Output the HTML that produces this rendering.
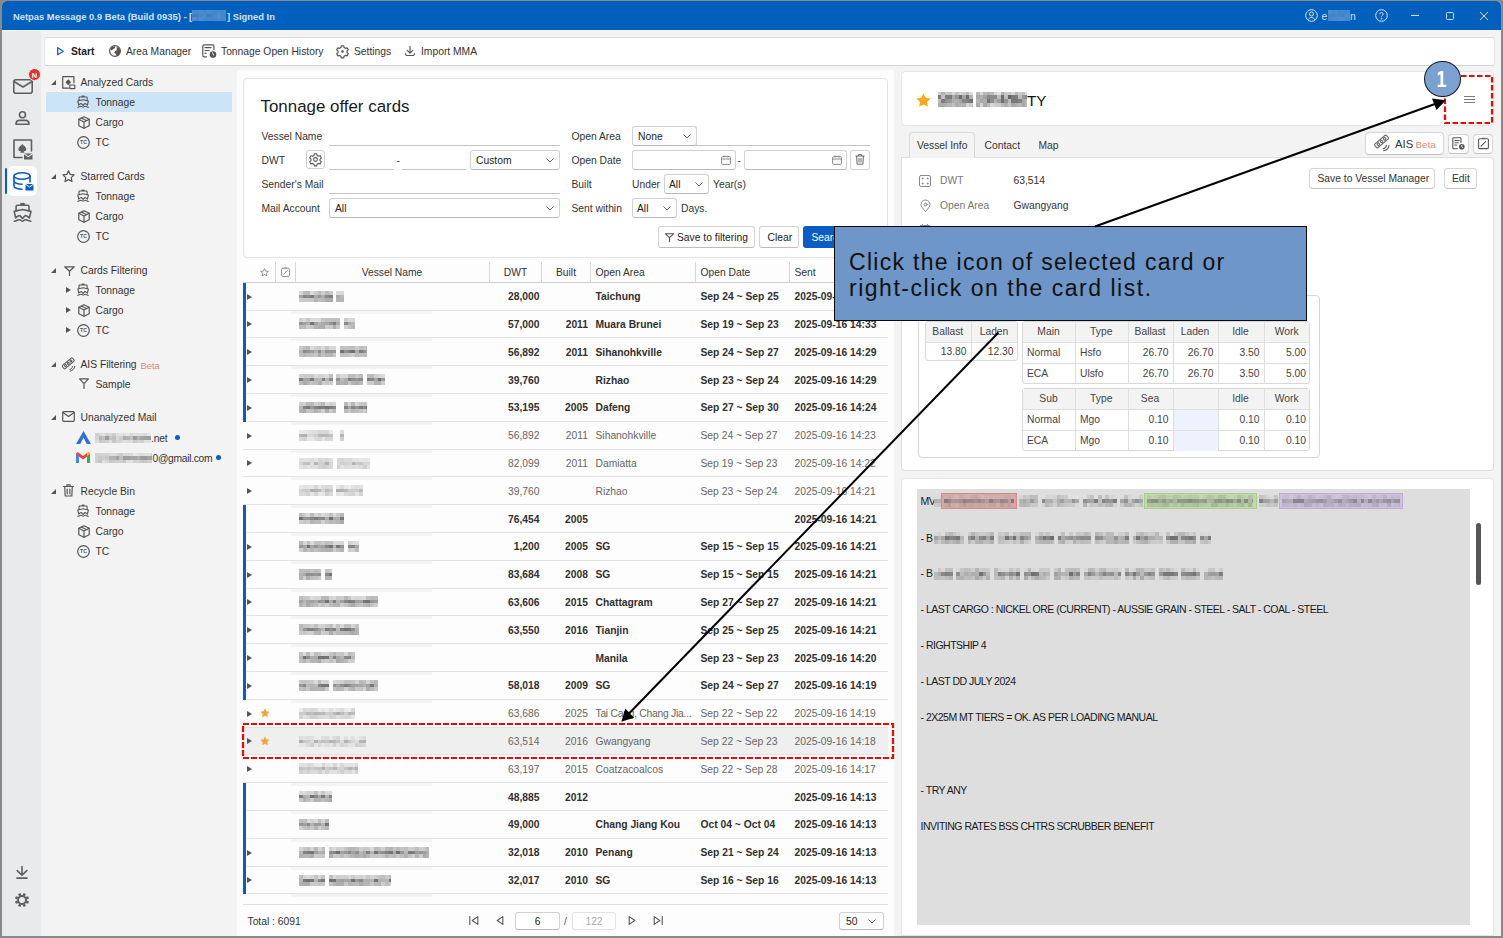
<!DOCTYPE html><html><head><meta charset="utf-8"><title>Netpas Message</title><style>
*{box-sizing:border-box}
html,body{margin:0;padding:0}
body{width:1503px;height:938px;overflow:hidden;position:relative;background:#8a8a8a;font-family:"Liberation Sans",sans-serif;font-size:10.3px;color:#333}
.a{position:absolute}
.t{position:absolute;white-space:nowrap;line-height:14px}
svg{position:absolute;overflow:visible}
</style></head><body>
<div class="a" style="left:2px;top:1px;width:1499px;height:935px;background:#f3f3f3;border-radius:5px 5px 0 0"></div>
<div class="a" style="left:2px;top:1px;width:1499px;height:29px;background:#0160be;border-radius:5px 5px 0 0"></div>
<div class="t" style="left:13px;top:9.5px;font-size:9.4px;color:#d3e3f4;font-weight:bold;">Netpas Message 0.9 Beta (Build 0935) - [</div>
<div class="a" style="left:192px;top:10.0px;width:34px;height:3.67px;background:linear-gradient(90deg,rgba(234,234,234,0.3) 0.0px 3.5px,rgba(229,229,229,0.3) 3.5px 7.0px,rgba(244,244,244,0.3) 7.0px 10.5px,rgba(227,227,227,0.3) 10.5px 14.0px,rgba(241,241,241,0.3) 14.0px 17.5px,rgba(235,235,235,0.3) 17.5px 21.0px,rgba(226,226,226,0.3) 21.0px 24.5px,rgba(240,240,240,0.3) 24.5px 28.0px,rgba(226,226,226,0.3) 28.0px 31.5px,rgba(238,238,238,0.3) 31.5px 34.0px)"></div><div class="a" style="left:192px;top:13.7px;width:34px;height:3.67px;background:linear-gradient(90deg,rgba(199,199,199,0.3) 0.0px 3.5px,rgba(200,200,200,0.3) 3.5px 7.0px,rgba(220,220,220,0.3) 7.0px 10.5px,rgba(244,244,244,0.3) 10.5px 14.0px,rgba(202,202,202,0.3) 14.0px 17.5px,rgba(208,208,208,0.3) 17.5px 21.0px,rgba(232,232,232,0.3) 21.0px 24.5px,rgba(251,251,251,0.3) 24.5px 28.0px,rgba(229,229,229,0.3) 28.0px 31.5px,rgba(218,218,218,0.3) 31.5px 34.0px)"></div><div class="a" style="left:192px;top:17.3px;width:34px;height:3.67px;background:linear-gradient(90deg,rgba(250,250,250,0.3) 0.0px 3.5px,rgba(222,222,222,0.3) 3.5px 7.0px,rgba(247,247,247,0.3) 7.0px 10.5px,rgba(230,230,230,0.3) 10.5px 14.0px,rgba(225,225,225,0.3) 14.0px 17.5px,rgba(224,224,224,0.3) 17.5px 21.0px,rgba(230,230,230,0.3) 21.0px 24.5px,rgba(245,245,245,0.3) 24.5px 28.0px,rgba(226,226,226,0.3) 28.0px 31.5px,rgba(238,238,238,0.3) 31.5px 34.0px)"></div>
<div class="t" style="left:227px;top:9.5px;font-size:9.4px;color:#d3e3f4;font-weight:bold;">] Signed In</div>
<svg style="left:1305px;top:9px" width="13" height="13" viewBox="0 0 13 13" fill="none" stroke="#dce8f5" stroke-width="1"><circle cx="6.5" cy="6.5" r="5.8"/><circle cx="6.5" cy="5" r="2"/><path d="M3 10.8c1-1.6 2-2.3 3.5-2.3s2.5.7 3.5 2.3"/></svg>
<div class="t" style="left:1321.5px;top:9.5px;font-size:10.3px;color:#d5e3f3;">e</div>
<div class="a" style="left:1328px;top:10.0px;width:22px;height:3.67px;background:linear-gradient(90deg,rgba(244,244,244,0.3) 0.0px 3.5px,rgba(236,236,236,0.3) 3.5px 7.0px,rgba(241,241,241,0.3) 7.0px 10.5px,rgba(226,226,226,0.3) 10.5px 14.0px,rgba(226,226,226,0.3) 14.0px 17.5px,rgba(231,231,231,0.3) 17.5px 21.0px,rgba(245,245,245,0.3) 21.0px 22.0px)"></div><div class="a" style="left:1328px;top:13.7px;width:22px;height:3.67px;background:linear-gradient(90deg,rgba(220,220,220,0.3) 0.0px 3.5px,rgba(213,213,213,0.3) 3.5px 7.0px,rgba(230,230,230,0.3) 7.0px 10.5px,rgba(222,222,222,0.3) 10.5px 14.0px,rgba(212,212,212,0.3) 14.0px 17.5px,rgba(242,242,242,0.3) 17.5px 21.0px,rgba(236,236,236,0.3) 21.0px 22.0px)"></div><div class="a" style="left:1328px;top:17.3px;width:22px;height:3.67px;background:linear-gradient(90deg,rgba(228,228,228,0.3) 0.0px 3.5px,rgba(238,238,238,0.3) 3.5px 7.0px,rgba(237,237,237,0.3) 7.0px 10.5px,rgba(247,247,247,0.3) 10.5px 14.0px,rgba(243,243,243,0.3) 14.0px 17.5px,rgba(230,230,230,0.3) 17.5px 21.0px,rgba(250,250,250,0.3) 21.0px 22.0px)"></div>
<div class="t" style="left:1350px;top:9.5px;font-size:10.3px;color:#d5e3f3;">n</div>
<svg style="left:1375px;top:9px" width="13" height="13" viewBox="0 0 13 13" fill="none" stroke="#dce8f5" stroke-width="1"><circle cx="6.5" cy="6.5" r="5.8"/><path d="M4.8 5.2c0-1 .8-1.7 1.7-1.7s1.7.7 1.7 1.6c0 1.2-1.7 1.3-1.7 2.6"/><circle cx="6.5" cy="9.6" r=".4" fill="#dce8f5"/></svg>
<div class="a" style="left:1411px;top:15px;width:8px;height:1px;background:#d0e0f2"></div>
<div class="a" style="left:1446px;top:11.5px;width:8px;height:8px;border:1px solid #d0e0f2;border-radius:1.5px"></div>
<svg style="left:1480px;top:11.5px" width="8" height="8" viewBox="0 0 8 8" stroke="#d0e0f2" stroke-width="1"><path d="M0 0L8 8M8 0L0 8"/></svg>
<div class="a" style="left:2px;top:30px;width:39px;height:906px;background:#e9eaec"></div>
<div class="a" style="left:2px;top:30px;width:1499px;height:1px;background:#f6f4f1"></div>
<svg style="left:13px;top:79px" width="20" height="15" viewBox="0 0 20 15" fill="none" stroke="#5f5f5f" stroke-width="1.6" stroke-linecap="round" stroke-linejoin="round"><rect x="0.8" y="0.8" width="18.4" height="13.4" rx="2"/><path d="M1 2.5l9 5.5l9-5.5"/></svg>
<div class="a" style="left:28px;top:68px;width:13px;height:13px;background:#e8302f;border-radius:50%;border:1px solid #e6f4f4"></div>
<div class="t" style="left:28px;top:68.5px;font-size:7.5px;color:#fff;font-weight:bold;"><span style="display:inline-block;width:13px;text-align:center">N</span></div>
<svg style="left:15px;top:111px" width="15" height="15" viewBox="0 0 15 15" fill="none" stroke="#5f5f5f" stroke-width="1.6" stroke-linecap="round" stroke-linejoin="round"><circle cx="7.5" cy="3.8" r="3"/><path d="M1 13.2c0-2.6 1.6-3.8 3.5-3.8h6c1.9 0 3.5 1.2 3.5 3.8z"/></svg>
<svg style="left:13px;top:139px" width="20" height="21" viewBox="0 0 20 21" fill="none" stroke="#5f5f5f" stroke-width="1.6" stroke-linecap="round" stroke-linejoin="round"><path d="M9 18.5H1V1h17.5v11"/><path d="M9.3 5c-1 1.6-4 3-4 5.2c0 1.4 1.3 2.3 2.6 1.8l-.7 1.8h4.2l-.7-1.8c1.3.5 2.6-.4 2.6-1.8c0-2.2-3-3.6-4-5.2z" fill="#5f5f5f" stroke="none"/><rect x="11" y="14.5" width="8.5" height="6" fill="#5f5f5f" stroke="none"/><path d="M11 14.8l4.25 2.8l4.25-2.8" stroke="#e9eaec" stroke-width="1.1"/></svg>
<div class="a" style="left:8px;top:166px;width:29px;height:30px;background:#fff;border-radius:5px"></div>
<div class="a" style="left:5px;top:168px;width:2px;height:26px;background:#0b5cc4;border-radius:1px"></div>
<svg style="left:13px;top:172px" width="21" height="19" viewBox="0 0 21 19" fill="none" stroke="#0b5cc4" stroke-width="1.6" stroke-linecap="round"><ellipse cx="9" cy="4" rx="8" ry="3.2"/><path d="M1 4v10c0 1.8 3.6 3.2 8 3.2M17 4v6M1 9c0 1.8 3.6 3.2 8 3.2"/><rect x="12.5" y="12" width="8" height="6.5" fill="#0b5cc4" stroke="none"/><path d="M12.5 12.3l4 2.6l4-2.6" stroke="#fff" stroke-width="1"/></svg>
<svg style="left:13px;top:202px" width="19" height="20" viewBox="0 0 19 20" fill="none" stroke="#5f5f5f" stroke-width="1.6" stroke-linecap="round" stroke-linejoin="round"><rect x="7.3" y="0.9" width="4.5" height="2.4" fill="#5f5f5f" stroke="none"/><path d="M3.1 8.8V4.6c0-.8.6-1.4 1.4-1.4h10.1c.8 0 1.4.6 1.4 1.4v4.2"/><path d="M1.2 9.4L9.5 7.5L18 9.4L16.4 16C15 14.5 14.2 13.6 12.8 13.6S10.6 15.3 9.5 16.5C8.4 15.3 7.6 13.6 6.3 13.6S4 14.5 2.7 16z"/><path d="M1.2 19.3c1.8 0 3.3-1.5 5.1-1.5s2.3 1.5 3.2 1.5s1.5-1.5 3.3-1.5s3.3 1.5 5.1 1.5"/></svg>
<svg style="left:16px;top:866px" width="12" height="13" viewBox="0 0 12 13" fill="none" stroke="#5f5f5f" stroke-width="1.6" stroke-linecap="round" stroke-linejoin="round"><path d="M6 .6v8.6M1.2 4.6L6 9.3l4.8-4.7M.9 12.1h10.2"/></svg>
<svg style="left:14px;top:892px" width="16" height="16" viewBox="0 0 16 16" fill="none" stroke="#5f5f5f" stroke-linecap="butt"><circle cx="8" cy="8" r="4.0" stroke-width="1.9"/><path d="M12.25 9.76L14.56 10.72M9.76 12.25L10.72 14.56M6.24 12.25L5.28 14.56M3.75 9.76L1.44 10.72M3.75 6.24L1.44 5.28M6.24 3.75L5.28 1.44M9.76 3.75L10.72 1.44M12.25 6.24L14.56 5.28" stroke-width="2.5"/></svg>
<div class="a" style="left:44px;top:36.5px;width:1451px;height:29.5px;background:#fff;border:1px solid #e6e6e6;border-top-color:#d9d9d9;border-bottom-color:#d4d4d4;border-radius:3px"></div>
<svg style="left:56.5px;top:46.8px" width="7" height="8.5" viewBox="0 0 7 8.5" fill="none" stroke="#1565c0" stroke-width="1.3" stroke-linejoin="round"><path d="M.7 .7v7.1l5.6-3.55z"/></svg>
<div class="t" style="left:71px;top:45.0px;font-size:10.3px;color:#222;font-weight:bold;">Start</div>
<svg style="left:109px;top:45px" width="12" height="12" viewBox="0 0 12 12" ><circle cx="6" cy="6" r="5.4" fill="none" stroke="#555" stroke-width="1.2"/><path d="M1.6 3.6L3.4 1.7L6.2 1.3L6 3L3.9 4.4L2.1 5.6z M7.6 2L9.9 2.8L11 5L11.1 7.8L9.4 10.4L7.3 11L7 9.1L5.3 7.8L6.1 6L7.8 5.3z" fill="#555"/></svg>
<div class="t" style="left:126px;top:45.0px;font-size:10.3px;color:#333;">Area Manager</div>
<svg style="left:202px;top:44px" width="15" height="14" viewBox="0 0 15 14" fill="none" stroke="#555" stroke-width="1.2" stroke-linecap="round" stroke-linejoin="round"><path d="M12 5.5V2.3c0-.9-.6-1.5-1.5-1.5H2.3c-.9 0-1.5.6-1.5 1.5v9c0 .9.6 1.5 1.5 1.5h2.2"/><path d="M3 3.6h6M3 6.5h4M3 9.2h1"/><circle cx="11" cy="10.6" r="3.3" fill="#555" stroke="none"/><path d="M10.6 8.8l.9 2.2" stroke="#fff" stroke-width=".9"/></svg>
<div class="t" style="left:221px;top:45.0px;font-size:10.3px;color:#333;">Tonnage Open History</div>
<svg style="left:336px;top:45px" width="13" height="13" viewBox="0 0 13 13" fill="none" stroke="#555" stroke-width="1.2" stroke-linecap="round" stroke-linejoin="round"><path d="M5.3 .8h2.4l.4 1.7l1.3.8l1.7-.5l1.2 2.1l-1.3 1.2v1.5l1.3 1.2l-1.2 2.1l-1.7-.5l-1.3.8l-.4 1.7H5.3l-.4-1.7l-1.3-.8l-1.7.5L.7 8.8L2 7.6V6.1L.7 4.9l1.2-2.1l1.7.5l1.3-.8z"/><circle cx="6.5" cy="6.5" r="1.3" fill="#555" stroke="none"/></svg>
<div class="t" style="left:354px;top:45.0px;font-size:10.3px;color:#333;">Settings</div>
<svg style="left:405px;top:46px" width="10" height="10" viewBox="0 0 10 10" fill="none" stroke="#555" stroke-width="1.2" stroke-linecap="round" stroke-linejoin="round"><path d="M5 .6v6.3M2.2 4.4L5 7.1l2.8-2.7M.7 7.5v.8c0 .8.6 1.2 1.2 1.2h6.2c.7 0 1.2-.5 1.2-1.2v-.8"/></svg>
<div class="t" style="left:421px;top:45.0px;font-size:10.3px;color:#333;">Import MMA</div>
<svg style="left:50.5px;top:80px" width="5" height="5" viewBox="0 0 5 5"><path d="M5 0v5H0z" fill="#555"/></svg><svg style="left:62px;top:76px" width="13" height="13" viewBox="0 0 13 13" fill="none" stroke="#555" stroke-width="1.2" stroke-linecap="round" stroke-linejoin="round"><path d="M6.5 12.2H.7V.7h11.2v6"/><path d="M6.3 3.2c-.6 1-2.5 1.9-2.5 3.3c0 .9.8 1.4 1.6 1.1l-.4 1.1h2.6l-.4-1.1c.8.3 1.6-.2 1.6-1.1c0-1.4-1.9-2.3-2.5-3.3z" fill="#555" stroke="none"/><rect x="7.8" y="9" width="5" height="3.6" rx=".4"/></svg><div class="t" style="left:80.5px;top:76.0px;font-size:10.3px;color:#333;">Analyzed Cards</div>
<div class="a" style="left:46px;top:92px;width:186px;height:20px;background:#cce4f7"></div><svg style="left:77.3px;top:95.0px" width="12.2" height="12.8" viewBox="0 0 19.2 20.2" fill="none" stroke="#555" stroke-width="1.75" stroke-linecap="round" stroke-linejoin="round"><rect x="7.3" y="0.9" width="4.5" height="2.4" fill="#555" stroke="none"/><path d="M3.1 8.8V4.6c0-.8.6-1.4 1.4-1.4h10.1c.8 0 1.4.6 1.4 1.4v4.2"/><path d="M1.2 9.4L9.5 7.5L18 9.4L16.4 16C15 14.5 14.2 13.6 12.8 13.6S10.6 15.3 9.5 16.5C8.4 15.3 7.6 13.6 6.3 13.6S4 14.5 2.7 16z"/><path d="M1.2 19.3c1.8 0 3.3-1.5 5.1-1.5s2.3 1.5 3.2 1.5s1.5-1.5 3.3-1.5s3.3 1.5 5.1 1.5"/></svg><div class="t" style="left:95.5px;top:96.0px;font-size:10.3px;color:#333;">Tonnage</div>
<svg style="left:77.8px;top:115.5px" width="12" height="13" viewBox="0 0 12 13" fill="none" stroke="#555" stroke-width="1.2" stroke-linecap="round" stroke-linejoin="round"><path d="M6 .7l5.2 2.6v6.4L6 12.3L.8 9.7V3.3z"/><path d="M.8 3.3L6 6l5.2-2.7M6 6v6.3M3.4 2l5.2 2.7"/></svg><div class="t" style="left:95.5px;top:116.0px;font-size:10.3px;color:#333;">Cargo</div>
<svg style="left:77px;top:135.5px" width="13" height="13" viewBox="0 0 13 13" fill="none" stroke="#555" stroke-width="1.2" stroke-linecap="round" stroke-linejoin="round"><circle cx="6.5" cy="6.5" r="5.8"/><text x="6.5" y="8.4" font-size="5.2" text-anchor="middle" fill="#555" stroke="none" font-family="Liberation Sans" font-weight="bold">TC</text></svg><div class="t" style="left:95.5px;top:136.0px;font-size:10.3px;color:#333;">TC</div>
<svg style="left:50.5px;top:174px" width="5" height="5" viewBox="0 0 5 5"><path d="M5 0v5H0z" fill="#555"/></svg><svg style="left:62px;top:170px" width="13" height="13" viewBox="0 0 13 13" fill="none" stroke="#555" stroke-width="1.2" stroke-linecap="round" stroke-linejoin="round"><path d="M6.5.8l1.7 3.6l3.9.5l-2.9 2.7l.8 3.9L6.5 9.6l-3.5 1.9l.8-3.9L.9 4.9l3.9-.5z"/></svg><div class="t" style="left:80.5px;top:170.0px;font-size:10.3px;color:#333;">Starred Cards</div>
<svg style="left:77.3px;top:189.0px" width="12.2" height="12.8" viewBox="0 0 19.2 20.2" fill="none" stroke="#555" stroke-width="1.75" stroke-linecap="round" stroke-linejoin="round"><rect x="7.3" y="0.9" width="4.5" height="2.4" fill="#555" stroke="none"/><path d="M3.1 8.8V4.6c0-.8.6-1.4 1.4-1.4h10.1c.8 0 1.4.6 1.4 1.4v4.2"/><path d="M1.2 9.4L9.5 7.5L18 9.4L16.4 16C15 14.5 14.2 13.6 12.8 13.6S10.6 15.3 9.5 16.5C8.4 15.3 7.6 13.6 6.3 13.6S4 14.5 2.7 16z"/><path d="M1.2 19.3c1.8 0 3.3-1.5 5.1-1.5s2.3 1.5 3.2 1.5s1.5-1.5 3.3-1.5s3.3 1.5 5.1 1.5"/></svg><div class="t" style="left:95.5px;top:190.0px;font-size:10.3px;color:#333;">Tonnage</div>
<svg style="left:77.8px;top:209.5px" width="12" height="13" viewBox="0 0 12 13" fill="none" stroke="#555" stroke-width="1.2" stroke-linecap="round" stroke-linejoin="round"><path d="M6 .7l5.2 2.6v6.4L6 12.3L.8 9.7V3.3z"/><path d="M.8 3.3L6 6l5.2-2.7M6 6v6.3M3.4 2l5.2 2.7"/></svg><div class="t" style="left:95.5px;top:210.0px;font-size:10.3px;color:#333;">Cargo</div>
<svg style="left:77px;top:229.5px" width="13" height="13" viewBox="0 0 13 13" fill="none" stroke="#555" stroke-width="1.2" stroke-linecap="round" stroke-linejoin="round"><circle cx="6.5" cy="6.5" r="5.8"/><text x="6.5" y="8.4" font-size="5.2" text-anchor="middle" fill="#555" stroke="none" font-family="Liberation Sans" font-weight="bold">TC</text></svg><div class="t" style="left:95.5px;top:230.0px;font-size:10.3px;color:#333;">TC</div>
<svg style="left:50.5px;top:268px" width="5" height="5" viewBox="0 0 5 5"><path d="M5 0v5H0z" fill="#555"/></svg><svg style="left:63.5px;top:265.5px" width="11" height="10" viewBox="0 0 11 10" fill="none" stroke="#555" stroke-width="1.2" stroke-linecap="round" stroke-linejoin="round"><path d="M.7 .8h9.6M.7 .8L5.5 5.2L10.3 .8M5.5 5.2v4.3"/></svg><div class="t" style="left:80.5px;top:264.0px;font-size:10.3px;color:#333;">Cards Filtering</div>
<svg style="left:66px;top:287px" width="5" height="6" viewBox="0 0 5 6"><path d="M0 0l5 3L0 6z" fill="#555"/></svg><svg style="left:77.3px;top:283.0px" width="12.2" height="12.8" viewBox="0 0 19.2 20.2" fill="none" stroke="#555" stroke-width="1.75" stroke-linecap="round" stroke-linejoin="round"><rect x="7.3" y="0.9" width="4.5" height="2.4" fill="#555" stroke="none"/><path d="M3.1 8.8V4.6c0-.8.6-1.4 1.4-1.4h10.1c.8 0 1.4.6 1.4 1.4v4.2"/><path d="M1.2 9.4L9.5 7.5L18 9.4L16.4 16C15 14.5 14.2 13.6 12.8 13.6S10.6 15.3 9.5 16.5C8.4 15.3 7.6 13.6 6.3 13.6S4 14.5 2.7 16z"/><path d="M1.2 19.3c1.8 0 3.3-1.5 5.1-1.5s2.3 1.5 3.2 1.5s1.5-1.5 3.3-1.5s3.3 1.5 5.1 1.5"/></svg><div class="t" style="left:95.5px;top:284.0px;font-size:10.3px;color:#333;">Tonnage</div>
<svg style="left:66px;top:307px" width="5" height="6" viewBox="0 0 5 6"><path d="M0 0l5 3L0 6z" fill="#555"/></svg><svg style="left:77.8px;top:303.5px" width="12" height="13" viewBox="0 0 12 13" fill="none" stroke="#555" stroke-width="1.2" stroke-linecap="round" stroke-linejoin="round"><path d="M6 .7l5.2 2.6v6.4L6 12.3L.8 9.7V3.3z"/><path d="M.8 3.3L6 6l5.2-2.7M6 6v6.3M3.4 2l5.2 2.7"/></svg><div class="t" style="left:95.5px;top:304.0px;font-size:10.3px;color:#333;">Cargo</div>
<svg style="left:66px;top:327px" width="5" height="6" viewBox="0 0 5 6"><path d="M0 0l5 3L0 6z" fill="#555"/></svg><svg style="left:77px;top:323.5px" width="13" height="13" viewBox="0 0 13 13" fill="none" stroke="#555" stroke-width="1.2" stroke-linecap="round" stroke-linejoin="round"><circle cx="6.5" cy="6.5" r="5.8"/><text x="6.5" y="8.4" font-size="5.2" text-anchor="middle" fill="#555" stroke="none" font-family="Liberation Sans" font-weight="bold">TC</text></svg><div class="t" style="left:95.5px;top:324.0px;font-size:10.3px;color:#333;">TC</div>
<svg style="left:50.5px;top:362px" width="5" height="5" viewBox="0 0 5 5"><path d="M5 0v5H0z" fill="#555"/></svg><svg style="left:61px;top:357px" width="15" height="14" viewBox="0 0 15 14" fill="none" stroke="#555" stroke-width="1" stroke-linecap="round"><g transform="rotate(-40 7.2 6.3)"><rect x=".6" y="4.2" width="13.2" height="4.2" rx="1"/><circle cx="3.6" cy="6.3" r="1"/><circle cx="7.2" cy="6.3" r="1"/><circle cx="10.8" cy="6.3" r="1"/></g><path d="M8.8 12.4c1.4-.3 2.6-1.4 2.9-2.9M9 14.2c2.5-.4 4.4-2.3 4.8-4.8"/></svg><div class="t" style="left:80.5px;top:358.0px;font-size:10.3px;color:#333;">AIS Filtering</div>
<div class="t" style="left:140.5px;top:358.5px;font-size:9.4px;color:#d98a73;">Beta</div>
<svg style="left:79px;top:378px" width="10" height="11" viewBox="0 0 10 11" fill="none" stroke="#555" stroke-width="1.2" stroke-linecap="round" stroke-linejoin="round"><path d="M.6 .9h8.8M.6 .9L5 5.6L9.4 .9M5 5.6v4.8"/></svg>
<div class="t" style="left:95.5px;top:378.0px;font-size:10.3px;color:#333;">Sample</div>
<svg style="left:50.5px;top:415px" width="5" height="5" viewBox="0 0 5 5"><path d="M5 0v5H0z" fill="#555"/></svg><svg style="left:62px;top:411px" width="13" height="11" viewBox="0 0 13 11" fill="none" stroke="#555" stroke-width="1.2" stroke-linecap="round" stroke-linejoin="round"><rect x=".7" y=".7" width="11.6" height="9.6" rx="1"/><path d="M.9 1.5l5.6 4l5.6-4"/></svg><div class="t" style="left:80.5px;top:411.0px;font-size:10.3px;color:#333;">Unanalyzed Mail</div>
<svg style="left:76px;top:431px" width="15" height="13" viewBox="0 0 15 13" ><path d="M7.5 0L0 13h4.2L7.5 6.8L10.8 13H15z" fill="#2f6fdc"/><path d="M7.5 8.5l-2 4.5h4z" fill="#fff"/></svg>
<div class="a" style="left:95px;top:433.0px;width:56px;height:3.33px;background:linear-gradient(90deg,rgb(208,208,208) 0.0px 3.5px,rgb(217,217,217) 3.5px 7.0px,rgb(227,227,227) 7.0px 10.5px,rgb(209,209,209) 10.5px 14.0px,rgb(219,219,219) 14.0px 17.5px,rgb(206,206,206) 17.5px 21.0px,rgb(225,225,225) 21.0px 24.5px,rgb(227,227,227) 24.5px 28.0px,rgb(222,222,222) 28.0px 31.5px,rgb(231,231,231) 31.5px 35.0px,rgb(214,214,214) 35.0px 38.5px,rgb(225,225,225) 38.5px 42.0px,rgb(222,222,222) 42.0px 45.5px,rgb(222,222,222) 45.5px 49.0px,rgb(218,218,218) 49.0px 52.5px,rgb(230,230,230) 52.5px 56.0px)"></div><div class="a" style="left:95px;top:436.3px;width:56px;height:3.33px;background:linear-gradient(90deg,rgb(211,211,211) 0.0px 3.5px,rgb(183,183,183) 3.5px 7.0px,rgb(194,194,194) 7.0px 10.5px,rgb(158,158,158) 10.5px 14.0px,rgb(197,197,197) 14.0px 17.5px,rgb(193,193,193) 17.5px 21.0px,rgb(214,214,214) 21.0px 24.5px,rgb(204,204,204) 24.5px 28.0px,rgb(172,172,172) 28.0px 31.5px,rgb(178,178,178) 31.5px 35.0px,rgb(195,195,195) 35.0px 38.5px,rgb(156,156,156) 38.5px 42.0px,rgb(182,182,182) 42.0px 45.5px,rgb(165,165,165) 45.5px 49.0px,rgb(162,162,162) 49.0px 52.5px,rgb(158,158,158) 52.5px 56.0px)"></div><div class="a" style="left:95px;top:439.7px;width:56px;height:3.33px;background:linear-gradient(90deg,rgb(219,219,219) 0.0px 3.5px,rgb(200,200,200) 3.5px 7.0px,rgb(204,204,204) 7.0px 10.5px,rgb(208,208,208) 10.5px 14.0px,rgb(222,222,222) 14.0px 17.5px,rgb(199,199,199) 17.5px 21.0px,rgb(210,210,210) 21.0px 24.5px,rgb(213,213,213) 24.5px 28.0px,rgb(223,223,223) 28.0px 31.5px,rgb(221,221,221) 31.5px 35.0px,rgb(222,222,222) 35.0px 38.5px,rgb(204,204,204) 38.5px 42.0px,rgb(209,209,209) 42.0px 45.5px,rgb(207,207,207) 45.5px 49.0px,rgb(223,223,223) 49.0px 52.5px,rgb(225,225,225) 52.5px 56.0px)"></div>
<div class="t" style="left:151px;top:431.5px;font-size:10.3px;color:#333;letter-spacing:-0.2px">.net</div>
<div class="a" style="left:175px;top:435px;width:5px;height:5px;background:#0b5cc4;border-radius:50%"></div>
<svg style="left:76px;top:452px" width="14" height="11" viewBox="0 0 14 11" ><path d="M0 1.5v9.5h3V4.5l4 3l4-3V11h3V1.5L12.5 0L7 4L1.5 0z" fill="#ea4335"/><path d="M0 1.5v9.5h3V4.5z" fill="#4285f4"/><path d="M11 4.5V11h3V1.5z" fill="#34a853"/><path d="M14 1.5L12.5 0L11 1.2v3.3z" fill="#fbbc04"/></svg>
<div class="a" style="left:95px;top:453.0px;width:57px;height:3.33px;background:linear-gradient(90deg,rgb(209,209,209) 0.0px 3.5px,rgb(210,210,210) 3.5px 7.0px,rgb(211,211,211) 7.0px 10.5px,rgb(212,212,212) 10.5px 14.0px,rgb(219,219,219) 14.0px 17.5px,rgb(222,222,222) 17.5px 21.0px,rgb(212,212,212) 21.0px 24.5px,rgb(205,205,205) 24.5px 28.0px,rgb(217,217,217) 28.0px 31.5px,rgb(216,216,216) 31.5px 35.0px,rgb(221,221,221) 35.0px 38.5px,rgb(233,233,233) 38.5px 42.0px,rgb(225,225,225) 42.0px 45.5px,rgb(220,220,220) 45.5px 49.0px,rgb(223,223,223) 49.0px 52.5px,rgb(225,225,225) 52.5px 56.0px,rgb(206,206,206) 56.0px 57.0px)"></div><div class="a" style="left:95px;top:456.3px;width:57px;height:3.33px;background:linear-gradient(90deg,rgb(208,208,208) 0.0px 3.5px,rgb(201,201,201) 3.5px 7.0px,rgb(207,207,207) 7.0px 10.5px,rgb(202,202,202) 10.5px 14.0px,rgb(178,178,178) 14.0px 17.5px,rgb(178,178,178) 17.5px 21.0px,rgb(161,161,161) 21.0px 24.5px,rgb(193,193,193) 24.5px 28.0px,rgb(158,158,158) 28.0px 31.5px,rgb(159,159,159) 31.5px 35.0px,rgb(167,167,167) 35.0px 38.5px,rgb(164,164,164) 38.5px 42.0px,rgb(175,175,175) 42.0px 45.5px,rgb(158,158,158) 45.5px 49.0px,rgb(155,155,155) 49.0px 52.5px,rgb(164,164,164) 52.5px 56.0px,rgb(161,161,161) 56.0px 57.0px)"></div><div class="a" style="left:95px;top:459.7px;width:57px;height:3.33px;background:linear-gradient(90deg,rgb(207,207,207) 0.0px 3.5px,rgb(197,197,197) 3.5px 7.0px,rgb(222,222,222) 7.0px 10.5px,rgb(215,215,215) 10.5px 14.0px,rgb(201,201,201) 14.0px 17.5px,rgb(204,204,204) 17.5px 21.0px,rgb(207,207,207) 21.0px 24.5px,rgb(207,207,207) 24.5px 28.0px,rgb(200,200,200) 28.0px 31.5px,rgb(222,222,222) 31.5px 35.0px,rgb(226,226,226) 35.0px 38.5px,rgb(210,210,210) 38.5px 42.0px,rgb(211,211,211) 42.0px 45.5px,rgb(199,199,199) 45.5px 49.0px,rgb(199,199,199) 49.0px 52.5px,rgb(206,206,206) 52.5px 56.0px,rgb(204,204,204) 56.0px 57.0px)"></div>
<div class="t" style="left:152.5px;top:451.5px;font-size:10.3px;color:#333;letter-spacing:-0.3px">0@gmail.com</div>
<div class="a" style="left:216px;top:455px;width:5px;height:5px;background:#0b5cc4;border-radius:50%"></div>
<svg style="left:50.5px;top:489px" width="5" height="5" viewBox="0 0 5 5"><path d="M5 0v5H0z" fill="#555"/></svg><svg style="left:63px;top:484px" width="11" height="13" viewBox="0 0 11 13" fill="none" stroke="#555" stroke-width="1.2" stroke-linecap="round" stroke-linejoin="round"><path d="M.5 2.5h10M3.8 2.3V.8h3.4v1.5M1.7 2.5l.5 9.5h6.6l.5-9.5M4.2 5v5M6.8 5v5"/></svg><div class="t" style="left:80.5px;top:485.0px;font-size:10.3px;color:#333;">Recycle Bin</div>
<svg style="left:77.3px;top:504.0px" width="12.2" height="12.8" viewBox="0 0 19.2 20.2" fill="none" stroke="#555" stroke-width="1.75" stroke-linecap="round" stroke-linejoin="round"><rect x="7.3" y="0.9" width="4.5" height="2.4" fill="#555" stroke="none"/><path d="M3.1 8.8V4.6c0-.8.6-1.4 1.4-1.4h10.1c.8 0 1.4.6 1.4 1.4v4.2"/><path d="M1.2 9.4L9.5 7.5L18 9.4L16.4 16C15 14.5 14.2 13.6 12.8 13.6S10.6 15.3 9.5 16.5C8.4 15.3 7.6 13.6 6.3 13.6S4 14.5 2.7 16z"/><path d="M1.2 19.3c1.8 0 3.3-1.5 5.1-1.5s2.3 1.5 3.2 1.5s1.5-1.5 3.3-1.5s3.3 1.5 5.1 1.5"/></svg><div class="t" style="left:95.5px;top:505.0px;font-size:10.3px;color:#333;">Tonnage</div>
<svg style="left:77.8px;top:524.5px" width="12" height="13" viewBox="0 0 12 13" fill="none" stroke="#555" stroke-width="1.2" stroke-linecap="round" stroke-linejoin="round"><path d="M6 .7l5.2 2.6v6.4L6 12.3L.8 9.7V3.3z"/><path d="M.8 3.3L6 6l5.2-2.7M6 6v6.3M3.4 2l5.2 2.7"/></svg><div class="t" style="left:95.5px;top:525.0px;font-size:10.3px;color:#333;">Cargo</div>
<svg style="left:77px;top:544.5px" width="13" height="13" viewBox="0 0 13 13" fill="none" stroke="#555" stroke-width="1.2" stroke-linecap="round" stroke-linejoin="round"><circle cx="6.5" cy="6.5" r="5.8"/><text x="6.5" y="8.4" font-size="5.2" text-anchor="middle" fill="#555" stroke="none" font-family="Liberation Sans" font-weight="bold">TC</text></svg><div class="t" style="left:95.5px;top:545.0px;font-size:10.3px;color:#333;">TC</div>
<div class="a" style="left:237px;top:70px;width:657px;height:866px;background:#fdfdfd"></div>
<div class="a" style="left:243px;top:78px;width:645px;height:180px;background:#fff;border:1px solid #e2e2e2;border-radius:4px"></div>
<div class="t" style="left:260.5px;top:100.0px;font-size:16.9px;color:#1b1b1b;line-height:14px">Tonnage offer cards</div>
<div class="t" style="left:261.5px;top:129.5px;font-size:10.3px;color:#333;">Vessel Name</div>
<div class="a" style="left:329px;top:145px;width:231px;height:1px;background:#c4c4c4"></div>
<div class="t" style="left:261.5px;top:153.5px;font-size:10.3px;color:#333;">DWT</div>
<div class="a" style="left:306px;top:150px;width:19px;height:19px;background:#fff;border:1px solid #cfcfcf;border-radius:3px"></div>
<svg style="left:309px;top:153px" width="13" height="13" viewBox="0 0 13 13" fill="none" stroke="#555" stroke-width="1.1" stroke-linejoin="round"><path d="M5.3 .8h2.4l.4 1.7l1.3.8l1.7-.5l1.2 2.1l-1.3 1.2v1.5l1.3 1.2l-1.2 2.1l-1.7-.5l-1.3.8l-.4 1.7H5.3l-.4-1.7l-1.3-.8l-1.7.5L.7 8.8L2 7.6V6.1L.7 4.9l1.2-2.1l1.7.5l1.3-.8z"/><circle cx="6.5" cy="6.5" r="1.9"/></svg>
<div class="a" style="left:329px;top:169px;width:65px;height:1px;background:#c4c4c4"></div>
<div class="t" style="left:396.5px;top:154.0px;font-size:10.3px;color:#333;">-</div>
<div class="a" style="left:402px;top:169px;width:64px;height:1px;background:#c4c4c4"></div>
<div class="a" style="left:470px;top:150px;width:90px;height:20px;background:#fff;border:1px solid #d0d0d0;border-bottom-color:#b8b8b8;border-radius:3px"></div><div class="t" style="left:476px;top:154.0px;font-size:10.3px;color:#222;">Custom</div><svg style="left:546px;top:158.0px" width="8" height="5" viewBox="0 0 8 5" fill="none" stroke="#666" stroke-width="1"><path d="M.5 .5L4 4L7.5 .5"/></svg>
<div class="t" style="left:261.5px;top:177.5px;font-size:10.3px;color:#333;">Sender's Mail</div>
<div class="a" style="left:329px;top:193px;width:231px;height:1px;background:#c4c4c4"></div>
<div class="t" style="left:261.5px;top:202.0px;font-size:10.3px;color:#333;">Mail Account</div>
<div class="a" style="left:329px;top:198px;width:231px;height:20px;background:#fff;border:1px solid #d0d0d0;border-bottom-color:#b8b8b8;border-radius:3px"></div><div class="t" style="left:335px;top:202.0px;font-size:10.3px;color:#222;">All</div><svg style="left:546px;top:206.0px" width="8" height="5" viewBox="0 0 8 5" fill="none" stroke="#666" stroke-width="1"><path d="M.5 .5L4 4L7.5 .5"/></svg>
<div class="t" style="left:571.5px;top:129.5px;font-size:10.3px;color:#333;">Open Area</div>
<div class="a" style="left:632px;top:126px;width:65px;height:20px;background:#fff;border:1px solid #d0d0d0;border-bottom-color:#b8b8b8;border-radius:3px"></div><div class="t" style="left:638px;top:130.0px;font-size:10.3px;color:#222;">None</div><svg style="left:683px;top:134.0px" width="8" height="5" viewBox="0 0 8 5" fill="none" stroke="#666" stroke-width="1"><path d="M.5 .5L4 4L7.5 .5"/></svg>
<div class="a" style="left:696px;top:145px;width:174px;height:1px;background:#c4c4c4"></div>
<div class="t" style="left:571.5px;top:153.5px;font-size:10.3px;color:#333;">Open Date</div>
<div class="a" style="left:632px;top:150px;width:104px;height:20px;background:#fff;border:1px solid #d0d0d0;border-bottom-color:#b8b8b8;border-radius:3px"></div><svg style="left:721px;top:155px" width="10" height="10" viewBox="0 0 10 10" fill="none" stroke="#888" stroke-width="1"><rect x=".6" y="1.6" width="8.8" height="7.8" rx="1"/><path d="M.6 4h8.8M3 .5v2M7 .5v2"/></svg>
<div class="t" style="left:737.5px;top:154.0px;font-size:10.3px;color:#333;">-</div>
<div class="a" style="left:744px;top:150px;width:103px;height:20px;background:#fff;border:1px solid #d0d0d0;border-bottom-color:#b8b8b8;border-radius:3px"></div><svg style="left:832px;top:155px" width="10" height="10" viewBox="0 0 10 10" fill="none" stroke="#888" stroke-width="1"><rect x=".6" y="1.6" width="8.8" height="7.8" rx="1"/><path d="M.6 4h8.8M3 .5v2M7 .5v2"/></svg>
<div class="a" style="left:850px;top:150px;width:20px;height:20px;background:#fff;border:1px solid #d0d0d0;border-radius:3px"></div>
<svg style="left:855px;top:154px" width="10" height="11" viewBox="0 0 10 11" fill="none" stroke="#666" stroke-width="1"><path d="M.5 2h9M3.5 1.8V.6h3v1.2M1.6 2l.5 8.2h5.8l.5-8.2M4 4v4.5M6 4v4.5"/></svg>
<div class="t" style="left:571.5px;top:178.0px;font-size:10.3px;color:#333;">Built</div>
<div class="t" style="left:632px;top:178.0px;font-size:10.3px;color:#333;">Under</div>
<div class="a" style="left:664px;top:174px;width:45px;height:20px;background:#fff;border:1px solid #d0d0d0;border-bottom-color:#b8b8b8;border-radius:3px"></div><div class="t" style="left:669px;top:178.0px;font-size:10.3px;color:#222;">All</div><svg style="left:695px;top:182.0px" width="8" height="5" viewBox="0 0 8 5" fill="none" stroke="#666" stroke-width="1"><path d="M.5 .5L4 4L7.5 .5"/></svg>
<div class="t" style="left:713px;top:178.0px;font-size:10.3px;color:#333;">Year(s)</div>
<div class="t" style="left:571.5px;top:202.0px;font-size:10.3px;color:#333;">Sent within</div>
<div class="a" style="left:632px;top:198px;width:45px;height:20px;background:#fff;border:1px solid #d0d0d0;border-bottom-color:#b8b8b8;border-radius:3px"></div><div class="t" style="left:637px;top:202.0px;font-size:10.3px;color:#222;">All</div><svg style="left:663px;top:206.0px" width="8" height="5" viewBox="0 0 8 5" fill="none" stroke="#666" stroke-width="1"><path d="M.5 .5L4 4L7.5 .5"/></svg>
<div class="t" style="left:681px;top:202.0px;font-size:10.3px;color:#333;">Days.</div>
<div class="a" style="left:658px;top:226px;width:97px;height:22px;background:#fff;border:1px solid #d3d3d3;border-bottom-color:#bdbdbd;border-radius:3px"></div>
<svg style="left:665px;top:233px" width="9" height="9" viewBox="0 0 9 9" fill="none" stroke="#555" stroke-width="1.1" stroke-linecap="round" stroke-linejoin="round"><path d="M.5 .8h8M.5 .8L4.5 4.6L8.5 .8M4.5 4.6v4"/></svg>
<div class="t" style="left:677px;top:231.0px;font-size:10.3px;color:#222;">Save to filtering</div>
<div class="a" style="left:759px;top:226px;width:40px;height:22px;background:#fff;border:1px solid #d3d3d3;border-bottom-color:#bdbdbd;border-radius:3px"></div>
<div class="t" style="left:767.5px;top:231.0px;font-size:10.3px;color:#222;">Clear</div>
<div class="a" style="left:803px;top:226px;width:62px;height:22px;background:#0b5cc4;border-radius:3px"></div>
<div class="t" style="left:811.5px;top:231.0px;font-size:10.3px;color:#fff;">Search</div>
<div class="a" style="left:274.5px;top:262px;width:1px;height:20px;background:#d6d6d6"></div>
<div class="a" style="left:294.5px;top:262px;width:1px;height:20px;background:#d6d6d6"></div>
<div class="a" style="left:489px;top:262px;width:1px;height:20px;background:#d6d6d6"></div>
<div class="a" style="left:541px;top:262px;width:1px;height:20px;background:#d6d6d6"></div>
<div class="a" style="left:590px;top:262px;width:1px;height:20px;background:#d6d6d6"></div>
<div class="a" style="left:695px;top:262px;width:1px;height:20px;background:#d6d6d6"></div>
<div class="a" style="left:789px;top:262px;width:1px;height:20px;background:#d6d6d6"></div>
<div class="a" style="left:243px;top:282px;width:645px;height:1px;background:#cfcfcf"></div>
<svg style="left:260px;top:267.5px" width="9" height="9" viewBox="0 0 9 9" fill="none" stroke="#888" stroke-width=".9" stroke-linejoin="round"><path d="M4.5.6l1.1 2.5l2.7.3l-2 1.8l.6 2.7L4.5 6.5L2.1 7.9l.6-2.7l-2-1.8l2.7-.3z"/></svg>
<svg style="left:281px;top:267px" width="9" height="10" viewBox="0 0 9 10" fill="none" stroke="#888" stroke-width=".9" stroke-linecap="round"><rect x=".5" y="1.2" width="8" height="8.3" rx="1.3"/><path d="M2.8 7.3l3.6-3.9M3.8 .9h1.4"/></svg>
<div class="t" style="left:292px;width:200px;top:266.0px;font-size:10.3px;color:#333;text-align:center;">Vessel Name</div>
<div class="t" style="left:415.5px;width:200px;top:266.0px;font-size:10.3px;color:#333;text-align:center;">DWT</div>
<div class="t" style="left:466px;width:200px;top:266.0px;font-size:10.3px;color:#333;text-align:center;">Built</div>
<div class="t" style="left:595.5px;top:266.0px;font-size:10.3px;color:#333;">Open Area</div>
<div class="t" style="left:700.5px;top:266.0px;font-size:10.3px;color:#333;">Open Date</div>
<div class="t" style="left:794.5px;top:266.0px;font-size:10.3px;color:#333;">Sent</div>
<div class="a" style="left:246.5px;top:309.6px;width:641.5px;height:1px;background:#e3e3e3"></div>
<div class="a" style="left:291px;top:310.6px;width:141px;height:3px;background:#f4f4f4"></div>
<svg style="left:247px;top:293.6px" width="5" height="6" viewBox="0 0 5 6"><path d="M0 0l5 3l-5 3z" fill="#555"/></svg>
<div class="a" style="left:299px;top:291.0px;width:45px;height:3.67px;background:linear-gradient(90deg,rgb(214,214,214) 0.0px 3.8px,rgb(189,189,189) 3.8px 7.5px,rgb(184,184,184) 7.5px 11.2px,rgb(219,219,219) 11.2px 15.0px,rgb(203,203,203) 15.0px 18.8px,rgb(189,189,189) 18.8px 22.5px,rgb(204,204,204) 22.5px 26.2px,rgb(184,184,184) 26.2px 30.0px,rgb(203,203,203) 30.0px 33.8px,rgba(0,0,0,0) 33.8px 37.5px,rgb(220,220,220) 37.5px 41.2px,rgb(216,216,216) 41.2px 45.0px)"></div><div class="a" style="left:299px;top:294.7px;width:45px;height:3.67px;background:linear-gradient(90deg,rgb(164,164,164) 0.0px 3.8px,rgb(131,131,131) 3.8px 7.5px,rgb(139,139,139) 7.5px 11.2px,rgb(124,124,124) 11.2px 15.0px,rgb(170,170,170) 15.0px 18.8px,rgb(152,152,152) 18.8px 22.5px,rgb(171,171,171) 22.5px 26.2px,rgb(137,137,137) 26.2px 30.0px,rgb(128,128,128) 30.0px 33.8px,rgba(0,0,0,0) 33.8px 37.5px,rgb(173,173,173) 37.5px 41.2px,rgb(186,186,186) 41.2px 45.0px)"></div><div class="a" style="left:299px;top:298.3px;width:45px;height:3.67px;background:linear-gradient(90deg,rgb(203,203,203) 0.0px 3.8px,rgb(201,201,201) 3.8px 7.5px,rgb(201,201,201) 7.5px 11.2px,rgb(199,199,199) 11.2px 15.0px,rgb(179,179,179) 15.0px 18.8px,rgb(190,190,190) 18.8px 22.5px,rgb(184,184,184) 22.5px 26.2px,rgb(172,172,172) 26.2px 30.0px,rgb(171,171,171) 30.0px 33.8px,rgba(0,0,0,0) 33.8px 37.5px,rgb(181,181,181) 37.5px 41.2px,rgb(180,180,180) 41.2px 45.0px)"></div>
<div class="t" style="right:963.5px;top:290.2px;font-size:10.3px;color:#303030;font-weight:bold;text-align:right;">28,000</div>
<div class="t" style="left:595.5px;top:290.2px;font-size:10.3px;color:#303030;font-weight:bold;">Taichung</div>
<div class="t" style="left:700.5px;top:290.2px;font-size:10.3px;color:#303030;font-weight:bold;">Sep 24 ~ Sep 25</div>
<div class="t" style="left:794.5px;top:290.2px;font-size:10.3px;color:#303030;font-weight:bold;">2025-09-16 14:35</div>
<div class="a" style="left:246.5px;top:337.4px;width:641.5px;height:1px;background:#e3e3e3"></div>
<div class="a" style="left:291px;top:338.4px;width:141px;height:3px;background:#f4f4f4"></div>
<svg style="left:247px;top:321.4px" width="5" height="6" viewBox="0 0 5 6"><path d="M0 0l5 3l-5 3z" fill="#555"/></svg>
<div class="a" style="left:299px;top:318.0px;width:56px;height:3.67px;background:linear-gradient(90deg,rgb(209,209,209) 0.0px 3.8px,rgb(219,219,219) 3.8px 7.5px,rgb(200,200,200) 7.5px 11.2px,rgb(219,219,219) 11.2px 15.0px,rgb(221,221,221) 15.0px 18.8px,rgb(219,219,219) 18.8px 22.5px,rgb(197,197,197) 22.5px 26.2px,rgb(191,191,191) 26.2px 30.0px,rgb(192,192,192) 30.0px 33.8px,rgb(190,190,190) 33.8px 37.5px,rgb(191,191,191) 37.5px 41.2px,rgba(0,0,0,0) 41.2px 45.0px,rgb(207,207,207) 45.0px 48.8px,rgb(217,217,217) 48.8px 52.5px,rgb(215,215,215) 52.5px 56.0px)"></div><div class="a" style="left:299px;top:321.7px;width:56px;height:3.67px;background:linear-gradient(90deg,rgb(148,148,148) 0.0px 3.8px,rgb(161,161,161) 3.8px 7.5px,rgb(172,172,172) 7.5px 11.2px,rgb(118,118,118) 11.2px 15.0px,rgb(162,162,162) 15.0px 18.8px,rgb(181,181,181) 18.8px 22.5px,rgb(171,171,171) 22.5px 26.2px,rgb(169,169,169) 26.2px 30.0px,rgb(148,148,148) 30.0px 33.8px,rgb(125,125,125) 33.8px 37.5px,rgb(171,171,171) 37.5px 41.2px,rgba(0,0,0,0) 41.2px 45.0px,rgb(137,137,137) 45.0px 48.8px,rgb(172,172,172) 48.8px 52.5px,rgb(185,185,185) 52.5px 56.0px)"></div><div class="a" style="left:299px;top:325.3px;width:56px;height:3.67px;background:linear-gradient(90deg,rgb(185,185,185) 0.0px 3.8px,rgb(186,186,186) 3.8px 7.5px,rgb(206,206,206) 7.5px 11.2px,rgb(198,198,198) 11.2px 15.0px,rgb(177,177,177) 15.0px 18.8px,rgb(175,175,175) 18.8px 22.5px,rgb(176,176,176) 22.5px 26.2px,rgb(205,205,205) 26.2px 30.0px,rgb(201,201,201) 30.0px 33.8px,rgb(176,176,176) 33.8px 37.5px,rgb(202,202,202) 37.5px 41.2px,rgba(0,0,0,0) 41.2px 45.0px,rgb(208,208,208) 45.0px 48.8px,rgb(195,195,195) 48.8px 52.5px,rgb(184,184,184) 52.5px 56.0px)"></div>
<div class="t" style="right:963.5px;top:318.0px;font-size:10.3px;color:#303030;font-weight:bold;text-align:right;">57,000</div>
<div class="t" style="right:915px;top:318.0px;font-size:10.3px;color:#303030;font-weight:bold;text-align:right;">2011</div>
<div class="t" style="left:595.5px;top:318.0px;font-size:10.3px;color:#303030;font-weight:bold;">Muara Brunei</div>
<div class="t" style="left:700.5px;top:318.0px;font-size:10.3px;color:#303030;font-weight:bold;">Sep 19 ~ Sep 23</div>
<div class="t" style="left:794.5px;top:318.0px;font-size:10.3px;color:#303030;font-weight:bold;">2025-09-16 14:33</div>
<div class="a" style="left:246.5px;top:365.2px;width:641.5px;height:1px;background:#e3e3e3"></div>
<div class="a" style="left:291px;top:366.2px;width:141px;height:3px;background:#f4f4f4"></div>
<svg style="left:247px;top:349.2px" width="5" height="6" viewBox="0 0 5 6"><path d="M0 0l5 3l-5 3z" fill="#555"/></svg>
<div class="a" style="left:299px;top:346.0px;width:68px;height:3.67px;background:linear-gradient(90deg,rgb(204,204,204) 0.0px 3.8px,rgb(188,188,188) 3.8px 7.5px,rgb(184,184,184) 7.5px 11.2px,rgb(220,220,220) 11.2px 15.0px,rgb(208,208,208) 15.0px 18.8px,rgb(203,203,203) 18.8px 22.5px,rgb(218,218,218) 22.5px 26.2px,rgb(199,199,199) 26.2px 30.0px,rgb(216,216,216) 30.0px 33.8px,rgb(214,214,214) 33.8px 37.5px,rgba(0,0,0,0) 37.5px 41.2px,rgb(191,191,191) 41.2px 45.0px,rgb(193,193,193) 45.0px 48.8px,rgb(194,194,194) 48.8px 52.5px,rgb(192,192,192) 52.5px 56.2px,rgb(205,205,205) 56.2px 60.0px,rgb(193,193,193) 60.0px 63.8px,rgb(199,199,199) 63.8px 67.5px,rgb(188,188,188) 67.5px 68.0px)"></div><div class="a" style="left:299px;top:349.7px;width:68px;height:3.67px;background:linear-gradient(90deg,rgb(181,181,181) 0.0px 3.8px,rgb(138,138,138) 3.8px 7.5px,rgb(146,146,146) 7.5px 11.2px,rgb(156,156,156) 11.2px 15.0px,rgb(180,180,180) 15.0px 18.8px,rgb(143,143,143) 18.8px 22.5px,rgb(181,181,181) 22.5px 26.2px,rgb(150,150,150) 26.2px 30.0px,rgb(152,152,152) 30.0px 33.8px,rgb(151,151,151) 33.8px 37.5px,rgba(0,0,0,0) 37.5px 41.2px,rgb(113,113,113) 41.2px 45.0px,rgb(145,145,145) 45.0px 48.8px,rgb(125,125,125) 48.8px 52.5px,rgb(112,112,112) 52.5px 56.2px,rgb(172,172,172) 56.2px 60.0px,rgb(125,125,125) 60.0px 63.8px,rgb(147,147,147) 63.8px 67.5px,rgb(167,167,167) 67.5px 68.0px)"></div><div class="a" style="left:299px;top:353.3px;width:68px;height:3.67px;background:linear-gradient(90deg,rgb(192,192,192) 0.0px 3.8px,rgb(183,183,183) 3.8px 7.5px,rgb(190,190,190) 7.5px 11.2px,rgb(192,192,192) 11.2px 15.0px,rgb(200,200,200) 15.0px 18.8px,rgb(174,174,174) 18.8px 22.5px,rgb(192,192,192) 22.5px 26.2px,rgb(180,180,180) 26.2px 30.0px,rgb(181,181,181) 30.0px 33.8px,rgb(200,200,200) 33.8px 37.5px,rgba(0,0,0,0) 37.5px 41.2px,rgb(190,190,190) 41.2px 45.0px,rgb(192,192,192) 45.0px 48.8px,rgb(199,199,199) 48.8px 52.5px,rgb(205,205,205) 52.5px 56.2px,rgb(187,187,187) 56.2px 60.0px,rgb(194,194,194) 60.0px 63.8px,rgb(190,190,190) 63.8px 67.5px,rgb(190,190,190) 67.5px 68.0px)"></div>
<div class="t" style="right:963.5px;top:345.8px;font-size:10.3px;color:#303030;font-weight:bold;text-align:right;">56,892</div>
<div class="t" style="right:915px;top:345.8px;font-size:10.3px;color:#303030;font-weight:bold;text-align:right;">2011</div>
<div class="t" style="left:595.5px;top:345.8px;font-size:10.3px;color:#303030;font-weight:bold;">Sihanohkville</div>
<div class="t" style="left:700.5px;top:345.8px;font-size:10.3px;color:#303030;font-weight:bold;">Sep 24 ~ Sep 27</div>
<div class="t" style="left:794.5px;top:345.8px;font-size:10.3px;color:#303030;font-weight:bold;">2025-09-16 14:29</div>
<div class="a" style="left:246.5px;top:393.0px;width:641.5px;height:1px;background:#e3e3e3"></div>
<div class="a" style="left:291px;top:394.0px;width:141px;height:3px;background:#f4f4f4"></div>
<svg style="left:247px;top:377.0px" width="5" height="6" viewBox="0 0 5 6"><path d="M0 0l5 3l-5 3z" fill="#555"/></svg>
<div class="a" style="left:299px;top:374.0px;width:86px;height:3.67px;background:linear-gradient(90deg,rgb(209,209,209) 0.0px 3.8px,rgb(200,200,200) 3.8px 7.5px,rgb(203,203,203) 7.5px 11.2px,rgb(201,201,201) 11.2px 15.0px,rgb(219,219,219) 15.0px 18.8px,rgb(210,210,210) 18.8px 22.5px,rgb(216,216,216) 22.5px 26.2px,rgb(219,219,219) 26.2px 30.0px,rgb(193,193,193) 30.0px 33.8px,rgba(0,0,0,0) 33.8px 37.5px,rgb(204,204,204) 37.5px 41.2px,rgb(219,219,219) 41.2px 45.0px,rgb(215,215,215) 45.0px 48.8px,rgb(188,188,188) 48.8px 52.5px,rgb(188,188,188) 52.5px 56.2px,rgb(200,200,200) 56.2px 60.0px,rgb(186,186,186) 60.0px 63.8px,rgba(0,0,0,0) 63.8px 67.5px,rgb(192,192,192) 67.5px 71.2px,rgb(186,186,186) 71.2px 75.0px,rgb(208,208,208) 75.0px 78.8px,rgb(213,213,213) 78.8px 82.5px,rgb(217,217,217) 82.5px 86.0px)"></div><div class="a" style="left:299px;top:377.7px;width:86px;height:3.67px;background:linear-gradient(90deg,rgb(123,123,123) 0.0px 3.8px,rgb(166,166,166) 3.8px 7.5px,rgb(162,162,162) 7.5px 11.2px,rgb(122,122,122) 11.2px 15.0px,rgb(179,179,179) 15.0px 18.8px,rgb(185,185,185) 18.8px 22.5px,rgb(128,128,128) 22.5px 26.2px,rgb(184,184,184) 26.2px 30.0px,rgb(142,142,142) 30.0px 33.8px,rgba(0,0,0,0) 33.8px 37.5px,rgb(149,149,149) 37.5px 41.2px,rgb(187,187,187) 41.2px 45.0px,rgb(175,175,175) 45.0px 48.8px,rgb(124,124,124) 48.8px 52.5px,rgb(144,144,144) 52.5px 56.2px,rgb(151,151,151) 56.2px 60.0px,rgb(137,137,137) 60.0px 63.8px,rgba(0,0,0,0) 63.8px 67.5px,rgb(126,126,126) 67.5px 71.2px,rgb(136,136,136) 71.2px 75.0px,rgb(166,166,166) 75.0px 78.8px,rgb(113,113,113) 78.8px 82.5px,rgb(154,154,154) 82.5px 86.0px)"></div><div class="a" style="left:299px;top:381.3px;width:86px;height:3.67px;background:linear-gradient(90deg,rgb(187,187,187) 0.0px 3.8px,rgb(171,171,171) 3.8px 7.5px,rgb(183,183,183) 7.5px 11.2px,rgb(194,194,194) 11.2px 15.0px,rgb(190,190,190) 15.0px 18.8px,rgb(173,173,173) 18.8px 22.5px,rgb(208,208,208) 22.5px 26.2px,rgb(200,200,200) 26.2px 30.0px,rgb(207,207,207) 30.0px 33.8px,rgba(0,0,0,0) 33.8px 37.5px,rgb(174,174,174) 37.5px 41.2px,rgb(180,180,180) 41.2px 45.0px,rgb(172,172,172) 45.0px 48.8px,rgb(200,200,200) 48.8px 52.5px,rgb(181,181,181) 52.5px 56.2px,rgb(175,175,175) 56.2px 60.0px,rgb(186,186,186) 60.0px 63.8px,rgba(0,0,0,0) 63.8px 67.5px,rgb(205,205,205) 67.5px 71.2px,rgb(202,202,202) 71.2px 75.0px,rgb(180,180,180) 75.0px 78.8px,rgb(176,176,176) 78.8px 82.5px,rgb(205,205,205) 82.5px 86.0px)"></div>
<div class="t" style="right:963.5px;top:373.6px;font-size:10.3px;color:#303030;font-weight:bold;text-align:right;">39,760</div>
<div class="t" style="left:595.5px;top:373.6px;font-size:10.3px;color:#303030;font-weight:bold;">Rizhao</div>
<div class="t" style="left:700.5px;top:373.6px;font-size:10.3px;color:#303030;font-weight:bold;">Sep 23 ~ Sep 24</div>
<div class="t" style="left:794.5px;top:373.6px;font-size:10.3px;color:#303030;font-weight:bold;">2025-09-16 14:29</div>
<div class="a" style="left:246.5px;top:420.8px;width:641.5px;height:1px;background:#e3e3e3"></div>
<div class="a" style="left:291px;top:421.8px;width:141px;height:3px;background:#f4f4f4"></div>
<svg style="left:247px;top:404.8px" width="5" height="6" viewBox="0 0 5 6"><path d="M0 0l5 3l-5 3z" fill="#555"/></svg>
<div class="a" style="left:299px;top:402.0px;width:68px;height:3.67px;background:linear-gradient(90deg,rgb(205,205,205) 0.0px 3.8px,rgb(210,210,210) 3.8px 7.5px,rgb(186,186,186) 7.5px 11.2px,rgb(185,185,185) 11.2px 15.0px,rgb(209,209,209) 15.0px 18.8px,rgb(199,199,199) 18.8px 22.5px,rgb(186,186,186) 22.5px 26.2px,rgb(219,219,219) 26.2px 30.0px,rgb(207,207,207) 30.0px 33.8px,rgb(213,213,213) 33.8px 37.5px,rgba(0,0,0,0) 37.5px 41.2px,rgba(0,0,0,0) 41.2px 45.0px,rgb(186,186,186) 45.0px 48.8px,rgb(216,216,216) 48.8px 52.5px,rgb(186,186,186) 52.5px 56.2px,rgb(216,216,216) 56.2px 60.0px,rgb(200,200,200) 60.0px 63.8px,rgb(196,196,196) 63.8px 67.5px,rgb(204,204,204) 67.5px 68.0px)"></div><div class="a" style="left:299px;top:405.7px;width:68px;height:3.67px;background:linear-gradient(90deg,rgb(182,182,182) 0.0px 3.8px,rgb(132,132,132) 3.8px 7.5px,rgb(121,121,121) 7.5px 11.2px,rgb(152,152,152) 11.2px 15.0px,rgb(130,130,130) 15.0px 18.8px,rgb(120,120,120) 18.8px 22.5px,rgb(124,124,124) 22.5px 26.2px,rgb(115,115,115) 26.2px 30.0px,rgb(127,127,127) 30.0px 33.8px,rgb(135,135,135) 33.8px 37.5px,rgba(0,0,0,0) 37.5px 41.2px,rgba(0,0,0,0) 41.2px 45.0px,rgb(135,135,135) 45.0px 48.8px,rgb(169,169,169) 48.8px 52.5px,rgb(134,134,134) 52.5px 56.2px,rgb(150,150,150) 56.2px 60.0px,rgb(125,125,125) 60.0px 63.8px,rgb(138,138,138) 63.8px 67.5px,rgb(113,113,113) 67.5px 68.0px)"></div><div class="a" style="left:299px;top:409.3px;width:68px;height:3.67px;background:linear-gradient(90deg,rgb(180,180,180) 0.0px 3.8px,rgb(171,171,171) 3.8px 7.5px,rgb(198,198,198) 7.5px 11.2px,rgb(191,191,191) 11.2px 15.0px,rgb(178,178,178) 15.0px 18.8px,rgb(188,188,188) 18.8px 22.5px,rgb(206,206,206) 22.5px 26.2px,rgb(174,174,174) 26.2px 30.0px,rgb(202,202,202) 30.0px 33.8px,rgb(187,187,187) 33.8px 37.5px,rgba(0,0,0,0) 37.5px 41.2px,rgba(0,0,0,0) 41.2px 45.0px,rgb(189,189,189) 45.0px 48.8px,rgb(202,202,202) 48.8px 52.5px,rgb(185,185,185) 52.5px 56.2px,rgb(190,190,190) 56.2px 60.0px,rgb(197,197,197) 60.0px 63.8px,rgb(208,208,208) 63.8px 67.5px,rgb(183,183,183) 67.5px 68.0px)"></div>
<div class="t" style="right:963.5px;top:401.4px;font-size:10.3px;color:#303030;font-weight:bold;text-align:right;">53,195</div>
<div class="t" style="right:915px;top:401.4px;font-size:10.3px;color:#303030;font-weight:bold;text-align:right;">2005</div>
<div class="t" style="left:595.5px;top:401.4px;font-size:10.3px;color:#303030;font-weight:bold;">Dafeng</div>
<div class="t" style="left:700.5px;top:401.4px;font-size:10.3px;color:#303030;font-weight:bold;">Sep 27 ~ Sep 30</div>
<div class="t" style="left:794.5px;top:401.4px;font-size:10.3px;color:#303030;font-weight:bold;">2025-09-16 14:24</div>
<div class="a" style="left:243px;top:448.6px;width:645px;height:1px;background:#e3e3e3"></div>
<div class="a" style="left:291px;top:449.6px;width:141px;height:3px;background:#f4f4f4"></div>
<svg style="left:247px;top:432.6px" width="5" height="6" viewBox="0 0 5 6"><path d="M0 0l5 3l-5 3z" fill="#555"/></svg>
<div class="a" style="left:299px;top:430.0px;width:47px;height:3.67px;background:linear-gradient(90deg,rgb(234,234,234) 0.0px 3.8px,rgb(231,231,231) 3.8px 7.5px,rgb(229,229,229) 7.5px 11.2px,rgb(224,224,224) 11.2px 15.0px,rgb(222,222,222) 15.0px 18.8px,rgb(215,215,215) 18.8px 22.5px,rgb(217,217,217) 22.5px 26.2px,rgb(215,215,215) 26.2px 30.0px,rgb(232,232,232) 30.0px 33.8px,rgba(0,0,0,0) 33.8px 37.5px,rgba(0,0,0,0) 37.5px 41.2px,rgb(220,220,220) 41.2px 45.0px,rgba(0,0,0,0) 45.0px 47.0px)"></div><div class="a" style="left:299px;top:433.7px;width:47px;height:3.67px;background:linear-gradient(90deg,rgb(181,181,181) 0.0px 3.8px,rgb(177,177,177) 3.8px 7.5px,rgb(215,215,215) 7.5px 11.2px,rgb(216,216,216) 11.2px 15.0px,rgb(206,206,206) 15.0px 18.8px,rgb(187,187,187) 18.8px 22.5px,rgb(185,185,185) 22.5px 26.2px,rgb(187,187,187) 26.2px 30.0px,rgb(195,195,195) 30.0px 33.8px,rgba(0,0,0,0) 33.8px 37.5px,rgba(0,0,0,0) 37.5px 41.2px,rgb(180,180,180) 41.2px 45.0px,rgba(0,0,0,0) 45.0px 47.0px)"></div><div class="a" style="left:299px;top:437.3px;width:47px;height:3.67px;background:linear-gradient(90deg,rgb(218,218,218) 0.0px 3.8px,rgb(213,213,213) 3.8px 7.5px,rgb(231,231,231) 7.5px 11.2px,rgb(231,231,231) 11.2px 15.0px,rgb(220,220,220) 15.0px 18.8px,rgb(213,213,213) 18.8px 22.5px,rgb(231,231,231) 22.5px 26.2px,rgb(214,214,214) 26.2px 30.0px,rgb(216,216,216) 30.0px 33.8px,rgba(0,0,0,0) 33.8px 37.5px,rgba(0,0,0,0) 37.5px 41.2px,rgb(207,207,207) 41.2px 45.0px,rgba(0,0,0,0) 45.0px 47.0px)"></div>
<div class="t" style="right:963.5px;top:429.2px;font-size:10.3px;color:#666;text-align:right;">56,892</div>
<div class="t" style="right:915px;top:429.2px;font-size:10.3px;color:#666;text-align:right;">2011</div>
<div class="t" style="left:595.5px;top:429.2px;font-size:10.3px;color:#666;">Sihanohkville</div>
<div class="t" style="left:700.5px;top:429.2px;font-size:10.3px;color:#666;">Sep 24 ~ Sep 27</div>
<div class="t" style="left:794.5px;top:429.2px;font-size:10.3px;color:#666;">2025-09-16 14:23</div>
<div class="a" style="left:243px;top:476.4px;width:645px;height:1px;background:#e3e3e3"></div>
<div class="a" style="left:291px;top:477.4px;width:141px;height:3px;background:#f4f4f4"></div>
<svg style="left:247px;top:460.4px" width="5" height="6" viewBox="0 0 5 6"><path d="M0 0l5 3l-5 3z" fill="#555"/></svg>
<div class="a" style="left:299px;top:458.0px;width:71px;height:3.67px;background:linear-gradient(90deg,rgb(223,223,223) 0.0px 3.8px,rgb(225,225,225) 3.8px 7.5px,rgb(226,226,226) 7.5px 11.2px,rgb(219,219,219) 11.2px 15.0px,rgb(226,226,226) 15.0px 18.8px,rgb(214,214,214) 18.8px 22.5px,rgb(220,220,220) 22.5px 26.2px,rgb(216,216,216) 26.2px 30.0px,rgb(223,223,223) 30.0px 33.8px,rgba(0,0,0,0) 33.8px 37.5px,rgb(215,215,215) 37.5px 41.2px,rgb(214,214,214) 41.2px 45.0px,rgb(221,221,221) 45.0px 48.8px,rgb(219,219,219) 48.8px 52.5px,rgb(228,228,228) 52.5px 56.2px,rgb(227,227,227) 56.2px 60.0px,rgb(232,232,232) 60.0px 63.8px,rgb(230,230,230) 63.8px 67.5px,rgb(231,231,231) 67.5px 71.0px)"></div><div class="a" style="left:299px;top:461.7px;width:71px;height:3.67px;background:linear-gradient(90deg,rgb(216,216,216) 0.0px 3.8px,rgb(192,192,192) 3.8px 7.5px,rgb(189,189,189) 7.5px 11.2px,rgb(222,222,222) 11.2px 15.0px,rgb(180,180,180) 15.0px 18.8px,rgb(209,209,209) 18.8px 22.5px,rgb(205,205,205) 22.5px 26.2px,rgb(175,175,175) 26.2px 30.0px,rgb(214,214,214) 30.0px 33.8px,rgba(0,0,0,0) 33.8px 37.5px,rgb(217,217,217) 37.5px 41.2px,rgb(204,204,204) 41.2px 45.0px,rgb(209,209,209) 45.0px 48.8px,rgb(213,213,213) 48.8px 52.5px,rgb(179,179,179) 52.5px 56.2px,rgb(199,199,199) 56.2px 60.0px,rgb(198,198,198) 60.0px 63.8px,rgb(214,214,214) 63.8px 67.5px,rgb(213,213,213) 67.5px 71.0px)"></div><div class="a" style="left:299px;top:465.3px;width:71px;height:3.67px;background:linear-gradient(90deg,rgb(227,227,227) 0.0px 3.8px,rgb(221,221,221) 3.8px 7.5px,rgb(229,229,229) 7.5px 11.2px,rgb(224,224,224) 11.2px 15.0px,rgb(224,224,224) 15.0px 18.8px,rgb(212,212,212) 18.8px 22.5px,rgb(207,207,207) 22.5px 26.2px,rgb(210,210,210) 26.2px 30.0px,rgb(216,216,216) 30.0px 33.8px,rgba(0,0,0,0) 33.8px 37.5px,rgb(209,209,209) 37.5px 41.2px,rgb(228,228,228) 41.2px 45.0px,rgb(221,221,221) 45.0px 48.8px,rgb(222,222,222) 48.8px 52.5px,rgb(222,222,222) 52.5px 56.2px,rgb(224,224,224) 56.2px 60.0px,rgb(219,219,219) 60.0px 63.8px,rgb(207,207,207) 63.8px 67.5px,rgb(227,227,227) 67.5px 71.0px)"></div>
<div class="t" style="right:963.5px;top:457.0px;font-size:10.3px;color:#666;text-align:right;">82,099</div>
<div class="t" style="right:915px;top:457.0px;font-size:10.3px;color:#666;text-align:right;">2011</div>
<div class="t" style="left:595.5px;top:457.0px;font-size:10.3px;color:#666;">Damiatta</div>
<div class="t" style="left:700.5px;top:457.0px;font-size:10.3px;color:#666;">Sep 19 ~ Sep 23</div>
<div class="t" style="left:794.5px;top:457.0px;font-size:10.3px;color:#666;">2025-09-16 14:22</div>
<div class="a" style="left:243px;top:504.2px;width:645px;height:1px;background:#e3e3e3"></div>
<div class="a" style="left:291px;top:505.2px;width:141px;height:3px;background:#f4f4f4"></div>
<svg style="left:247px;top:488.2px" width="5" height="6" viewBox="0 0 5 6"><path d="M0 0l5 3l-5 3z" fill="#555"/></svg>
<div class="a" style="left:299px;top:485.0px;width:64px;height:3.67px;background:linear-gradient(90deg,rgb(232,232,232) 0.0px 3.8px,rgb(226,226,226) 3.8px 7.5px,rgb(227,227,227) 7.5px 11.2px,rgb(230,230,230) 11.2px 15.0px,rgb(215,215,215) 15.0px 18.8px,rgb(232,232,232) 18.8px 22.5px,rgb(220,220,220) 22.5px 26.2px,rgb(215,215,215) 26.2px 30.0px,rgb(220,220,220) 30.0px 33.8px,rgba(0,0,0,0) 33.8px 37.5px,rgb(232,232,232) 37.5px 41.2px,rgb(219,219,219) 41.2px 45.0px,rgb(232,232,232) 45.0px 48.8px,rgb(238,238,238) 48.8px 52.5px,rgb(226,226,226) 52.5px 56.2px,rgb(223,223,223) 56.2px 60.0px,rgb(225,225,225) 60.0px 63.8px,rgb(231,231,231) 63.8px 64.0px)"></div><div class="a" style="left:299px;top:488.7px;width:64px;height:3.67px;background:linear-gradient(90deg,rgb(211,211,211) 0.0px 3.8px,rgb(203,203,203) 3.8px 7.5px,rgb(205,205,205) 7.5px 11.2px,rgb(176,176,176) 11.2px 15.0px,rgb(180,180,180) 15.0px 18.8px,rgb(185,185,185) 18.8px 22.5px,rgb(210,210,210) 22.5px 26.2px,rgb(188,188,188) 26.2px 30.0px,rgb(201,201,201) 30.0px 33.8px,rgba(0,0,0,0) 33.8px 37.5px,rgb(173,173,173) 37.5px 41.2px,rgb(176,176,176) 41.2px 45.0px,rgb(186,186,186) 45.0px 48.8px,rgb(206,206,206) 48.8px 52.5px,rgb(207,207,207) 52.5px 56.2px,rgb(206,206,206) 56.2px 60.0px,rgb(187,187,187) 60.0px 63.8px,rgb(198,198,198) 63.8px 64.0px)"></div><div class="a" style="left:299px;top:492.3px;width:64px;height:3.67px;background:linear-gradient(90deg,rgb(218,218,218) 0.0px 3.8px,rgb(218,218,218) 3.8px 7.5px,rgb(210,210,210) 7.5px 11.2px,rgb(229,229,229) 11.2px 15.0px,rgb(212,212,212) 15.0px 18.8px,rgb(231,231,231) 18.8px 22.5px,rgb(230,230,230) 22.5px 26.2px,rgb(207,207,207) 26.2px 30.0px,rgb(218,218,218) 30.0px 33.8px,rgba(0,0,0,0) 33.8px 37.5px,rgb(227,227,227) 37.5px 41.2px,rgb(231,231,231) 41.2px 45.0px,rgb(218,218,218) 45.0px 48.8px,rgb(213,213,213) 48.8px 52.5px,rgb(212,212,212) 52.5px 56.2px,rgb(230,230,230) 56.2px 60.0px,rgb(212,212,212) 60.0px 63.8px,rgb(221,221,221) 63.8px 64.0px)"></div>
<div class="t" style="right:963.5px;top:484.8px;font-size:10.3px;color:#666;text-align:right;">39,760</div>
<div class="t" style="left:595.5px;top:484.8px;font-size:10.3px;color:#666;">Rizhao</div>
<div class="t" style="left:700.5px;top:484.8px;font-size:10.3px;color:#666;">Sep 23 ~ Sep 24</div>
<div class="t" style="left:794.5px;top:484.8px;font-size:10.3px;color:#666;">2025-09-16 14:21</div>
<div class="a" style="left:246.5px;top:532.0px;width:641.5px;height:1px;background:#e3e3e3"></div>
<div class="a" style="left:291px;top:533.0px;width:141px;height:3px;background:#f4f4f4"></div>
<div class="a" style="left:299px;top:513.0px;width:45px;height:3.67px;background:linear-gradient(90deg,rgb(188,188,188) 0.0px 3.8px,rgb(203,203,203) 3.8px 7.5px,rgb(219,219,219) 7.5px 11.2px,rgb(188,188,188) 11.2px 15.0px,rgb(214,214,214) 15.0px 18.8px,rgb(202,202,202) 18.8px 22.5px,rgb(217,217,217) 22.5px 26.2px,rgb(210,210,210) 26.2px 30.0px,rgb(192,192,192) 30.0px 33.8px,rgb(217,217,217) 33.8px 37.5px,rgb(201,201,201) 37.5px 41.2px,rgb(184,184,184) 41.2px 45.0px)"></div><div class="a" style="left:299px;top:516.7px;width:45px;height:3.67px;background:linear-gradient(90deg,rgb(112,112,112) 0.0px 3.8px,rgb(149,149,149) 3.8px 7.5px,rgb(146,146,146) 7.5px 11.2px,rgb(134,134,134) 11.2px 15.0px,rgb(122,122,122) 15.0px 18.8px,rgb(138,138,138) 18.8px 22.5px,rgb(136,136,136) 22.5px 26.2px,rgb(175,175,175) 26.2px 30.0px,rgb(112,112,112) 30.0px 33.8px,rgb(169,169,169) 33.8px 37.5px,rgb(175,175,175) 37.5px 41.2px,rgb(121,121,121) 41.2px 45.0px)"></div><div class="a" style="left:299px;top:520.3px;width:45px;height:3.67px;background:linear-gradient(90deg,rgb(206,206,206) 0.0px 3.8px,rgb(197,197,197) 3.8px 7.5px,rgb(205,205,205) 7.5px 11.2px,rgb(181,181,181) 11.2px 15.0px,rgb(185,185,185) 15.0px 18.8px,rgb(185,185,185) 18.8px 22.5px,rgb(208,208,208) 22.5px 26.2px,rgb(193,193,193) 26.2px 30.0px,rgb(184,184,184) 30.0px 33.8px,rgb(187,187,187) 33.8px 37.5px,rgb(181,181,181) 37.5px 41.2px,rgb(172,172,172) 41.2px 45.0px)"></div>
<div class="t" style="right:963.5px;top:512.6px;font-size:10.3px;color:#303030;font-weight:bold;text-align:right;">76,454</div>
<div class="t" style="right:915px;top:512.6px;font-size:10.3px;color:#303030;font-weight:bold;text-align:right;">2005</div>
<div class="t" style="left:794.5px;top:512.6px;font-size:10.3px;color:#303030;font-weight:bold;">2025-09-16 14:21</div>
<div class="a" style="left:246.5px;top:559.8px;width:641.5px;height:1px;background:#e3e3e3"></div>
<div class="a" style="left:291px;top:560.8px;width:141px;height:3px;background:#f4f4f4"></div>
<svg style="left:247px;top:543.8px" width="5" height="6" viewBox="0 0 5 6"><path d="M0 0l5 3l-5 3z" fill="#555"/></svg>
<div class="a" style="left:299px;top:541.0px;width:60px;height:3.67px;background:linear-gradient(90deg,rgb(187,187,187) 0.0px 3.8px,rgb(215,215,215) 3.8px 7.5px,rgb(194,194,194) 7.5px 11.2px,rgb(219,219,219) 11.2px 15.0px,rgb(192,192,192) 15.0px 18.8px,rgb(193,193,193) 18.8px 22.5px,rgb(202,202,202) 22.5px 26.2px,rgb(190,190,190) 26.2px 30.0px,rgb(197,197,197) 30.0px 33.8px,rgb(219,219,219) 33.8px 37.5px,rgb(217,217,217) 37.5px 41.2px,rgb(214,214,214) 41.2px 45.0px,rgba(0,0,0,0) 45.0px 48.8px,rgb(207,207,207) 48.8px 52.5px,rgb(218,218,218) 52.5px 56.2px,rgb(219,219,219) 56.2px 60.0px)"></div><div class="a" style="left:299px;top:544.7px;width:60px;height:3.67px;background:linear-gradient(90deg,rgb(153,153,153) 0.0px 3.8px,rgb(166,166,166) 3.8px 7.5px,rgb(115,115,115) 7.5px 11.2px,rgb(167,167,167) 11.2px 15.0px,rgb(146,146,146) 15.0px 18.8px,rgb(169,169,169) 18.8px 22.5px,rgb(160,160,160) 22.5px 26.2px,rgb(133,133,133) 26.2px 30.0px,rgb(115,115,115) 30.0px 33.8px,rgb(182,182,182) 33.8px 37.5px,rgb(121,121,121) 37.5px 41.2px,rgb(147,147,147) 41.2px 45.0px,rgba(0,0,0,0) 45.0px 48.8px,rgb(138,138,138) 48.8px 52.5px,rgb(134,134,134) 52.5px 56.2px,rgb(168,168,168) 56.2px 60.0px)"></div><div class="a" style="left:299px;top:548.3px;width:60px;height:3.67px;background:linear-gradient(90deg,rgb(207,207,207) 0.0px 3.8px,rgb(180,180,180) 3.8px 7.5px,rgb(195,195,195) 7.5px 11.2px,rgb(182,182,182) 11.2px 15.0px,rgb(192,192,192) 15.0px 18.8px,rgb(185,185,185) 18.8px 22.5px,rgb(177,177,177) 22.5px 26.2px,rgb(177,177,177) 26.2px 30.0px,rgb(178,178,178) 30.0px 33.8px,rgb(205,205,205) 33.8px 37.5px,rgb(189,189,189) 37.5px 41.2px,rgb(179,179,179) 41.2px 45.0px,rgba(0,0,0,0) 45.0px 48.8px,rgb(205,205,205) 48.8px 52.5px,rgb(208,208,208) 52.5px 56.2px,rgb(187,187,187) 56.2px 60.0px)"></div>
<div class="t" style="right:963.5px;top:540.4px;font-size:10.3px;color:#303030;font-weight:bold;text-align:right;">1,200</div>
<div class="t" style="right:915px;top:540.4px;font-size:10.3px;color:#303030;font-weight:bold;text-align:right;">2005</div>
<div class="t" style="left:595.5px;top:540.4px;font-size:10.3px;color:#303030;font-weight:bold;">SG</div>
<div class="t" style="left:700.5px;top:540.4px;font-size:10.3px;color:#303030;font-weight:bold;">Sep 15 ~ Sep 15</div>
<div class="t" style="left:794.5px;top:540.4px;font-size:10.3px;color:#303030;font-weight:bold;">2025-09-16 14:21</div>
<div class="a" style="left:246.5px;top:587.6px;width:641.5px;height:1px;background:#e3e3e3"></div>
<div class="a" style="left:291px;top:588.6px;width:141px;height:3px;background:#f4f4f4"></div>
<svg style="left:247px;top:571.6px" width="5" height="6" viewBox="0 0 5 6"><path d="M0 0l5 3l-5 3z" fill="#555"/></svg>
<div class="a" style="left:299px;top:569.0px;width:33px;height:3.67px;background:linear-gradient(90deg,rgb(188,188,188) 0.0px 3.8px,rgb(190,190,190) 3.8px 7.5px,rgb(186,186,186) 7.5px 11.2px,rgb(196,196,196) 11.2px 15.0px,rgb(186,186,186) 15.0px 18.8px,rgb(192,192,192) 18.8px 22.5px,rgba(0,0,0,0) 22.5px 26.2px,rgb(193,193,193) 26.2px 30.0px,rgb(205,205,205) 30.0px 33.0px)"></div><div class="a" style="left:299px;top:572.7px;width:33px;height:3.67px;background:linear-gradient(90deg,rgb(179,179,179) 0.0px 3.8px,rgb(168,168,168) 3.8px 7.5px,rgb(143,143,143) 7.5px 11.2px,rgb(143,143,143) 11.2px 15.0px,rgb(151,151,151) 15.0px 18.8px,rgb(140,140,140) 18.8px 22.5px,rgba(0,0,0,0) 22.5px 26.2px,rgb(137,137,137) 26.2px 30.0px,rgb(116,116,116) 30.0px 33.0px)"></div><div class="a" style="left:299px;top:576.3px;width:33px;height:3.67px;background:linear-gradient(90deg,rgb(181,181,181) 0.0px 3.8px,rgb(207,207,207) 3.8px 7.5px,rgb(175,175,175) 7.5px 11.2px,rgb(190,190,190) 11.2px 15.0px,rgb(194,194,194) 15.0px 18.8px,rgb(203,203,203) 18.8px 22.5px,rgba(0,0,0,0) 22.5px 26.2px,rgb(179,179,179) 26.2px 30.0px,rgb(181,181,181) 30.0px 33.0px)"></div>
<div class="t" style="right:963.5px;top:568.2px;font-size:10.3px;color:#303030;font-weight:bold;text-align:right;">83,684</div>
<div class="t" style="right:915px;top:568.2px;font-size:10.3px;color:#303030;font-weight:bold;text-align:right;">2008</div>
<div class="t" style="left:595.5px;top:568.2px;font-size:10.3px;color:#303030;font-weight:bold;">SG</div>
<div class="t" style="left:700.5px;top:568.2px;font-size:10.3px;color:#303030;font-weight:bold;">Sep 15 ~ Sep 15</div>
<div class="t" style="left:794.5px;top:568.2px;font-size:10.3px;color:#303030;font-weight:bold;">2025-09-16 14:21</div>
<div class="a" style="left:246.5px;top:615.4px;width:641.5px;height:1px;background:#e3e3e3"></div>
<div class="a" style="left:291px;top:616.4px;width:141px;height:3px;background:#f4f4f4"></div>
<svg style="left:247px;top:599.4px" width="5" height="6" viewBox="0 0 5 6"><path d="M0 0l5 3l-5 3z" fill="#555"/></svg>
<div class="a" style="left:299px;top:596.0px;width:79px;height:3.67px;background:linear-gradient(90deg,rgb(192,192,192) 0.0px 3.8px,rgb(198,198,198) 3.8px 7.5px,rgb(200,200,200) 7.5px 11.2px,rgb(219,219,219) 11.2px 15.0px,rgb(215,215,215) 15.0px 18.8px,rgb(216,216,216) 18.8px 22.5px,rgb(184,184,184) 22.5px 26.2px,rgb(184,184,184) 26.2px 30.0px,rgb(210,210,210) 30.0px 33.8px,rgb(217,217,217) 33.8px 37.5px,rgb(201,201,201) 37.5px 41.2px,rgb(205,205,205) 41.2px 45.0px,rgb(183,183,183) 45.0px 48.8px,rgb(198,198,198) 48.8px 52.5px,rgb(218,218,218) 52.5px 56.2px,rgb(214,214,214) 56.2px 60.0px,rgb(216,216,216) 60.0px 63.8px,rgb(220,220,220) 63.8px 67.5px,rgb(192,192,192) 67.5px 71.2px,rgb(187,187,187) 71.2px 75.0px,rgb(189,189,189) 75.0px 78.8px,rgb(203,203,203) 78.8px 79.0px)"></div><div class="a" style="left:299px;top:599.7px;width:79px;height:3.67px;background:linear-gradient(90deg,rgb(163,163,163) 0.0px 3.8px,rgb(183,183,183) 3.8px 7.5px,rgb(166,166,166) 7.5px 11.2px,rgb(161,161,161) 11.2px 15.0px,rgb(170,170,170) 15.0px 18.8px,rgb(146,146,146) 18.8px 22.5px,rgb(153,153,153) 22.5px 26.2px,rgb(115,115,115) 26.2px 30.0px,rgb(171,171,171) 30.0px 33.8px,rgb(129,129,129) 33.8px 37.5px,rgb(181,181,181) 37.5px 41.2px,rgb(161,161,161) 41.2px 45.0px,rgb(135,135,135) 45.0px 48.8px,rgb(121,121,121) 48.8px 52.5px,rgb(131,131,131) 52.5px 56.2px,rgb(160,160,160) 56.2px 60.0px,rgb(165,165,165) 60.0px 63.8px,rgb(120,120,120) 63.8px 67.5px,rgb(117,117,117) 67.5px 71.2px,rgb(151,151,151) 71.2px 75.0px,rgb(156,156,156) 75.0px 78.8px,rgb(141,141,141) 78.8px 79.0px)"></div><div class="a" style="left:299px;top:603.3px;width:79px;height:3.67px;background:linear-gradient(90deg,rgb(179,179,179) 0.0px 3.8px,rgb(193,193,193) 3.8px 7.5px,rgb(171,171,171) 7.5px 11.2px,rgb(182,182,182) 11.2px 15.0px,rgb(188,188,188) 15.0px 18.8px,rgb(207,207,207) 18.8px 22.5px,rgb(195,195,195) 22.5px 26.2px,rgb(204,204,204) 26.2px 30.0px,rgb(188,188,188) 30.0px 33.8px,rgb(179,179,179) 33.8px 37.5px,rgb(180,180,180) 37.5px 41.2px,rgb(207,207,207) 41.2px 45.0px,rgb(197,197,197) 45.0px 48.8px,rgb(182,182,182) 48.8px 52.5px,rgb(171,171,171) 52.5px 56.2px,rgb(189,189,189) 56.2px 60.0px,rgb(196,196,196) 60.0px 63.8px,rgb(186,186,186) 63.8px 67.5px,rgb(180,180,180) 67.5px 71.2px,rgb(196,196,196) 71.2px 75.0px,rgb(206,206,206) 75.0px 78.8px,rgb(179,179,179) 78.8px 79.0px)"></div>
<div class="t" style="right:963.5px;top:596.0px;font-size:10.3px;color:#303030;font-weight:bold;text-align:right;">63,606</div>
<div class="t" style="right:915px;top:596.0px;font-size:10.3px;color:#303030;font-weight:bold;text-align:right;">2015</div>
<div class="t" style="left:595.5px;top:596.0px;font-size:10.3px;color:#303030;font-weight:bold;">Chattagram</div>
<div class="t" style="left:700.5px;top:596.0px;font-size:10.3px;color:#303030;font-weight:bold;">Sep 27 ~ Sep 27</div>
<div class="t" style="left:794.5px;top:596.0px;font-size:10.3px;color:#303030;font-weight:bold;">2025-09-16 14:21</div>
<div class="a" style="left:246.5px;top:643.2px;width:641.5px;height:1px;background:#e3e3e3"></div>
<div class="a" style="left:291px;top:644.2px;width:141px;height:3px;background:#f4f4f4"></div>
<svg style="left:247px;top:627.2px" width="5" height="6" viewBox="0 0 5 6"><path d="M0 0l5 3l-5 3z" fill="#555"/></svg>
<div class="a" style="left:299px;top:624.0px;width:60px;height:3.67px;background:linear-gradient(90deg,rgb(184,184,184) 0.0px 3.8px,rgb(196,196,196) 3.8px 7.5px,rgb(199,199,199) 7.5px 11.2px,rgb(209,209,209) 11.2px 15.0px,rgb(191,191,191) 15.0px 18.8px,rgb(213,213,213) 18.8px 22.5px,rgb(211,211,211) 22.5px 26.2px,rgb(202,202,202) 26.2px 30.0px,rgb(191,191,191) 30.0px 33.8px,rgb(220,220,220) 33.8px 37.5px,rgb(195,195,195) 37.5px 41.2px,rgb(214,214,214) 41.2px 45.0px,rgb(192,192,192) 45.0px 48.8px,rgb(191,191,191) 48.8px 52.5px,rgb(212,212,212) 52.5px 56.2px,rgb(194,194,194) 56.2px 60.0px)"></div><div class="a" style="left:299px;top:627.7px;width:60px;height:3.67px;background:linear-gradient(90deg,rgb(184,184,184) 0.0px 3.8px,rgb(149,149,149) 3.8px 7.5px,rgb(126,126,126) 7.5px 11.2px,rgb(128,128,128) 11.2px 15.0px,rgb(143,143,143) 15.0px 18.8px,rgb(162,162,162) 18.8px 22.5px,rgb(184,184,184) 22.5px 26.2px,rgb(123,123,123) 26.2px 30.0px,rgb(141,141,141) 30.0px 33.8px,rgb(128,128,128) 33.8px 37.5px,rgb(186,186,186) 37.5px 41.2px,rgb(122,122,122) 41.2px 45.0px,rgb(115,115,115) 45.0px 48.8px,rgb(116,116,116) 48.8px 52.5px,rgb(141,141,141) 52.5px 56.2px,rgb(180,180,180) 56.2px 60.0px)"></div><div class="a" style="left:299px;top:631.3px;width:60px;height:3.67px;background:linear-gradient(90deg,rgb(204,204,204) 0.0px 3.8px,rgb(198,198,198) 3.8px 7.5px,rgb(208,208,208) 7.5px 11.2px,rgb(206,206,206) 11.2px 15.0px,rgb(183,183,183) 15.0px 18.8px,rgb(177,177,177) 18.8px 22.5px,rgb(206,206,206) 22.5px 26.2px,rgb(199,199,199) 26.2px 30.0px,rgb(172,172,172) 30.0px 33.8px,rgb(196,196,196) 33.8px 37.5px,rgb(185,185,185) 37.5px 41.2px,rgb(185,185,185) 41.2px 45.0px,rgb(183,183,183) 45.0px 48.8px,rgb(177,177,177) 48.8px 52.5px,rgb(171,171,171) 52.5px 56.2px,rgb(181,181,181) 56.2px 60.0px)"></div>
<div class="t" style="right:963.5px;top:623.8px;font-size:10.3px;color:#303030;font-weight:bold;text-align:right;">63,550</div>
<div class="t" style="right:915px;top:623.8px;font-size:10.3px;color:#303030;font-weight:bold;text-align:right;">2016</div>
<div class="t" style="left:595.5px;top:623.8px;font-size:10.3px;color:#303030;font-weight:bold;">Tianjin</div>
<div class="t" style="left:700.5px;top:623.8px;font-size:10.3px;color:#303030;font-weight:bold;">Sep 25 ~ Sep 25</div>
<div class="t" style="left:794.5px;top:623.8px;font-size:10.3px;color:#303030;font-weight:bold;">2025-09-16 14:21</div>
<div class="a" style="left:246.5px;top:671.0px;width:641.5px;height:1px;background:#e3e3e3"></div>
<div class="a" style="left:291px;top:672.0px;width:141px;height:3px;background:#f4f4f4"></div>
<svg style="left:247px;top:655.0px" width="5" height="6" viewBox="0 0 5 6"><path d="M0 0l5 3l-5 3z" fill="#555"/></svg>
<div class="a" style="left:299px;top:652.0px;width:56px;height:3.67px;background:linear-gradient(90deg,rgb(196,196,196) 0.0px 3.8px,rgb(219,219,219) 3.8px 7.5px,rgb(188,188,188) 7.5px 11.2px,rgb(220,220,220) 11.2px 15.0px,rgb(191,191,191) 15.0px 18.8px,rgb(197,197,197) 18.8px 22.5px,rgb(214,214,214) 22.5px 26.2px,rgb(214,214,214) 26.2px 30.0px,rgb(199,199,199) 30.0px 33.8px,rgb(185,185,185) 33.8px 37.5px,rgb(201,201,201) 37.5px 41.2px,rgb(197,197,197) 41.2px 45.0px,rgb(218,218,218) 45.0px 48.8px,rgb(190,190,190) 48.8px 52.5px,rgb(197,197,197) 52.5px 56.0px)"></div><div class="a" style="left:299px;top:655.7px;width:56px;height:3.67px;background:linear-gradient(90deg,rgb(180,180,180) 0.0px 3.8px,rgb(114,114,114) 3.8px 7.5px,rgb(143,143,143) 7.5px 11.2px,rgb(173,173,173) 11.2px 15.0px,rgb(170,170,170) 15.0px 18.8px,rgb(115,115,115) 18.8px 22.5px,rgb(114,114,114) 22.5px 26.2px,rgb(116,116,116) 26.2px 30.0px,rgb(181,181,181) 30.0px 33.8px,rgb(131,131,131) 33.8px 37.5px,rgb(168,168,168) 37.5px 41.2px,rgb(180,180,180) 41.2px 45.0px,rgb(137,137,137) 45.0px 48.8px,rgb(132,132,132) 48.8px 52.5px,rgb(184,184,184) 52.5px 56.0px)"></div><div class="a" style="left:299px;top:659.3px;width:56px;height:3.67px;background:linear-gradient(90deg,rgb(194,194,194) 0.0px 3.8px,rgb(180,180,180) 3.8px 7.5px,rgb(198,198,198) 7.5px 11.2px,rgb(182,182,182) 11.2px 15.0px,rgb(181,181,181) 15.0px 18.8px,rgb(171,171,171) 18.8px 22.5px,rgb(199,199,199) 22.5px 26.2px,rgb(205,205,205) 26.2px 30.0px,rgb(194,194,194) 30.0px 33.8px,rgb(206,206,206) 33.8px 37.5px,rgb(171,171,171) 37.5px 41.2px,rgb(179,179,179) 41.2px 45.0px,rgb(188,188,188) 45.0px 48.8px,rgb(207,207,207) 48.8px 52.5px,rgb(207,207,207) 52.5px 56.0px)"></div>
<div class="t" style="left:595.5px;top:651.6px;font-size:10.3px;color:#303030;font-weight:bold;">Manila</div>
<div class="t" style="left:700.5px;top:651.6px;font-size:10.3px;color:#303030;font-weight:bold;">Sep 23 ~ Sep 23</div>
<div class="t" style="left:794.5px;top:651.6px;font-size:10.3px;color:#303030;font-weight:bold;">2025-09-16 14:20</div>
<div class="a" style="left:246.5px;top:698.8px;width:641.5px;height:1px;background:#e3e3e3"></div>
<div class="a" style="left:291px;top:699.8px;width:141px;height:3px;background:#f4f4f4"></div>
<svg style="left:247px;top:682.8px" width="5" height="6" viewBox="0 0 5 6"><path d="M0 0l5 3l-5 3z" fill="#555"/></svg>
<div class="a" style="left:299px;top:680.0px;width:79px;height:3.67px;background:linear-gradient(90deg,rgb(198,198,198) 0.0px 3.8px,rgb(193,193,193) 3.8px 7.5px,rgb(199,199,199) 7.5px 11.2px,rgb(202,202,202) 11.2px 15.0px,rgb(218,218,218) 15.0px 18.8px,rgb(190,190,190) 18.8px 22.5px,rgb(213,213,213) 22.5px 26.2px,rgb(211,211,211) 26.2px 30.0px,rgba(0,0,0,0) 30.0px 33.8px,rgb(214,214,214) 33.8px 37.5px,rgb(212,212,212) 37.5px 41.2px,rgb(206,206,206) 41.2px 45.0px,rgb(195,195,195) 45.0px 48.8px,rgb(195,195,195) 48.8px 52.5px,rgb(197,197,197) 52.5px 56.2px,rgb(213,213,213) 56.2px 60.0px,rgb(186,186,186) 60.0px 63.8px,rgb(190,190,190) 63.8px 67.5px,rgb(212,212,212) 67.5px 71.2px,rgb(192,192,192) 71.2px 75.0px,rgb(185,185,185) 75.0px 78.8px,rgb(184,184,184) 78.8px 79.0px)"></div><div class="a" style="left:299px;top:683.7px;width:79px;height:3.67px;background:linear-gradient(90deg,rgb(153,153,153) 0.0px 3.8px,rgb(136,136,136) 3.8px 7.5px,rgb(186,186,186) 7.5px 11.2px,rgb(179,179,179) 11.2px 15.0px,rgb(187,187,187) 15.0px 18.8px,rgb(132,132,132) 18.8px 22.5px,rgb(118,118,118) 22.5px 26.2px,rgb(119,119,119) 26.2px 30.0px,rgba(0,0,0,0) 30.0px 33.8px,rgb(149,149,149) 33.8px 37.5px,rgb(165,165,165) 37.5px 41.2px,rgb(145,145,145) 41.2px 45.0px,rgb(129,129,129) 45.0px 48.8px,rgb(143,143,143) 48.8px 52.5px,rgb(159,159,159) 52.5px 56.2px,rgb(163,163,163) 56.2px 60.0px,rgb(168,168,168) 60.0px 63.8px,rgb(176,176,176) 63.8px 67.5px,rgb(162,162,162) 67.5px 71.2px,rgb(121,121,121) 71.2px 75.0px,rgb(175,175,175) 75.0px 78.8px,rgb(134,134,134) 78.8px 79.0px)"></div><div class="a" style="left:299px;top:687.3px;width:79px;height:3.67px;background:linear-gradient(90deg,rgb(192,192,192) 0.0px 3.8px,rgb(185,185,185) 3.8px 7.5px,rgb(198,198,198) 7.5px 11.2px,rgb(178,178,178) 11.2px 15.0px,rgb(180,180,180) 15.0px 18.8px,rgb(180,180,180) 18.8px 22.5px,rgb(176,176,176) 22.5px 26.2px,rgb(204,204,204) 26.2px 30.0px,rgba(0,0,0,0) 30.0px 33.8px,rgb(192,192,192) 33.8px 37.5px,rgb(183,183,183) 37.5px 41.2px,rgb(185,185,185) 41.2px 45.0px,rgb(208,208,208) 45.0px 48.8px,rgb(190,190,190) 48.8px 52.5px,rgb(179,179,179) 52.5px 56.2px,rgb(201,201,201) 56.2px 60.0px,rgb(195,195,195) 60.0px 63.8px,rgb(208,208,208) 63.8px 67.5px,rgb(174,174,174) 67.5px 71.2px,rgb(188,188,188) 71.2px 75.0px,rgb(202,202,202) 75.0px 78.8px,rgb(202,202,202) 78.8px 79.0px)"></div>
<div class="t" style="right:963.5px;top:679.4px;font-size:10.3px;color:#303030;font-weight:bold;text-align:right;">58,018</div>
<div class="t" style="right:915px;top:679.4px;font-size:10.3px;color:#303030;font-weight:bold;text-align:right;">2009</div>
<div class="t" style="left:595.5px;top:679.4px;font-size:10.3px;color:#303030;font-weight:bold;">SG</div>
<div class="t" style="left:700.5px;top:679.4px;font-size:10.3px;color:#303030;font-weight:bold;">Sep 24 ~ Sep 27</div>
<div class="t" style="left:794.5px;top:679.4px;font-size:10.3px;color:#303030;font-weight:bold;">2025-09-16 14:19</div>
<div class="a" style="left:243px;top:726.6px;width:645px;height:1px;background:#e3e3e3"></div>
<div class="a" style="left:291px;top:727.6px;width:141px;height:3px;background:#f4f4f4"></div>
<svg style="left:247px;top:710.6px" width="5" height="6" viewBox="0 0 5 6"><path d="M0 0l5 3l-5 3z" fill="#555"/></svg>
<svg style="left:260px;top:708.2px" width="10" height="10" viewBox="0 0 10 10"><path d="M5 .3l1.4 3l3.3.4l-2.4 2.3l.6 3.3L5 7.7L2.1 9.3l.6-3.3L.3 3.7l3.3-.4z" fill="#f0a63a"/></svg>
<div class="a" style="left:299px;top:708.0px;width:56px;height:3.67px;background:linear-gradient(90deg,rgb(236,236,236) 0.0px 3.8px,rgb(215,215,215) 3.8px 7.5px,rgb(221,221,221) 7.5px 11.2px,rgb(216,216,216) 11.2px 15.0px,rgb(218,218,218) 15.0px 18.8px,rgb(238,238,238) 18.8px 22.5px,rgb(228,228,228) 22.5px 26.2px,rgb(237,237,237) 26.2px 30.0px,rgb(223,223,223) 30.0px 33.8px,rgb(235,235,235) 33.8px 37.5px,rgb(225,225,225) 37.5px 41.2px,rgb(220,220,220) 41.2px 45.0px,rgb(233,233,233) 45.0px 48.8px,rgb(237,237,237) 48.8px 52.5px,rgb(216,216,216) 52.5px 56.0px)"></div><div class="a" style="left:299px;top:711.7px;width:56px;height:3.67px;background:linear-gradient(90deg,rgb(202,202,202) 0.0px 3.8px,rgb(203,203,203) 3.8px 7.5px,rgb(183,183,183) 7.5px 11.2px,rgb(191,191,191) 11.2px 15.0px,rgb(180,180,180) 15.0px 18.8px,rgb(183,183,183) 18.8px 22.5px,rgb(185,185,185) 22.5px 26.2px,rgb(202,202,202) 26.2px 30.0px,rgb(205,205,205) 30.0px 33.8px,rgb(183,183,183) 33.8px 37.5px,rgb(173,173,173) 37.5px 41.2px,rgb(189,189,189) 41.2px 45.0px,rgb(206,206,206) 45.0px 48.8px,rgb(182,182,182) 48.8px 52.5px,rgb(188,188,188) 52.5px 56.0px)"></div><div class="a" style="left:299px;top:715.3px;width:56px;height:3.67px;background:linear-gradient(90deg,rgb(212,212,212) 0.0px 3.8px,rgb(227,227,227) 3.8px 7.5px,rgb(220,220,220) 7.5px 11.2px,rgb(208,208,208) 11.2px 15.0px,rgb(209,209,209) 15.0px 18.8px,rgb(217,217,217) 18.8px 22.5px,rgb(220,220,220) 22.5px 26.2px,rgb(223,223,223) 26.2px 30.0px,rgb(209,209,209) 30.0px 33.8px,rgb(211,211,211) 33.8px 37.5px,rgb(224,224,224) 37.5px 41.2px,rgb(217,217,217) 41.2px 45.0px,rgb(214,214,214) 45.0px 48.8px,rgb(214,214,214) 48.8px 52.5px,rgb(230,230,230) 52.5px 56.0px)"></div>
<div class="t" style="right:963.5px;top:707.2px;font-size:10.3px;color:#666;text-align:right;">63,686</div>
<div class="t" style="right:915px;top:707.2px;font-size:10.3px;color:#666;text-align:right;">2025</div>
<div class="t" style="left:595.5px;top:707.2px;font-size:10.3px;color:#666;letter-spacing:-0.25px">Tai Cang, Chang Jia...</div>
<div class="t" style="left:700.5px;top:707.2px;font-size:10.3px;color:#666;">Sep 22 ~ Sep 22</div>
<div class="t" style="left:794.5px;top:707.2px;font-size:10.3px;color:#666;">2025-09-16 14:19</div>
<div class="a" style="left:243px;top:728px;width:645px;height:27px;background:#efefef"></div>
<div class="a" style="left:243px;top:754.4px;width:645px;height:1px;background:#e3e3e3"></div>
<div class="a" style="left:291px;top:755.4px;width:141px;height:3px;background:#f4f4f4"></div>
<svg style="left:247px;top:738.4px" width="5" height="6" viewBox="0 0 5 6"><path d="M0 0l5 3l-5 3z" fill="#555"/></svg>
<svg style="left:260px;top:736.0px" width="10" height="10" viewBox="0 0 10 10"><path d="M5 .3l1.4 3l3.3.4l-2.4 2.3l.6 3.3L5 7.7L2.1 9.3l.6-3.3L.3 3.7l3.3-.4z" fill="#f0a63a"/></svg>
<div class="a" style="left:299px;top:736.0px;width:67px;height:3.67px;background:linear-gradient(90deg,rgb(221,221,221) 0.0px 3.8px,rgb(228,228,228) 3.8px 7.5px,rgb(222,222,222) 7.5px 11.2px,rgb(224,224,224) 11.2px 15.0px,rgb(235,235,235) 15.0px 18.8px,rgb(238,238,238) 18.8px 22.5px,rgb(223,223,223) 22.5px 26.2px,rgb(218,218,218) 26.2px 30.0px,rgb(232,232,232) 30.0px 33.8px,rgb(219,219,219) 33.8px 37.5px,rgb(214,214,214) 37.5px 41.2px,rgb(236,236,236) 41.2px 45.0px,rgb(224,224,224) 45.0px 48.8px,rgb(234,234,234) 48.8px 52.5px,rgb(224,224,224) 52.5px 56.2px,rgb(236,236,236) 56.2px 60.0px,rgb(225,225,225) 60.0px 63.8px,rgb(218,218,218) 63.8px 67.0px)"></div><div class="a" style="left:299px;top:739.7px;width:67px;height:3.67px;background:linear-gradient(90deg,rgb(173,173,173) 0.0px 3.8px,rgb(200,200,200) 3.8px 7.5px,rgb(205,205,205) 7.5px 11.2px,rgb(218,218,218) 11.2px 15.0px,rgb(177,177,177) 15.0px 18.8px,rgb(204,204,204) 18.8px 22.5px,rgb(191,191,191) 22.5px 26.2px,rgb(198,198,198) 26.2px 30.0px,rgb(180,180,180) 30.0px 33.8px,rgb(187,187,187) 33.8px 37.5px,rgb(199,199,199) 37.5px 41.2px,rgb(219,219,219) 41.2px 45.0px,rgb(178,178,178) 45.0px 48.8px,rgb(197,197,197) 48.8px 52.5px,rgb(213,213,213) 52.5px 56.2px,rgb(221,221,221) 56.2px 60.0px,rgb(182,182,182) 60.0px 63.8px,rgb(179,179,179) 63.8px 67.0px)"></div><div class="a" style="left:299px;top:743.3px;width:67px;height:3.67px;background:linear-gradient(90deg,rgb(230,230,230) 0.0px 3.8px,rgb(231,231,231) 3.8px 7.5px,rgb(219,219,219) 7.5px 11.2px,rgb(208,208,208) 11.2px 15.0px,rgb(230,230,230) 15.0px 18.8px,rgb(216,216,216) 18.8px 22.5px,rgb(229,229,229) 22.5px 26.2px,rgb(222,222,222) 26.2px 30.0px,rgb(227,227,227) 30.0px 33.8px,rgb(211,211,211) 33.8px 37.5px,rgb(226,226,226) 37.5px 41.2px,rgb(212,212,212) 41.2px 45.0px,rgb(217,217,217) 45.0px 48.8px,rgb(228,228,228) 48.8px 52.5px,rgb(227,227,227) 52.5px 56.2px,rgb(211,211,211) 56.2px 60.0px,rgb(212,212,212) 60.0px 63.8px,rgb(217,217,217) 63.8px 67.0px)"></div>
<div class="t" style="right:963.5px;top:735.0px;font-size:10.3px;color:#666;text-align:right;">63,514</div>
<div class="t" style="right:915px;top:735.0px;font-size:10.3px;color:#666;text-align:right;">2016</div>
<div class="t" style="left:595.5px;top:735.0px;font-size:10.3px;color:#666;">Gwangyang</div>
<div class="t" style="left:700.5px;top:735.0px;font-size:10.3px;color:#666;">Sep 22 ~ Sep 23</div>
<div class="t" style="left:794.5px;top:735.0px;font-size:10.3px;color:#666;">2025-09-16 14:18</div>
<div class="a" style="left:243px;top:782.2px;width:645px;height:1px;background:#e3e3e3"></div>
<div class="a" style="left:291px;top:783.2px;width:141px;height:3px;background:#f4f4f4"></div>
<svg style="left:247px;top:766.2px" width="5" height="6" viewBox="0 0 5 6"><path d="M0 0l5 3l-5 3z" fill="#555"/></svg>
<div class="a" style="left:299px;top:763.0px;width:59px;height:3.67px;background:linear-gradient(90deg,rgb(226,226,226) 0.0px 3.8px,rgb(223,223,223) 3.8px 7.5px,rgb(217,217,217) 7.5px 11.2px,rgb(220,220,220) 11.2px 15.0px,rgb(232,232,232) 15.0px 18.8px,rgb(236,236,236) 18.8px 22.5px,rgb(215,215,215) 22.5px 26.2px,rgb(228,228,228) 26.2px 30.0px,rgb(232,232,232) 30.0px 33.8px,rgb(214,214,214) 33.8px 37.5px,rgb(234,234,234) 37.5px 41.2px,rgb(216,216,216) 41.2px 45.0px,rgb(228,228,228) 45.0px 48.8px,rgb(227,227,227) 48.8px 52.5px,rgb(229,229,229) 52.5px 56.2px,rgb(221,221,221) 56.2px 59.0px)"></div><div class="a" style="left:299px;top:766.7px;width:59px;height:3.67px;background:linear-gradient(90deg,rgb(194,194,194) 0.0px 3.8px,rgb(202,202,202) 3.8px 7.5px,rgb(194,194,194) 7.5px 11.2px,rgb(205,205,205) 11.2px 15.0px,rgb(195,195,195) 15.0px 18.8px,rgb(194,194,194) 18.8px 22.5px,rgb(174,174,174) 22.5px 26.2px,rgb(203,203,203) 26.2px 30.0px,rgb(197,197,197) 30.0px 33.8px,rgb(184,184,184) 33.8px 37.5px,rgb(211,211,211) 37.5px 41.2px,rgb(211,211,211) 41.2px 45.0px,rgb(195,195,195) 45.0px 48.8px,rgb(181,181,181) 48.8px 52.5px,rgb(196,196,196) 52.5px 56.2px,rgb(178,178,178) 56.2px 59.0px)"></div><div class="a" style="left:299px;top:770.3px;width:59px;height:3.67px;background:linear-gradient(90deg,rgb(210,210,210) 0.0px 3.8px,rgb(217,217,217) 3.8px 7.5px,rgb(209,209,209) 7.5px 11.2px,rgb(218,218,218) 11.2px 15.0px,rgb(219,219,219) 15.0px 18.8px,rgb(208,208,208) 18.8px 22.5px,rgb(223,223,223) 22.5px 26.2px,rgb(209,209,209) 26.2px 30.0px,rgb(225,225,225) 30.0px 33.8px,rgb(226,226,226) 33.8px 37.5px,rgb(219,219,219) 37.5px 41.2px,rgb(208,208,208) 41.2px 45.0px,rgb(219,219,219) 45.0px 48.8px,rgb(216,216,216) 48.8px 52.5px,rgb(230,230,230) 52.5px 56.2px,rgb(210,210,210) 56.2px 59.0px)"></div>
<div class="t" style="right:963.5px;top:762.8px;font-size:10.3px;color:#666;text-align:right;">63,197</div>
<div class="t" style="right:915px;top:762.8px;font-size:10.3px;color:#666;text-align:right;">2015</div>
<div class="t" style="left:595.5px;top:762.8px;font-size:10.3px;color:#666;">Coatzacoalcos</div>
<div class="t" style="left:700.5px;top:762.8px;font-size:10.3px;color:#666;">Sep 22 ~ Sep 28</div>
<div class="t" style="left:794.5px;top:762.8px;font-size:10.3px;color:#666;">2025-09-16 14:17</div>
<div class="a" style="left:246.5px;top:810.0px;width:641.5px;height:1px;background:#e3e3e3"></div>
<div class="a" style="left:291px;top:811.0px;width:141px;height:3px;background:#f4f4f4"></div>
<div class="a" style="left:299px;top:791.0px;width:33px;height:3.67px;background:linear-gradient(90deg,rgb(216,216,216) 0.0px 3.8px,rgb(221,221,221) 3.8px 7.5px,rgb(211,211,211) 7.5px 11.2px,rgb(214,214,214) 11.2px 15.0px,rgb(190,190,190) 15.0px 18.8px,rgb(220,220,220) 18.8px 22.5px,rgb(202,202,202) 22.5px 26.2px,rgb(219,219,219) 26.2px 30.0px,rgb(218,218,218) 30.0px 33.0px)"></div><div class="a" style="left:299px;top:794.7px;width:33px;height:3.67px;background:linear-gradient(90deg,rgb(124,124,124) 0.0px 3.8px,rgb(171,171,171) 3.8px 7.5px,rgb(182,182,182) 7.5px 11.2px,rgb(116,116,116) 11.2px 15.0px,rgb(138,138,138) 15.0px 18.8px,rgb(169,169,169) 18.8px 22.5px,rgb(124,124,124) 22.5px 26.2px,rgb(180,180,180) 26.2px 30.0px,rgb(132,132,132) 30.0px 33.0px)"></div><div class="a" style="left:299px;top:798.3px;width:33px;height:3.67px;background:linear-gradient(90deg,rgb(201,201,201) 0.0px 3.8px,rgb(176,176,176) 3.8px 7.5px,rgb(189,189,189) 7.5px 11.2px,rgb(205,205,205) 11.2px 15.0px,rgb(178,178,178) 15.0px 18.8px,rgb(180,180,180) 18.8px 22.5px,rgb(190,190,190) 22.5px 26.2px,rgb(183,183,183) 26.2px 30.0px,rgb(172,172,172) 30.0px 33.0px)"></div>
<div class="t" style="right:963.5px;top:790.6px;font-size:10.3px;color:#303030;font-weight:bold;text-align:right;">48,885</div>
<div class="t" style="right:915px;top:790.6px;font-size:10.3px;color:#303030;font-weight:bold;text-align:right;">2012</div>
<div class="t" style="left:794.5px;top:790.6px;font-size:10.3px;color:#303030;font-weight:bold;">2025-09-16 14:13</div>
<div class="a" style="left:246.5px;top:837.8px;width:641.5px;height:1px;background:#e3e3e3"></div>
<div class="a" style="left:291px;top:838.8px;width:141px;height:3px;background:#f4f4f4"></div>
<div class="a" style="left:299px;top:819.0px;width:30px;height:3.67px;background:linear-gradient(90deg,rgb(190,190,190) 0.0px 3.8px,rgb(189,189,189) 3.8px 7.5px,rgb(219,219,219) 7.5px 11.2px,rgb(209,209,209) 11.2px 15.0px,rgb(217,217,217) 15.0px 18.8px,rgb(189,189,189) 18.8px 22.5px,rgb(213,213,213) 22.5px 26.2px,rgb(187,187,187) 26.2px 30.0px)"></div><div class="a" style="left:299px;top:822.7px;width:30px;height:3.67px;background:linear-gradient(90deg,rgb(152,152,152) 0.0px 3.8px,rgb(160,160,160) 3.8px 7.5px,rgb(139,139,139) 7.5px 11.2px,rgb(178,178,178) 11.2px 15.0px,rgb(154,154,154) 15.0px 18.8px,rgb(156,156,156) 18.8px 22.5px,rgb(179,179,179) 22.5px 26.2px,rgb(119,119,119) 26.2px 30.0px)"></div><div class="a" style="left:299px;top:826.3px;width:30px;height:3.67px;background:linear-gradient(90deg,rgb(208,208,208) 0.0px 3.8px,rgb(194,194,194) 3.8px 7.5px,rgb(185,185,185) 7.5px 11.2px,rgb(201,201,201) 11.2px 15.0px,rgb(180,180,180) 15.0px 18.8px,rgb(208,208,208) 18.8px 22.5px,rgb(192,192,192) 22.5px 26.2px,rgb(184,184,184) 26.2px 30.0px)"></div>
<div class="t" style="right:963.5px;top:818.4px;font-size:10.3px;color:#303030;font-weight:bold;text-align:right;">49,000</div>
<div class="t" style="left:595.5px;top:818.4px;font-size:10.3px;color:#303030;font-weight:bold;">Chang Jiang Kou</div>
<div class="t" style="left:700.5px;top:818.4px;font-size:10.3px;color:#303030;font-weight:bold;">Oct 04 ~ Oct 04</div>
<div class="t" style="left:794.5px;top:818.4px;font-size:10.3px;color:#303030;font-weight:bold;">2025-09-16 14:13</div>
<div class="a" style="left:246.5px;top:865.6px;width:641.5px;height:1px;background:#e3e3e3"></div>
<div class="a" style="left:291px;top:866.6px;width:141px;height:3px;background:#f4f4f4"></div>
<svg style="left:247px;top:849.6px" width="5" height="6" viewBox="0 0 5 6"><path d="M0 0l5 3l-5 3z" fill="#555"/></svg>
<div class="a" style="left:299px;top:847.0px;width:130px;height:3.67px;background:linear-gradient(90deg,rgb(212,212,212) 0.0px 3.8px,rgb(200,200,200) 3.8px 7.5px,rgb(190,190,190) 7.5px 11.2px,rgb(211,211,211) 11.2px 15.0px,rgb(185,185,185) 15.0px 18.8px,rgb(214,214,214) 18.8px 22.5px,rgb(193,193,193) 22.5px 26.2px,rgba(0,0,0,0) 26.2px 30.0px,rgb(207,207,207) 30.0px 33.8px,rgb(220,220,220) 33.8px 37.5px,rgb(205,205,205) 37.5px 41.2px,rgb(208,208,208) 41.2px 45.0px,rgb(195,195,195) 45.0px 48.8px,rgb(183,183,183) 48.8px 52.5px,rgb(184,184,184) 52.5px 56.2px,rgb(189,189,189) 56.2px 60.0px,rgb(206,206,206) 60.0px 63.8px,rgb(199,199,199) 63.8px 67.5px,rgb(202,202,202) 67.5px 71.2px,rgb(217,217,217) 71.2px 75.0px,rgb(188,188,188) 75.0px 78.8px,rgb(192,192,192) 78.8px 82.5px,rgb(208,208,208) 82.5px 86.2px,rgb(184,184,184) 86.2px 90.0px,rgb(183,183,183) 90.0px 93.8px,rgb(196,196,196) 93.8px 97.5px,rgb(187,187,187) 97.5px 101.2px,rgb(197,197,197) 101.2px 105.0px,rgb(192,192,192) 105.0px 108.8px,rgb(205,205,205) 108.8px 112.5px,rgb(205,205,205) 112.5px 116.2px,rgb(191,191,191) 116.2px 120.0px,rgb(207,207,207) 120.0px 123.8px,rgb(201,201,201) 123.8px 127.5px,rgb(188,188,188) 127.5px 130.0px)"></div><div class="a" style="left:299px;top:850.7px;width:130px;height:3.67px;background:linear-gradient(90deg,rgb(183,183,183) 0.0px 3.8px,rgb(130,130,130) 3.8px 7.5px,rgb(123,123,123) 7.5px 11.2px,rgb(119,119,119) 11.2px 15.0px,rgb(160,160,160) 15.0px 18.8px,rgb(178,178,178) 18.8px 22.5px,rgb(171,171,171) 22.5px 26.2px,rgba(0,0,0,0) 26.2px 30.0px,rgb(142,142,142) 30.0px 33.8px,rgb(132,132,132) 33.8px 37.5px,rgb(112,112,112) 37.5px 41.2px,rgb(161,161,161) 41.2px 45.0px,rgb(154,154,154) 45.0px 48.8px,rgb(138,138,138) 48.8px 52.5px,rgb(161,161,161) 52.5px 56.2px,rgb(145,145,145) 56.2px 60.0px,rgb(183,183,183) 60.0px 63.8px,rgb(167,167,167) 63.8px 67.5px,rgb(130,130,130) 67.5px 71.2px,rgb(180,180,180) 71.2px 75.0px,rgb(115,115,115) 75.0px 78.8px,rgb(152,152,152) 78.8px 82.5px,rgb(142,142,142) 82.5px 86.2px,rgb(130,130,130) 86.2px 90.0px,rgb(116,116,116) 90.0px 93.8px,rgb(171,171,171) 93.8px 97.5px,rgb(112,112,112) 97.5px 101.2px,rgb(153,153,153) 101.2px 105.0px,rgb(183,183,183) 105.0px 108.8px,rgb(122,122,122) 108.8px 112.5px,rgb(127,127,127) 112.5px 116.2px,rgb(158,158,158) 116.2px 120.0px,rgb(150,150,150) 120.0px 123.8px,rgb(160,160,160) 123.8px 127.5px,rgb(173,173,173) 127.5px 130.0px)"></div><div class="a" style="left:299px;top:854.3px;width:130px;height:3.67px;background:linear-gradient(90deg,rgb(177,177,177) 0.0px 3.8px,rgb(182,182,182) 3.8px 7.5px,rgb(182,182,182) 7.5px 11.2px,rgb(172,172,172) 11.2px 15.0px,rgb(204,204,204) 15.0px 18.8px,rgb(200,200,200) 18.8px 22.5px,rgb(198,198,198) 22.5px 26.2px,rgba(0,0,0,0) 26.2px 30.0px,rgb(171,171,171) 30.0px 33.8px,rgb(202,202,202) 33.8px 37.5px,rgb(199,199,199) 37.5px 41.2px,rgb(188,188,188) 41.2px 45.0px,rgb(199,199,199) 45.0px 48.8px,rgb(188,188,188) 48.8px 52.5px,rgb(179,179,179) 52.5px 56.2px,rgb(174,174,174) 56.2px 60.0px,rgb(179,179,179) 60.0px 63.8px,rgb(172,172,172) 63.8px 67.5px,rgb(183,183,183) 67.5px 71.2px,rgb(199,199,199) 71.2px 75.0px,rgb(197,197,197) 75.0px 78.8px,rgb(203,203,203) 78.8px 82.5px,rgb(197,197,197) 82.5px 86.2px,rgb(181,181,181) 86.2px 90.0px,rgb(191,191,191) 90.0px 93.8px,rgb(187,187,187) 93.8px 97.5px,rgb(200,200,200) 97.5px 101.2px,rgb(190,190,190) 101.2px 105.0px,rgb(180,180,180) 105.0px 108.8px,rgb(195,195,195) 108.8px 112.5px,rgb(207,207,207) 112.5px 116.2px,rgb(179,179,179) 116.2px 120.0px,rgb(204,204,204) 120.0px 123.8px,rgb(171,171,171) 123.8px 127.5px,rgb(180,180,180) 127.5px 130.0px)"></div>
<div class="t" style="right:963.5px;top:846.2px;font-size:10.3px;color:#303030;font-weight:bold;text-align:right;">32,018</div>
<div class="t" style="right:915px;top:846.2px;font-size:10.3px;color:#303030;font-weight:bold;text-align:right;">2010</div>
<div class="t" style="left:595.5px;top:846.2px;font-size:10.3px;color:#303030;font-weight:bold;">Penang</div>
<div class="t" style="left:700.5px;top:846.2px;font-size:10.3px;color:#303030;font-weight:bold;">Sep 21 ~ Sep 24</div>
<div class="t" style="left:794.5px;top:846.2px;font-size:10.3px;color:#303030;font-weight:bold;">2025-09-16 14:13</div>
<div class="a" style="left:246.5px;top:893.4px;width:641.5px;height:1px;background:#e3e3e3"></div>
<div class="a" style="left:291px;top:894.4px;width:141px;height:3px;background:#f4f4f4"></div>
<svg style="left:247px;top:877.4px" width="5" height="6" viewBox="0 0 5 6"><path d="M0 0l5 3l-5 3z" fill="#555"/></svg>
<div class="a" style="left:299px;top:875.0px;width:92px;height:3.67px;background:linear-gradient(90deg,rgb(192,192,192) 0.0px 3.8px,rgb(211,211,211) 3.8px 7.5px,rgb(219,219,219) 7.5px 11.2px,rgb(211,211,211) 11.2px 15.0px,rgb(195,195,195) 15.0px 18.8px,rgb(216,216,216) 18.8px 22.5px,rgb(195,195,195) 22.5px 26.2px,rgba(0,0,0,0) 26.2px 30.0px,rgb(192,192,192) 30.0px 33.8px,rgb(217,217,217) 33.8px 37.5px,rgb(207,207,207) 37.5px 41.2px,rgb(209,209,209) 41.2px 45.0px,rgb(208,208,208) 45.0px 48.8px,rgb(220,220,220) 48.8px 52.5px,rgb(201,201,201) 52.5px 56.2px,rgb(215,215,215) 56.2px 60.0px,rgb(210,210,210) 60.0px 63.8px,rgb(216,216,216) 63.8px 67.5px,rgb(200,200,200) 67.5px 71.2px,rgb(211,211,211) 71.2px 75.0px,rgb(205,205,205) 75.0px 78.8px,rgb(195,195,195) 78.8px 82.5px,rgb(191,191,191) 82.5px 86.2px,rgb(207,207,207) 86.2px 90.0px,rgb(186,186,186) 90.0px 92.0px)"></div><div class="a" style="left:299px;top:878.7px;width:92px;height:3.67px;background:linear-gradient(90deg,rgb(181,181,181) 0.0px 3.8px,rgb(122,122,122) 3.8px 7.5px,rgb(114,114,114) 7.5px 11.2px,rgb(120,120,120) 11.2px 15.0px,rgb(182,182,182) 15.0px 18.8px,rgb(138,138,138) 18.8px 22.5px,rgb(122,122,122) 22.5px 26.2px,rgba(0,0,0,0) 26.2px 30.0px,rgb(114,114,114) 30.0px 33.8px,rgb(115,115,115) 33.8px 37.5px,rgb(164,164,164) 37.5px 41.2px,rgb(160,160,160) 41.2px 45.0px,rgb(164,164,164) 45.0px 48.8px,rgb(167,167,167) 48.8px 52.5px,rgb(116,116,116) 52.5px 56.2px,rgb(156,156,156) 56.2px 60.0px,rgb(139,139,139) 60.0px 63.8px,rgb(174,174,174) 63.8px 67.5px,rgb(174,174,174) 67.5px 71.2px,rgb(179,179,179) 71.2px 75.0px,rgb(117,117,117) 75.0px 78.8px,rgb(177,177,177) 78.8px 82.5px,rgb(181,181,181) 82.5px 86.2px,rgb(183,183,183) 86.2px 90.0px,rgb(120,120,120) 90.0px 92.0px)"></div><div class="a" style="left:299px;top:882.3px;width:92px;height:3.67px;background:linear-gradient(90deg,rgb(178,178,178) 0.0px 3.8px,rgb(175,175,175) 3.8px 7.5px,rgb(172,172,172) 7.5px 11.2px,rgb(203,203,203) 11.2px 15.0px,rgb(201,201,201) 15.0px 18.8px,rgb(194,194,194) 18.8px 22.5px,rgb(202,202,202) 22.5px 26.2px,rgba(0,0,0,0) 26.2px 30.0px,rgb(194,194,194) 30.0px 33.8px,rgb(181,181,181) 33.8px 37.5px,rgb(174,174,174) 37.5px 41.2px,rgb(174,174,174) 41.2px 45.0px,rgb(199,199,199) 45.0px 48.8px,rgb(178,178,178) 48.8px 52.5px,rgb(183,183,183) 52.5px 56.2px,rgb(187,187,187) 56.2px 60.0px,rgb(171,171,171) 60.0px 63.8px,rgb(180,180,180) 63.8px 67.5px,rgb(181,181,181) 67.5px 71.2px,rgb(198,198,198) 71.2px 75.0px,rgb(184,184,184) 75.0px 78.8px,rgb(183,183,183) 78.8px 82.5px,rgb(207,207,207) 82.5px 86.2px,rgb(190,190,190) 86.2px 90.0px,rgb(203,203,203) 90.0px 92.0px)"></div>
<div class="t" style="right:963.5px;top:874.0px;font-size:10.3px;color:#303030;font-weight:bold;text-align:right;">32,017</div>
<div class="t" style="right:915px;top:874.0px;font-size:10.3px;color:#303030;font-weight:bold;text-align:right;">2010</div>
<div class="t" style="left:595.5px;top:874.0px;font-size:10.3px;color:#303030;font-weight:bold;">SG</div>
<div class="t" style="left:700.5px;top:874.0px;font-size:10.3px;color:#303030;font-weight:bold;">Sep 16 ~ Sep 16</div>
<div class="t" style="left:794.5px;top:874.0px;font-size:10.3px;color:#303030;font-weight:bold;">2025-09-16 14:13</div>
<div class="a" style="left:243px;top:283px;width:3px;height:139px;background:#0b5cc4"></div>
<div class="a" style="left:243px;top:505px;width:3px;height:195px;background:#0b5cc4"></div>
<div class="a" style="left:243px;top:783px;width:3px;height:111px;background:#0b5cc4"></div>
<div class="a" style="left:243px;top:904px;width:645px;height:1px;background:#e0e0e0"></div>
<div class="t" style="left:247.5px;top:915.0px;font-size:10.3px;color:#333;">Total : 6091</div>
<svg style="left:469px;top:916px" width="10" height="9" viewBox="0 0 10 9" fill="none" stroke="#555" stroke-width="1.1" stroke-linejoin="round"><path d="M.8 0v9M8.8 .6v7.8L3.2 4.5z"/></svg>
<svg style="left:496px;top:916px" width="8" height="9" viewBox="0 0 8 9" fill="none" stroke="#555" stroke-width="1.1" stroke-linejoin="round"><path d="M6.8 .6v7.8L1.2 4.5z"/></svg>
<div class="a" style="left:515px;top:911.5px;width:45px;height:18px;background:#fff;border:1px solid #d0d0d0;border-bottom-color:#b8b8b8;border-radius:3px"></div>
<div class="t" style="left:437.5px;width:200px;top:915.0px;font-size:10.3px;color:#222;text-align:center;">6</div>
<div class="t" style="left:564px;top:915.0px;font-size:10.3px;color:#555;">/</div>
<div class="a" style="left:572px;top:911.5px;width:44px;height:18px;background:#fff;border:1px solid #e3e3e3;border-radius:3px"></div>
<div class="t" style="left:494px;width:200px;top:915.0px;font-size:10.3px;color:#aaa;text-align:center;">122</div>
<svg style="left:628px;top:916px" width="8" height="9" viewBox="0 0 8 9" fill="none" stroke="#555" stroke-width="1.1" stroke-linejoin="round"><path d="M1.2 .6v7.8L6.8 4.5z"/></svg>
<svg style="left:653px;top:916px" width="10" height="9" viewBox="0 0 10 9" fill="none" stroke="#555" stroke-width="1.1" stroke-linejoin="round"><path d="M9.2 0v9M1.2 .6v7.8L6.8 4.5z"/></svg>
<div class="a" style="left:839px;top:911.5px;width:45px;height:18px;background:#fff;border:1px solid #d0d0d0;border-bottom-color:#b8b8b8;border-radius:3px"></div>
<div class="t" style="left:846px;top:915.0px;font-size:10.3px;color:#222;">50</div>
<svg style="left:868px;top:918.5px" width="8" height="5" viewBox="0 0 8 5" fill="none" stroke="#666" stroke-width="1"><path d="M.5 .5L4 4L7.5 .5"/></svg>
<div class="a" style="left:901px;top:71px;width:593px;height:55px;background:#fff;border:1px solid #e6e6e6;border-radius:4px"></div>
<svg style="left:915.5px;top:92.5px" width="15" height="14" viewBox="0 0 15 14" ><path d="M7.5 .3l2.2 4.5l4.9.7l-3.6 3.4l.9 4.9L7.5 11.5l-4.4 2.3l.9-4.9L.4 5.5l4.9-.7z" fill="#fba91c"/></svg>
<div class="a" style="left:938px;top:91.5px;width:89px;height:3.75px;background:linear-gradient(90deg,rgb(208,208,208) 0.0px 3.5px,rgb(179,179,179) 3.5px 7.0px,rgb(198,198,198) 7.0px 10.5px,rgb(199,199,199) 10.5px 14.0px,rgb(216,216,216) 14.0px 17.5px,rgb(194,194,194) 17.5px 21.0px,rgb(212,212,212) 21.0px 24.5px,rgb(204,204,204) 24.5px 28.0px,rgb(188,188,188) 28.0px 31.5px,rgb(220,220,220) 31.5px 35.0px,rgba(0,0,0,0) 35.0px 38.5px,rgb(182,182,182) 38.5px 42.0px,rgb(218,218,218) 42.0px 45.5px,rgb(186,186,186) 45.5px 49.0px,rgb(177,177,177) 49.0px 52.5px,rgb(187,187,187) 52.5px 56.0px,rgb(215,215,215) 56.0px 59.5px,rgb(226,226,226) 59.5px 63.0px,rgb(177,177,177) 63.0px 66.5px,rgb(202,202,202) 66.5px 70.0px,rgb(202,202,202) 70.0px 73.5px,rgb(217,217,217) 73.5px 77.0px,rgb(186,186,186) 77.0px 80.5px,rgb(202,202,202) 80.5px 84.0px,rgb(194,194,194) 84.0px 87.5px,rgb(219,219,219) 87.5px 89.0px)"></div><div class="a" style="left:938px;top:95.2px;width:89px;height:3.75px;background:linear-gradient(90deg,rgb(126,126,126) 0.0px 3.5px,rgb(194,194,194) 3.5px 7.0px,rgb(128,128,128) 7.0px 10.5px,rgb(121,121,121) 10.5px 14.0px,rgb(169,169,169) 14.0px 17.5px,rgb(149,149,149) 17.5px 21.0px,rgb(110,110,110) 21.0px 24.5px,rgb(163,163,163) 24.5px 28.0px,rgb(108,108,108) 28.0px 31.5px,rgb(178,178,178) 31.5px 35.0px,rgba(0,0,0,0) 35.0px 38.5px,rgb(169,169,169) 38.5px 42.0px,rgb(178,178,178) 42.0px 45.5px,rgb(162,162,162) 45.5px 49.0px,rgb(135,135,135) 49.0px 52.5px,rgb(140,140,140) 52.5px 56.0px,rgb(139,139,139) 56.0px 59.5px,rgb(189,189,189) 59.5px 63.0px,rgb(108,108,108) 63.0px 66.5px,rgb(188,188,188) 66.5px 70.0px,rgb(102,102,102) 70.0px 73.5px,rgb(120,120,120) 73.5px 77.0px,rgb(126,126,126) 77.0px 80.5px,rgb(190,190,190) 80.5px 84.0px,rgb(150,150,150) 84.0px 87.5px,rgb(137,137,137) 87.5px 89.0px)"></div><div class="a" style="left:938px;top:99.0px;width:89px;height:3.75px;background:linear-gradient(90deg,rgb(188,188,188) 0.0px 3.5px,rgb(123,123,123) 3.5px 7.0px,rgb(146,146,146) 7.0px 10.5px,rgb(153,153,153) 10.5px 14.0px,rgb(175,175,175) 14.0px 17.5px,rgb(175,175,175) 17.5px 21.0px,rgb(164,164,164) 21.0px 24.5px,rgb(134,134,134) 24.5px 28.0px,rgb(132,132,132) 28.0px 31.5px,rgb(115,115,115) 31.5px 35.0px,rgba(0,0,0,0) 35.0px 38.5px,rgb(184,184,184) 38.5px 42.0px,rgb(166,166,166) 42.0px 45.5px,rgb(174,174,174) 45.5px 49.0px,rgb(116,116,116) 49.0px 52.5px,rgb(143,143,143) 52.5px 56.0px,rgb(177,177,177) 56.0px 59.5px,rgb(157,157,157) 59.5px 63.0px,rgb(112,112,112) 63.0px 66.5px,rgb(146,146,146) 66.5px 70.0px,rgb(188,188,188) 70.0px 73.5px,rgb(123,123,123) 73.5px 77.0px,rgb(119,119,119) 77.0px 80.5px,rgb(130,130,130) 80.5px 84.0px,rgb(170,170,170) 84.0px 87.5px,rgb(184,184,184) 87.5px 89.0px)"></div><div class="a" style="left:938px;top:102.8px;width:89px;height:3.75px;background:linear-gradient(90deg,rgb(172,172,172) 0.0px 3.5px,rgb(172,172,172) 3.5px 7.0px,rgb(177,177,177) 7.0px 10.5px,rgb(181,181,181) 10.5px 14.0px,rgb(191,191,191) 14.0px 17.5px,rgb(172,172,172) 17.5px 21.0px,rgb(181,181,181) 21.0px 24.5px,rgb(174,174,174) 24.5px 28.0px,rgb(213,213,213) 28.0px 31.5px,rgb(201,201,201) 31.5px 35.0px,rgba(0,0,0,0) 35.0px 38.5px,rgb(169,169,169) 38.5px 42.0px,rgb(213,213,213) 42.0px 45.5px,rgb(169,169,169) 45.5px 49.0px,rgb(184,184,184) 49.0px 52.5px,rgb(214,214,214) 52.5px 56.0px,rgb(204,204,204) 56.0px 59.5px,rgb(201,201,201) 59.5px 63.0px,rgb(186,186,186) 63.0px 66.5px,rgb(174,174,174) 66.5px 70.0px,rgb(196,196,196) 70.0px 73.5px,rgb(170,170,170) 73.5px 77.0px,rgb(175,175,175) 77.0px 80.5px,rgb(184,184,184) 80.5px 84.0px,rgb(166,166,166) 84.0px 87.5px,rgb(184,184,184) 87.5px 89.0px)"></div>
<div class="t" style="left:1027px;top:93.5px;font-size:15.2px;color:#111;line-height:14px">TY</div>
<div class="a" style="left:1464px;top:95.8px;width:10.5px;height:1.4px;background:#7a7a7a"></div>
<div class="a" style="left:1464px;top:98.9px;width:10.5px;height:1.4px;background:#7a7a7a"></div>
<div class="a" style="left:1464px;top:102px;width:10.5px;height:1.4px;background:#7a7a7a"></div>
<div class="a" style="left:908.5px;top:132px;width:66px;height:26px;background:#f4f4f4;border:1px solid #d9d9d9;border-bottom:none;border-radius:4px 4px 0 0"></div>
<div class="t" style="left:917px;top:138.7px;font-size:10.3px;color:#333;">Vessel Info</div>
<div class="t" style="left:984.5px;top:138.7px;font-size:10.3px;color:#333;">Contact</div>
<div class="t" style="left:1038.5px;top:138.7px;font-size:10.3px;color:#333;">Map</div>
<div class="a" style="left:1364.5px;top:131.5px;width:79px;height:23px;background:#fff;border:1px solid #d6d6d6;border-bottom-color:#bfbfbf;border-radius:4px"></div>
<svg style="left:1373px;top:134px" width="17" height="17" viewBox="0 0 17 17" fill="none" stroke="#666" stroke-width="1.1" stroke-linecap="round"><g transform="rotate(-40 8.5 7.5)"><rect x="0.8" y="5.1" width="15.4" height="4.8" rx="1.2"/><circle cx="4.3" cy="7.5" r="1.2"/><circle cx="8.5" cy="7.5" r="1.2"/><circle cx="12.7" cy="7.5" r="1.2"/></g><path d="M10.2 14.6c1.7-.3 3.1-1.7 3.4-3.4M10.5 16.8c2.9-.4 5.2-2.7 5.6-5.6"/></svg>
<div class="t" style="left:1395px;top:137.0px;font-size:11.3px;color:#333;">AIS</div>
<div class="t" style="left:1415.5px;top:137.5px;font-size:9.8px;color:#e08a78;">Beta</div>
<div class="a" style="left:1447.5px;top:133.5px;width:21px;height:20px;background:#fff;border:1px solid #d6d6d6;border-bottom-color:#c4c4c4;border-radius:4px"></div>
<svg style="left:1452px;top:137px" width="14" height="14" viewBox="0 0 14 14" fill="none" stroke="#555" stroke-width="1.1" stroke-linecap="round"><path d="M9 5.5V1.5c0-.4-.3-.7-.7-.7H1.5c-.4 0-.7.3-.7.7v9.5c0 .4.3.7.7.7H5.5"/><path d="M2.8 3.5h4.5M2.8 5.8h3.5M2.8 8h2"/><circle cx="9.8" cy="9.8" r="2.8" fill="#555" stroke="none"/><path d="M9.8 8.4v1.5l.9.6" stroke="#fff" stroke-width=".9"/></svg>
<div class="a" style="left:1472.5px;top:133.5px;width:20px;height:20px;background:#fff;border:1px solid #d6d6d6;border-bottom-color:#c4c4c4;border-radius:4px"></div>
<svg style="left:1477.5px;top:137px" width="11" height="12" viewBox="0 0 11 12" fill="none" stroke="#555" stroke-width="1.1" stroke-linecap="round"><rect x=".6" y="1.8" width="9.8" height="9.8" rx="1.2"/><path d="M3 9.2l4.6-4.6M4.5 1.2h2"/></svg>
<div class="a" style="left:901px;top:157px;width:593px;height:313.5px;background:#fff;border:1px solid #dedede;border-radius:0 4px 4px 4px"></div>
<div class="a" style="left:909.5px;top:156.5px;width:64px;height:1.5px;background:#f4f4f4"></div>
<div class="a" style="left:1309px;top:167.5px;width:126px;height:21px;background:#fff;border:1px solid #d6d6d6;border-bottom-color:#c2c2c2;border-radius:4px"></div>
<div class="t" style="left:1317.5px;top:172.0px;font-size:10.3px;color:#333;">Save to Vessel Manager</div>
<div class="a" style="left:1444px;top:167.5px;width:33px;height:21px;background:#fff;border:1px solid #d6d6d6;border-bottom-color:#c2c2c2;border-radius:4px"></div>
<div class="t" style="left:1452px;top:172.0px;font-size:10.3px;color:#333;">Edit</div>
<svg style="left:919px;top:175px" width="12" height="12" viewBox="0 0 12 12" fill="none" stroke="#8a8a8a" stroke-width="1" stroke-linecap="round" stroke-linejoin="round"><rect x=".5" y=".5" width="11" height="11" rx="1.5"/><circle cx="3.5" cy="3.5" r=".5" fill="#8a8a8a"/><circle cx="8.5" cy="3.5" r=".5" fill="#8a8a8a"/><circle cx="3.5" cy="8.5" r=".5" fill="#8a8a8a"/><circle cx="8.5" cy="8.5" r=".5" fill="#8a8a8a"/></svg>
<div class="t" style="left:940px;top:173.8px;font-size:10.3px;color:#777;">DWT</div>
<div class="t" style="left:1013.5px;top:173.8px;font-size:10.3px;color:#333;">63,514</div>
<svg style="left:919.5px;top:199.5px" width="11" height="12" viewBox="0 0 11 12" fill="none" stroke="#8a8a8a" stroke-width="1" stroke-linecap="round" stroke-linejoin="round"><path d="M5.5 11.5C3 8.8 1 6.5 1 4.5a4.5 4.5 0 0 1 9 0c0 2-2 4.3-4.5 7z"/><circle cx="5.5" cy="4.6" r="1.5"/></svg>
<div class="t" style="left:940px;top:198.8px;font-size:10.3px;color:#777;">Open Area</div>
<div class="t" style="left:1013.5px;top:198.8px;font-size:10.3px;color:#333;">Gwangyang</div>
<svg style="left:919px;top:224px" width="12" height="12" viewBox="0 0 12 12" fill="none" stroke="#8a8a8a" stroke-width="1" stroke-linecap="round" stroke-linejoin="round"><rect x=".5" y="1.5" width="11" height="10" rx="1.5"/><path d="M.5 4.5h11M3.5 .5v2M8.5 .5v2"/></svg>
<div class="a" style="left:917.5px;top:294.5px;width:402px;height:163.5px;background:#fff;border:1px solid #d6d6d6;border-radius:4px"></div>
<div class="a" style="left:925px;top:320.5px;width:92.5px;height:40.5px;background:#fff;border:1px solid #d8d8d8;border-radius:3px"></div><div class="a" style="left:926px;top:321.5px;width:90.5px;height:20.0px;background:#f3f3f3"></div><div class="a" style="left:970.5px;top:321.5px;width:1px;height:38.5px;background:#dedede"></div><div class="a" style="left:926px;top:341.5px;width:90.5px;height:1px;background:#dedede"></div><div class="t" style="left:847.75px;width:200px;top:325.0px;font-size:10.3px;color:#444;text-align:center;">Ballast</div><div class="t" style="left:894.0px;width:200px;top:325.0px;font-size:10.3px;color:#444;text-align:center;">Laden</div><div class="t" style="right:536.5px;top:345.2px;font-size:10.3px;color:#444;text-align:right;">13.80</div><div class="t" style="right:489.5px;top:345.2px;font-size:10.3px;color:#444;text-align:right;">12.30</div>
<div class="a" style="left:1022px;top:320.5px;width:288px;height:63.0px;background:#fff;border:1px solid #d8d8d8;border-radius:3px"></div><div class="a" style="left:1023px;top:321.5px;width:286px;height:20.0px;background:#f3f3f3"></div><div class="a" style="left:1075px;top:321.5px;width:1px;height:61.0px;background:#dedede"></div><div class="a" style="left:1127.5px;top:321.5px;width:1px;height:61.0px;background:#dedede"></div><div class="a" style="left:1172.5px;top:321.5px;width:1px;height:61.0px;background:#dedede"></div><div class="a" style="left:1217.5px;top:321.5px;width:1px;height:61.0px;background:#dedede"></div><div class="a" style="left:1263.5px;top:321.5px;width:1px;height:61.0px;background:#dedede"></div><div class="a" style="left:1023px;top:341.5px;width:286px;height:1px;background:#dedede"></div><div class="a" style="left:1023px;top:362.5px;width:286px;height:1px;background:#dedede"></div><div class="t" style="left:948.5px;width:200px;top:325.0px;font-size:10.3px;color:#444;text-align:center;">Main</div><div class="t" style="left:1001.25px;width:200px;top:325.0px;font-size:10.3px;color:#444;text-align:center;">Type</div><div class="t" style="left:1050.0px;width:200px;top:325.0px;font-size:10.3px;color:#444;text-align:center;">Ballast</div><div class="t" style="left:1095.0px;width:200px;top:325.0px;font-size:10.3px;color:#444;text-align:center;">Laden</div><div class="t" style="left:1140.5px;width:200px;top:325.0px;font-size:10.3px;color:#444;text-align:center;">Idle</div><div class="t" style="left:1186.75px;width:200px;top:325.0px;font-size:10.3px;color:#444;text-align:center;">Work</div><div class="t" style="left:1027px;top:346.0px;font-size:10.3px;color:#444;">Normal</div><div class="t" style="left:1080px;top:346.0px;font-size:10.3px;color:#444;">Hsfo</div><div class="t" style="right:334.5px;top:346.0px;font-size:10.3px;color:#444;text-align:right;">26.70</div><div class="t" style="right:289.5px;top:346.0px;font-size:10.3px;color:#444;text-align:right;">26.70</div><div class="t" style="right:243.5px;top:346.0px;font-size:10.3px;color:#444;text-align:right;">3.50</div><div class="t" style="right:197px;top:346.0px;font-size:10.3px;color:#444;text-align:right;">5.00</div><div class="t" style="left:1027px;top:367.0px;font-size:10.3px;color:#444;">ECA</div><div class="t" style="left:1080px;top:367.0px;font-size:10.3px;color:#444;">Ulsfo</div><div class="t" style="right:334.5px;top:367.0px;font-size:10.3px;color:#444;text-align:right;">26.70</div><div class="t" style="right:289.5px;top:367.0px;font-size:10.3px;color:#444;text-align:right;">26.70</div><div class="t" style="right:243.5px;top:367.0px;font-size:10.3px;color:#444;text-align:right;">3.50</div><div class="t" style="right:197px;top:367.0px;font-size:10.3px;color:#444;text-align:right;">5.00</div>
<div class="a" style="left:1022px;top:387.5px;width:288px;height:63.0px;background:#fff;border:1px solid #d8d8d8;border-radius:3px"></div><div class="a" style="left:1023px;top:388.5px;width:286px;height:20.0px;background:#f3f3f3"></div><div class="a" style="left:1173.5px;top:409.5px;width:44.0px;height:20.0px;background:#eef2fd"></div><div class="a" style="left:1173.5px;top:430.5px;width:44.0px;height:20.0px;background:#eef2fd"></div><div class="a" style="left:1075px;top:388.5px;width:1px;height:61.0px;background:#dedede"></div><div class="a" style="left:1127.5px;top:388.5px;width:1px;height:61.0px;background:#dedede"></div><div class="a" style="left:1172.5px;top:388.5px;width:1px;height:61.0px;background:#dedede"></div><div class="a" style="left:1217.5px;top:388.5px;width:1px;height:61.0px;background:#dedede"></div><div class="a" style="left:1263.5px;top:388.5px;width:1px;height:61.0px;background:#dedede"></div><div class="a" style="left:1023px;top:408.5px;width:286px;height:1px;background:#dedede"></div><div class="a" style="left:1023px;top:429.5px;width:286px;height:1px;background:#dedede"></div><div class="t" style="left:948.5px;width:200px;top:392.0px;font-size:10.3px;color:#444;text-align:center;">Sub</div><div class="t" style="left:1001.25px;width:200px;top:392.0px;font-size:10.3px;color:#444;text-align:center;">Type</div><div class="t" style="left:1050.0px;width:200px;top:392.0px;font-size:10.3px;color:#444;text-align:center;">Sea</div><div class="t" style="left:1095.0px;width:200px;top:392.0px;font-size:10.3px;color:#444;text-align:center;"></div><div class="t" style="left:1140.5px;width:200px;top:392.0px;font-size:10.3px;color:#444;text-align:center;">Idle</div><div class="t" style="left:1186.75px;width:200px;top:392.0px;font-size:10.3px;color:#444;text-align:center;">Work</div><div class="t" style="left:1027px;top:413.0px;font-size:10.3px;color:#444;">Normal</div><div class="t" style="left:1080px;top:413.0px;font-size:10.3px;color:#444;">Mgo</div><div class="t" style="right:334.5px;top:413.0px;font-size:10.3px;color:#444;text-align:right;">0.10</div><div class="t" style="right:243.5px;top:413.0px;font-size:10.3px;color:#444;text-align:right;">0.10</div><div class="t" style="right:197px;top:413.0px;font-size:10.3px;color:#444;text-align:right;">0.10</div><div class="t" style="left:1027px;top:434.0px;font-size:10.3px;color:#444;">ECA</div><div class="t" style="left:1080px;top:434.0px;font-size:10.3px;color:#444;">Mgo</div><div class="t" style="right:334.5px;top:434.0px;font-size:10.3px;color:#444;text-align:right;">0.10</div><div class="t" style="right:243.5px;top:434.0px;font-size:10.3px;color:#444;text-align:right;">0.10</div><div class="t" style="right:197px;top:434.0px;font-size:10.3px;color:#444;text-align:right;">0.10</div>
<div class="a" style="left:901px;top:478px;width:593px;height:458px;background:#fff;border:1px solid #e6e6e6;border-radius:4px 4px 0 0"></div>
<div class="a" style="left:917px;top:489px;width:553px;height:436px;background:#dedede"></div>
<div class="a" style="left:1475.5px;top:523px;width:5px;height:62px;background:#555;border-radius:3px"></div>
<div class="t" style="left:920.5px;top:494.0px;font-size:10.5px;color:#1a1a1a;letter-spacing:-0.5px">MV</div>
<div class="a" style="left:934px;top:495.0px;width:7px;height:4.00px;background:linear-gradient(90deg,rgb(220,220,220) 0.0px 3.5px,rgb(218,218,218) 3.5px 7.0px)"></div><div class="a" style="left:934px;top:499.0px;width:7px;height:4.00px;background:linear-gradient(90deg,rgb(175,175,175) 0.0px 3.5px,rgb(180,180,180) 3.5px 7.0px)"></div><div class="a" style="left:934px;top:503.0px;width:7px;height:4.00px;background:linear-gradient(90deg,rgb(204,204,204) 0.0px 3.5px,rgb(198,198,198) 3.5px 7.0px)"></div>
<div class="a" style="left:941px;top:493px;width:76px;height:16px;background:#dca3a0;border:1px solid #d48c89"></div>
<div class="a" style="left:944px;top:495.0px;width:70px;height:4.00px;background:linear-gradient(90deg,rgba(187,187,187,0.5) 0.0px 3.8px,rgba(178,178,178,0.5) 3.8px 7.5px,rgba(193,193,193,0.5) 7.5px 11.2px,rgba(200,200,200,0.5) 11.2px 15.0px,rgba(179,179,179,0.5) 15.0px 18.8px,rgba(185,185,185,0.5) 18.8px 22.5px,rgba(193,193,193,0.5) 22.5px 26.2px,rgba(178,178,178,0.5) 26.2px 30.0px,rgba(170,170,170,0.5) 30.0px 33.8px,rgba(192,192,192,0.5) 33.8px 37.5px,rgba(199,199,199,0.5) 37.5px 41.2px,rgba(194,194,194,0.5) 41.2px 45.0px,rgba(191,191,191,0.5) 45.0px 48.8px,rgba(198,198,198,0.5) 48.8px 52.5px,rgba(190,190,190,0.5) 52.5px 56.2px,rgba(188,188,188,0.5) 56.2px 60.0px,rgba(180,180,180,0.5) 60.0px 63.8px,rgba(174,174,174,0.5) 63.8px 67.5px,rgba(188,188,188,0.5) 67.5px 70.0px)"></div><div class="a" style="left:944px;top:499.0px;width:70px;height:4.00px;background:linear-gradient(90deg,rgba(73,73,73,0.5) 0.0px 3.8px,rgba(102,102,102,0.5) 3.8px 7.5px,rgba(135,135,135,0.5) 7.5px 11.2px,rgba(129,129,129,0.5) 11.2px 15.0px,rgba(121,121,121,0.5) 15.0px 18.8px,rgba(87,87,87,0.5) 18.8px 22.5px,rgba(103,103,103,0.5) 22.5px 26.2px,rgba(105,105,105,0.5) 26.2px 30.0px,rgba(120,120,120,0.5) 30.0px 33.8px,rgba(101,101,101,0.5) 33.8px 37.5px,rgba(125,125,125,0.5) 37.5px 41.2px,rgba(148,148,148,0.5) 41.2px 45.0px,rgba(81,81,81,0.5) 45.0px 48.8px,rgba(123,123,123,0.5) 48.8px 52.5px,rgba(135,135,135,0.5) 52.5px 56.2px,rgba(99,99,99,0.5) 56.2px 60.0px,rgba(109,109,109,0.5) 60.0px 63.8px,rgba(152,152,152,0.5) 63.8px 67.5px,rgba(68,68,68,0.5) 67.5px 70.0px)"></div><div class="a" style="left:944px;top:503.0px;width:70px;height:4.00px;background:linear-gradient(90deg,rgba(167,167,167,0.5) 0.0px 3.8px,rgba(149,149,149,0.5) 3.8px 7.5px,rgba(177,177,177,0.5) 7.5px 11.2px,rgba(184,184,184,0.5) 11.2px 15.0px,rgba(165,165,165,0.5) 15.0px 18.8px,rgba(147,147,147,0.5) 18.8px 22.5px,rgba(168,168,168,0.5) 22.5px 26.2px,rgba(166,166,166,0.5) 26.2px 30.0px,rgba(174,174,174,0.5) 30.0px 33.8px,rgba(165,165,165,0.5) 33.8px 37.5px,rgba(171,171,171,0.5) 37.5px 41.2px,rgba(179,179,179,0.5) 41.2px 45.0px,rgba(166,166,166,0.5) 45.0px 48.8px,rgba(161,161,161,0.5) 48.8px 52.5px,rgba(185,185,185,0.5) 52.5px 56.2px,rgba(152,152,152,0.5) 56.2px 60.0px,rgba(173,173,173,0.5) 60.0px 63.8px,rgba(160,160,160,0.5) 63.8px 67.5px,rgba(176,176,176,0.5) 67.5px 70.0px)"></div>
<div class="a" style="left:1019px;top:495.0px;width:124px;height:4.00px;background:linear-gradient(90deg,rgb(213,213,213) 0.0px 3.8px,rgb(197,197,197) 3.8px 7.5px,rgb(202,202,202) 7.5px 11.2px,rgb(189,189,189) 11.2px 15.0px,rgb(190,190,190) 15.0px 18.8px,rgba(0,0,0,0) 18.8px 22.5px,rgb(224,224,224) 22.5px 26.2px,rgb(212,212,212) 26.2px 30.0px,rgb(214,214,214) 30.0px 33.8px,rgb(210,210,210) 33.8px 37.5px,rgb(191,191,191) 37.5px 41.2px,rgb(199,199,199) 41.2px 45.0px,rgb(203,203,203) 45.0px 48.8px,rgb(225,225,225) 48.8px 52.5px,rgb(226,226,226) 52.5px 56.2px,rgb(227,227,227) 56.2px 60.0px,rgba(0,0,0,0) 60.0px 63.8px,rgb(225,225,225) 63.8px 67.5px,rgb(205,205,205) 67.5px 71.2px,rgb(194,194,194) 71.2px 75.0px,rgb(224,224,224) 75.0px 78.8px,rgb(190,190,190) 78.8px 82.5px,rgb(219,219,219) 82.5px 86.2px,rgb(195,195,195) 86.2px 90.0px,rgb(213,213,213) 90.0px 93.8px,rgb(216,216,216) 93.8px 97.5px,rgba(0,0,0,0) 97.5px 101.2px,rgb(220,220,220) 101.2px 105.0px,rgb(193,193,193) 105.0px 108.8px,rgb(214,214,214) 108.8px 112.5px,rgb(220,220,220) 112.5px 116.2px,rgb(219,219,219) 116.2px 120.0px,rgb(204,204,204) 120.0px 123.8px,rgb(227,227,227) 123.8px 124.0px)"></div><div class="a" style="left:1019px;top:499.0px;width:124px;height:4.00px;background:linear-gradient(90deg,rgb(180,180,180) 0.0px 3.8px,rgb(171,171,171) 3.8px 7.5px,rgb(182,182,182) 7.5px 11.2px,rgb(157,157,157) 11.2px 15.0px,rgb(182,182,182) 15.0px 18.8px,rgba(0,0,0,0) 18.8px 22.5px,rgb(138,138,138) 22.5px 26.2px,rgb(176,176,176) 26.2px 30.0px,rgb(174,174,174) 30.0px 33.8px,rgb(198,198,198) 33.8px 37.5px,rgb(174,174,174) 37.5px 41.2px,rgb(158,158,158) 41.2px 45.0px,rgb(184,184,184) 45.0px 48.8px,rgb(183,183,183) 48.8px 52.5px,rgb(148,148,148) 52.5px 56.2px,rgb(172,172,172) 56.2px 60.0px,rgba(0,0,0,0) 60.0px 63.8px,rgb(145,145,145) 63.8px 67.5px,rgb(158,158,158) 67.5px 71.2px,rgb(169,169,169) 71.2px 75.0px,rgb(126,126,126) 75.0px 78.8px,rgb(191,191,191) 78.8px 82.5px,rgb(132,132,132) 82.5px 86.2px,rgb(144,144,144) 86.2px 90.0px,rgb(150,150,150) 90.0px 93.8px,rgb(126,126,126) 93.8px 97.5px,rgba(0,0,0,0) 97.5px 101.2px,rgb(165,165,165) 101.2px 105.0px,rgb(145,145,145) 105.0px 108.8px,rgb(195,195,195) 108.8px 112.5px,rgb(162,162,162) 112.5px 116.2px,rgb(147,147,147) 116.2px 120.0px,rgb(166,166,166) 120.0px 123.8px,rgb(172,172,172) 123.8px 124.0px)"></div><div class="a" style="left:1019px;top:503.0px;width:124px;height:4.00px;background:linear-gradient(90deg,rgb(184,184,184) 0.0px 3.8px,rgb(178,178,178) 3.8px 7.5px,rgb(187,187,187) 7.5px 11.2px,rgb(200,200,200) 11.2px 15.0px,rgb(199,199,199) 15.0px 18.8px,rgba(0,0,0,0) 18.8px 22.5px,rgb(210,210,210) 22.5px 26.2px,rgb(183,183,183) 26.2px 30.0px,rgb(194,194,194) 30.0px 33.8px,rgb(207,207,207) 33.8px 37.5px,rgb(184,184,184) 37.5px 41.2px,rgb(192,192,192) 41.2px 45.0px,rgb(197,197,197) 45.0px 48.8px,rgb(200,200,200) 48.8px 52.5px,rgb(203,203,203) 52.5px 56.2px,rgb(215,215,215) 56.2px 60.0px,rgba(0,0,0,0) 60.0px 63.8px,rgb(179,179,179) 63.8px 67.5px,rgb(212,212,212) 67.5px 71.2px,rgb(198,198,198) 71.2px 75.0px,rgb(201,201,201) 75.0px 78.8px,rgb(187,187,187) 78.8px 82.5px,rgb(195,195,195) 82.5px 86.2px,rgb(184,184,184) 86.2px 90.0px,rgb(179,179,179) 90.0px 93.8px,rgb(209,209,209) 93.8px 97.5px,rgba(0,0,0,0) 97.5px 101.2px,rgb(202,202,202) 101.2px 105.0px,rgb(180,180,180) 105.0px 108.8px,rgb(180,180,180) 108.8px 112.5px,rgb(192,192,192) 112.5px 116.2px,rgb(209,209,209) 116.2px 120.0px,rgb(195,195,195) 120.0px 123.8px,rgb(198,198,198) 123.8px 124.0px)"></div>
<div class="a" style="left:1143.5px;top:493px;width:113px;height:16px;background:#c0dca6;border:1px solid #a8d08a"></div>
<div class="a" style="left:1147px;top:495.0px;width:106px;height:4.00px;background:linear-gradient(90deg,rgba(181,181,181,0.5) 0.0px 3.8px,rgba(200,200,200,0.5) 3.8px 7.5px,rgba(191,191,191,0.5) 7.5px 11.2px,rgba(171,171,171,0.5) 11.2px 15.0px,rgba(167,167,167,0.5) 15.0px 18.8px,rgba(186,186,186,0.5) 18.8px 22.5px,rgba(193,193,193,0.5) 22.5px 26.2px,rgba(167,167,167,0.5) 26.2px 30.0px,rgba(174,174,174,0.5) 30.0px 33.8px,rgba(191,191,191,0.5) 33.8px 37.5px,rgba(182,182,182,0.5) 37.5px 41.2px,rgba(173,173,173,0.5) 41.2px 45.0px,rgba(180,180,180,0.5) 45.0px 48.8px,rgba(179,179,179,0.5) 48.8px 52.5px,rgba(204,204,204,0.5) 52.5px 56.2px,rgba(190,190,190,0.5) 56.2px 60.0px,rgba(168,168,168,0.5) 60.0px 63.8px,rgba(176,176,176,0.5) 63.8px 67.5px,rgba(189,189,189,0.5) 67.5px 71.2px,rgba(160,160,160,0.5) 71.2px 75.0px,rgba(162,162,162,0.5) 75.0px 78.8px,rgba(193,193,193,0.5) 78.8px 82.5px,rgba(204,204,204,0.5) 82.5px 86.2px,rgba(196,196,196,0.5) 86.2px 90.0px,rgba(164,164,164,0.5) 90.0px 93.8px,rgba(181,181,181,0.5) 93.8px 97.5px,rgba(194,194,194,0.5) 97.5px 101.2px,rgba(166,166,166,0.5) 101.2px 105.0px,rgba(169,169,169,0.5) 105.0px 106.0px)"></div><div class="a" style="left:1147px;top:499.0px;width:106px;height:4.00px;background:linear-gradient(90deg,rgba(102,102,102,0.5) 0.0px 3.8px,rgba(76,76,76,0.5) 3.8px 7.5px,rgba(73,73,73,0.5) 7.5px 11.2px,rgba(124,124,124,0.5) 11.2px 15.0px,rgba(95,95,95,0.5) 15.0px 18.8px,rgba(135,135,135,0.5) 18.8px 22.5px,rgba(114,114,114,0.5) 22.5px 26.2px,rgba(147,147,147,0.5) 26.2px 30.0px,rgba(90,90,90,0.5) 30.0px 33.8px,rgba(95,95,95,0.5) 33.8px 37.5px,rgba(87,87,87,0.5) 37.5px 41.2px,rgba(69,69,69,0.5) 41.2px 45.0px,rgba(91,91,91,0.5) 45.0px 48.8px,rgba(96,96,96,0.5) 48.8px 52.5px,rgba(109,109,109,0.5) 52.5px 56.2px,rgba(95,95,95,0.5) 56.2px 60.0px,rgba(153,153,153,0.5) 60.0px 63.8px,rgba(143,143,143,0.5) 63.8px 67.5px,rgba(96,96,96,0.5) 67.5px 71.2px,rgba(83,83,83,0.5) 71.2px 75.0px,rgba(109,109,109,0.5) 75.0px 78.8px,rgba(75,75,75,0.5) 78.8px 82.5px,rgba(82,82,82,0.5) 82.5px 86.2px,rgba(129,129,129,0.5) 86.2px 90.0px,rgba(76,76,76,0.5) 90.0px 93.8px,rgba(152,152,152,0.5) 93.8px 97.5px,rgba(72,72,72,0.5) 97.5px 101.2px,rgba(154,154,154,0.5) 101.2px 105.0px,rgba(100,100,100,0.5) 105.0px 106.0px)"></div><div class="a" style="left:1147px;top:503.0px;width:106px;height:4.00px;background:linear-gradient(90deg,rgba(167,167,167,0.5) 0.0px 3.8px,rgba(160,160,160,0.5) 3.8px 7.5px,rgba(168,168,168,0.5) 7.5px 11.2px,rgba(160,160,160,0.5) 11.2px 15.0px,rgba(147,147,147,0.5) 15.0px 18.8px,rgba(144,144,144,0.5) 18.8px 22.5px,rgba(179,179,179,0.5) 22.5px 26.2px,rgba(163,163,163,0.5) 26.2px 30.0px,rgba(177,177,177,0.5) 30.0px 33.8px,rgba(145,145,145,0.5) 33.8px 37.5px,rgba(165,165,165,0.5) 37.5px 41.2px,rgba(167,167,167,0.5) 41.2px 45.0px,rgba(159,159,159,0.5) 45.0px 48.8px,rgba(149,149,149,0.5) 48.8px 52.5px,rgba(172,172,172,0.5) 52.5px 56.2px,rgba(173,173,173,0.5) 56.2px 60.0px,rgba(182,182,182,0.5) 60.0px 63.8px,rgba(146,146,146,0.5) 63.8px 67.5px,rgba(144,144,144,0.5) 67.5px 71.2px,rgba(171,171,171,0.5) 71.2px 75.0px,rgba(170,170,170,0.5) 75.0px 78.8px,rgba(150,150,150,0.5) 78.8px 82.5px,rgba(172,172,172,0.5) 82.5px 86.2px,rgba(181,181,181,0.5) 86.2px 90.0px,rgba(161,161,161,0.5) 90.0px 93.8px,rgba(147,147,147,0.5) 93.8px 97.5px,rgba(184,184,184,0.5) 97.5px 101.2px,rgba(143,143,143,0.5) 101.2px 105.0px,rgba(181,181,181,0.5) 105.0px 106.0px)"></div>
<div class="a" style="left:1259px;top:495.0px;width:19px;height:4.00px;background:linear-gradient(90deg,rgb(196,196,196) 0.0px 3.8px,rgb(201,201,201) 3.8px 7.5px,rgb(213,213,213) 7.5px 11.2px,rgb(218,218,218) 11.2px 15.0px,rgb(198,198,198) 15.0px 18.8px,rgb(193,193,193) 18.8px 19.0px)"></div><div class="a" style="left:1259px;top:499.0px;width:19px;height:4.00px;background:linear-gradient(90deg,rgb(131,131,131) 0.0px 3.8px,rgb(163,163,163) 3.8px 7.5px,rgb(164,164,164) 7.5px 11.2px,rgb(184,184,184) 11.2px 15.0px,rgb(159,159,159) 15.0px 18.8px,rgb(161,161,161) 18.8px 19.0px)"></div><div class="a" style="left:1259px;top:503.0px;width:19px;height:4.00px;background:linear-gradient(90deg,rgb(205,205,205) 0.0px 3.8px,rgb(204,204,204) 3.8px 7.5px,rgb(193,193,193) 7.5px 11.2px,rgb(201,201,201) 11.2px 15.0px,rgb(193,193,193) 15.0px 18.8px,rgb(183,183,183) 18.8px 19.0px)"></div>
<div class="a" style="left:1278.5px;top:493px;width:124px;height:16px;background:#d0c2e2;border:1px solid #bfaad8"></div>
<div class="a" style="left:1282px;top:495.0px;width:118px;height:4.00px;background:linear-gradient(90deg,rgba(190,190,190,0.5) 0.0px 3.8px,rgba(186,186,186,0.5) 3.8px 7.5px,rgba(204,204,204,0.5) 7.5px 11.2px,rgba(189,189,189,0.5) 11.2px 15.0px,rgba(166,166,166,0.5) 15.0px 18.8px,rgba(194,194,194,0.5) 18.8px 22.5px,rgba(184,184,184,0.5) 22.5px 26.2px,rgba(163,163,163,0.5) 26.2px 30.0px,rgba(181,181,181,0.5) 30.0px 33.8px,rgba(200,200,200,0.5) 33.8px 37.5px,rgba(188,188,188,0.5) 37.5px 41.2px,rgba(179,179,179,0.5) 41.2px 45.0px,rgba(160,160,160,0.5) 45.0px 48.8px,rgba(190,190,190,0.5) 48.8px 52.5px,rgba(204,204,204,0.5) 52.5px 56.2px,rgba(198,198,198,0.5) 56.2px 60.0px,rgba(169,169,169,0.5) 60.0px 63.8px,rgba(165,165,165,0.5) 63.8px 67.5px,rgba(181,181,181,0.5) 67.5px 71.2px,rgba(172,172,172,0.5) 71.2px 75.0px,rgba(185,185,185,0.5) 75.0px 78.8px,rgba(180,180,180,0.5) 78.8px 82.5px,rgba(193,193,193,0.5) 82.5px 86.2px,rgba(201,201,201,0.5) 86.2px 90.0px,rgba(176,176,176,0.5) 90.0px 93.8px,rgba(193,193,193,0.5) 93.8px 97.5px,rgba(191,191,191,0.5) 97.5px 101.2px,rgba(166,166,166,0.5) 101.2px 105.0px,rgba(194,194,194,0.5) 105.0px 108.8px,rgba(173,173,173,0.5) 108.8px 112.5px,rgba(185,185,185,0.5) 112.5px 116.2px,rgba(182,182,182,0.5) 116.2px 118.0px)"></div><div class="a" style="left:1282px;top:499.0px;width:118px;height:4.00px;background:linear-gradient(90deg,rgba(125,125,125,0.5) 0.0px 3.8px,rgba(145,145,145,0.5) 3.8px 7.5px,rgba(147,147,147,0.5) 7.5px 11.2px,rgba(69,69,69,0.5) 11.2px 15.0px,rgba(67,67,67,0.5) 15.0px 18.8px,rgba(70,70,70,0.5) 18.8px 22.5px,rgba(144,144,144,0.5) 22.5px 26.2px,rgba(126,126,126,0.5) 26.2px 30.0px,rgba(120,120,120,0.5) 30.0px 33.8px,rgba(100,100,100,0.5) 33.8px 37.5px,rgba(93,93,93,0.5) 37.5px 41.2px,rgba(119,119,119,0.5) 41.2px 45.0px,rgba(151,151,151,0.5) 45.0px 48.8px,rgba(140,140,140,0.5) 48.8px 52.5px,rgba(119,119,119,0.5) 52.5px 56.2px,rgba(93,93,93,0.5) 56.2px 60.0px,rgba(150,150,150,0.5) 60.0px 63.8px,rgba(130,130,130,0.5) 63.8px 67.5px,rgba(107,107,107,0.5) 67.5px 71.2px,rgba(79,79,79,0.5) 71.2px 75.0px,rgba(151,151,151,0.5) 75.0px 78.8px,rgba(75,75,75,0.5) 78.8px 82.5px,rgba(150,150,150,0.5) 82.5px 86.2px,rgba(79,79,79,0.5) 86.2px 90.0px,rgba(137,137,137,0.5) 90.0px 93.8px,rgba(107,107,107,0.5) 93.8px 97.5px,rgba(135,135,135,0.5) 97.5px 101.2px,rgba(105,105,105,0.5) 101.2px 105.0px,rgba(89,89,89,0.5) 105.0px 108.8px,rgba(132,132,132,0.5) 108.8px 112.5px,rgba(95,95,95,0.5) 112.5px 116.2px,rgba(90,90,90,0.5) 116.2px 118.0px)"></div><div class="a" style="left:1282px;top:503.0px;width:118px;height:4.00px;background:linear-gradient(90deg,rgba(170,170,170,0.5) 0.0px 3.8px,rgba(171,171,171,0.5) 3.8px 7.5px,rgba(178,178,178,0.5) 7.5px 11.2px,rgba(169,169,169,0.5) 11.2px 15.0px,rgba(181,181,181,0.5) 15.0px 18.8px,rgba(175,175,175,0.5) 18.8px 22.5px,rgba(143,143,143,0.5) 22.5px 26.2px,rgba(149,149,149,0.5) 26.2px 30.0px,rgba(180,180,180,0.5) 30.0px 33.8px,rgba(168,168,168,0.5) 33.8px 37.5px,rgba(186,186,186,0.5) 37.5px 41.2px,rgba(153,153,153,0.5) 41.2px 45.0px,rgba(160,160,160,0.5) 45.0px 48.8px,rgba(159,159,159,0.5) 48.8px 52.5px,rgba(177,177,177,0.5) 52.5px 56.2px,rgba(153,153,153,0.5) 56.2px 60.0px,rgba(162,162,162,0.5) 60.0px 63.8px,rgba(173,173,173,0.5) 63.8px 67.5px,rgba(157,157,157,0.5) 67.5px 71.2px,rgba(154,154,154,0.5) 71.2px 75.0px,rgba(149,149,149,0.5) 75.0px 78.8px,rgba(184,184,184,0.5) 78.8px 82.5px,rgba(176,176,176,0.5) 82.5px 86.2px,rgba(177,177,177,0.5) 86.2px 90.0px,rgba(155,155,155,0.5) 90.0px 93.8px,rgba(148,148,148,0.5) 93.8px 97.5px,rgba(182,182,182,0.5) 97.5px 101.2px,rgba(187,187,187,0.5) 101.2px 105.0px,rgba(149,149,149,0.5) 105.0px 108.8px,rgba(186,186,186,0.5) 108.8px 112.5px,rgba(178,178,178,0.5) 112.5px 116.2px,rgba(167,167,167,0.5) 116.2px 118.0px)"></div>
<div class="t" style="left:920.5px;top:530.5px;font-size:10.5px;color:#1a1a1a;letter-spacing:-0.5px">- B</div>
<div class="a" style="left:934px;top:531.5px;width:277px;height:4.00px;background:linear-gradient(90deg,rgb(214,214,214) 0.0px 3.8px,rgb(211,211,211) 3.8px 7.5px,rgb(221,221,221) 7.5px 11.2px,rgb(194,194,194) 11.2px 15.0px,rgb(184,184,184) 15.0px 18.8px,rgb(198,198,198) 18.8px 22.5px,rgb(210,210,210) 22.5px 26.2px,rgb(219,219,219) 26.2px 30.0px,rgba(0,0,0,0) 30.0px 33.8px,rgb(205,205,205) 33.8px 37.5px,rgb(182,182,182) 37.5px 41.2px,rgb(197,197,197) 41.2px 45.0px,rgb(204,204,204) 45.0px 48.8px,rgb(203,203,203) 48.8px 52.5px,rgb(196,196,196) 52.5px 56.2px,rgb(185,185,185) 56.2px 60.0px,rgba(0,0,0,0) 60.0px 63.8px,rgb(198,198,198) 63.8px 67.5px,rgb(203,203,203) 67.5px 71.2px,rgb(192,192,192) 71.2px 75.0px,rgb(215,215,215) 75.0px 78.8px,rgb(195,195,195) 78.8px 82.5px,rgb(202,202,202) 82.5px 86.2px,rgb(190,190,190) 86.2px 90.0px,rgb(191,191,191) 90.0px 93.8px,rgb(186,186,186) 93.8px 97.5px,rgba(0,0,0,0) 97.5px 101.2px,rgb(214,214,214) 101.2px 105.0px,rgb(194,194,194) 105.0px 108.8px,rgb(205,205,205) 108.8px 112.5px,rgb(196,196,196) 112.5px 116.2px,rgb(213,213,213) 116.2px 120.0px,rgba(0,0,0,0) 120.0px 123.8px,rgb(216,216,216) 123.8px 127.5px,rgb(192,192,192) 127.5px 131.2px,rgb(219,219,219) 131.2px 135.0px,rgb(202,202,202) 135.0px 138.8px,rgb(217,217,217) 138.8px 142.5px,rgb(197,197,197) 142.5px 146.2px,rgb(201,201,201) 146.2px 150.0px,rgb(185,185,185) 150.0px 153.8px,rgb(195,195,195) 153.8px 157.5px,rgba(0,0,0,0) 157.5px 161.2px,rgb(183,183,183) 161.2px 165.0px,rgb(193,193,193) 165.0px 168.8px,rgb(206,206,206) 168.8px 172.5px,rgb(186,186,186) 172.5px 176.2px,rgb(190,190,190) 176.2px 180.0px,rgb(217,217,217) 180.0px 183.8px,rgb(205,205,205) 183.8px 187.5px,rgb(205,205,205) 187.5px 191.2px,rgb(191,191,191) 191.2px 195.0px,rgba(0,0,0,0) 195.0px 198.8px,rgb(219,219,219) 198.8px 202.5px,rgb(193,193,193) 202.5px 206.2px,rgb(186,186,186) 206.2px 210.0px,rgb(200,200,200) 210.0px 213.8px,rgb(206,206,206) 213.8px 217.5px,rgb(206,206,206) 217.5px 221.2px,rgb(187,187,187) 221.2px 225.0px,rgb(216,216,216) 225.0px 228.8px,rgba(0,0,0,0) 228.8px 232.5px,rgb(196,196,196) 232.5px 236.2px,rgb(222,222,222) 236.2px 240.0px,rgb(197,197,197) 240.0px 243.8px,rgb(183,183,183) 243.8px 247.5px,rgb(183,183,183) 247.5px 251.2px,rgb(197,197,197) 251.2px 255.0px,rgb(210,210,210) 255.0px 258.8px,rgb(201,201,201) 258.8px 262.5px,rgba(0,0,0,0) 262.5px 266.2px,rgb(216,216,216) 266.2px 270.0px,rgb(218,218,218) 270.0px 273.8px,rgb(217,217,217) 273.8px 277.0px)"></div><div class="a" style="left:934px;top:535.5px;width:277px;height:4.00px;background:linear-gradient(90deg,rgb(161,161,161) 0.0px 3.8px,rgb(183,183,183) 3.8px 7.5px,rgb(166,166,166) 7.5px 11.2px,rgb(117,117,117) 11.2px 15.0px,rgb(135,135,135) 15.0px 18.8px,rgb(128,128,128) 18.8px 22.5px,rgb(117,117,117) 22.5px 26.2px,rgb(183,183,183) 26.2px 30.0px,rgba(0,0,0,0) 30.0px 33.8px,rgb(150,150,150) 33.8px 37.5px,rgb(124,124,124) 37.5px 41.2px,rgb(177,177,177) 41.2px 45.0px,rgb(139,139,139) 45.0px 48.8px,rgb(128,128,128) 48.8px 52.5px,rgb(167,167,167) 52.5px 56.2px,rgb(123,123,123) 56.2px 60.0px,rgba(0,0,0,0) 60.0px 63.8px,rgb(185,185,185) 63.8px 67.5px,rgb(185,185,185) 67.5px 71.2px,rgb(114,114,114) 71.2px 75.0px,rgb(154,154,154) 75.0px 78.8px,rgb(112,112,112) 78.8px 82.5px,rgb(183,183,183) 82.5px 86.2px,rgb(130,130,130) 86.2px 90.0px,rgb(151,151,151) 90.0px 93.8px,rgb(169,169,169) 93.8px 97.5px,rgba(0,0,0,0) 97.5px 101.2px,rgb(170,170,170) 101.2px 105.0px,rgb(148,148,148) 105.0px 108.8px,rgb(118,118,118) 108.8px 112.5px,rgb(135,135,135) 112.5px 116.2px,rgb(110,110,110) 116.2px 120.0px,rgba(0,0,0,0) 120.0px 123.8px,rgb(125,125,125) 123.8px 127.5px,rgb(169,169,169) 127.5px 131.2px,rgb(157,157,157) 131.2px 135.0px,rgb(145,145,145) 135.0px 138.8px,rgb(162,162,162) 138.8px 142.5px,rgb(147,147,147) 142.5px 146.2px,rgb(139,139,139) 146.2px 150.0px,rgb(141,141,141) 150.0px 153.8px,rgb(139,139,139) 153.8px 157.5px,rgba(0,0,0,0) 157.5px 161.2px,rgb(140,140,140) 161.2px 165.0px,rgb(145,145,145) 165.0px 168.8px,rgb(174,174,174) 168.8px 172.5px,rgb(183,183,183) 172.5px 176.2px,rgb(181,181,181) 176.2px 180.0px,rgb(147,147,147) 180.0px 183.8px,rgb(183,183,183) 183.8px 187.5px,rgb(173,173,173) 187.5px 191.2px,rgb(122,122,122) 191.2px 195.0px,rgba(0,0,0,0) 195.0px 198.8px,rgb(176,176,176) 198.8px 202.5px,rgb(116,116,116) 202.5px 206.2px,rgb(159,159,159) 206.2px 210.0px,rgb(139,139,139) 210.0px 213.8px,rgb(169,169,169) 213.8px 217.5px,rgb(172,172,172) 217.5px 221.2px,rgb(186,186,186) 221.2px 225.0px,rgb(184,184,184) 225.0px 228.8px,rgba(0,0,0,0) 228.8px 232.5px,rgb(140,140,140) 232.5px 236.2px,rgb(111,111,111) 236.2px 240.0px,rgb(116,116,116) 240.0px 243.8px,rgb(187,187,187) 243.8px 247.5px,rgb(135,135,135) 247.5px 251.2px,rgb(128,128,128) 251.2px 255.0px,rgb(119,119,119) 255.0px 258.8px,rgb(139,139,139) 258.8px 262.5px,rgba(0,0,0,0) 262.5px 266.2px,rgb(136,136,136) 266.2px 270.0px,rgb(168,168,168) 270.0px 273.8px,rgb(124,124,124) 273.8px 277.0px)"></div><div class="a" style="left:934px;top:539.5px;width:277px;height:4.00px;background:linear-gradient(90deg,rgb(187,187,187) 0.0px 3.8px,rgb(205,205,205) 3.8px 7.5px,rgb(187,187,187) 7.5px 11.2px,rgb(175,175,175) 11.2px 15.0px,rgb(186,186,186) 15.0px 18.8px,rgb(179,179,179) 18.8px 22.5px,rgb(170,170,170) 22.5px 26.2px,rgb(192,192,192) 26.2px 30.0px,rgba(0,0,0,0) 30.0px 33.8px,rgb(181,181,181) 33.8px 37.5px,rgb(202,202,202) 37.5px 41.2px,rgb(180,180,180) 41.2px 45.0px,rgb(174,174,174) 45.0px 48.8px,rgb(188,188,188) 48.8px 52.5px,rgb(189,189,189) 52.5px 56.2px,rgb(176,176,176) 56.2px 60.0px,rgba(0,0,0,0) 60.0px 63.8px,rgb(190,190,190) 63.8px 67.5px,rgb(195,195,195) 67.5px 71.2px,rgb(201,201,201) 71.2px 75.0px,rgb(206,206,206) 75.0px 78.8px,rgb(192,192,192) 78.8px 82.5px,rgb(203,203,203) 82.5px 86.2px,rgb(174,174,174) 86.2px 90.0px,rgb(200,200,200) 90.0px 93.8px,rgb(208,208,208) 93.8px 97.5px,rgba(0,0,0,0) 97.5px 101.2px,rgb(187,187,187) 101.2px 105.0px,rgb(180,180,180) 105.0px 108.8px,rgb(179,179,179) 108.8px 112.5px,rgb(179,179,179) 112.5px 116.2px,rgb(185,185,185) 116.2px 120.0px,rgba(0,0,0,0) 120.0px 123.8px,rgb(186,186,186) 123.8px 127.5px,rgb(176,176,176) 127.5px 131.2px,rgb(203,203,203) 131.2px 135.0px,rgb(209,209,209) 135.0px 138.8px,rgb(175,175,175) 138.8px 142.5px,rgb(195,195,195) 142.5px 146.2px,rgb(187,187,187) 146.2px 150.0px,rgb(190,190,190) 150.0px 153.8px,rgb(190,190,190) 153.8px 157.5px,rgba(0,0,0,0) 157.5px 161.2px,rgb(187,187,187) 161.2px 165.0px,rgb(201,201,201) 165.0px 168.8px,rgb(207,207,207) 168.8px 172.5px,rgb(181,181,181) 172.5px 176.2px,rgb(184,184,184) 176.2px 180.0px,rgb(171,171,171) 180.0px 183.8px,rgb(186,186,186) 183.8px 187.5px,rgb(180,180,180) 187.5px 191.2px,rgb(177,177,177) 191.2px 195.0px,rgba(0,0,0,0) 195.0px 198.8px,rgb(203,203,203) 198.8px 202.5px,rgb(190,190,190) 202.5px 206.2px,rgb(179,179,179) 206.2px 210.0px,rgb(176,176,176) 210.0px 213.8px,rgb(193,193,193) 213.8px 217.5px,rgb(203,203,203) 217.5px 221.2px,rgb(205,205,205) 221.2px 225.0px,rgb(199,199,199) 225.0px 228.8px,rgba(0,0,0,0) 228.8px 232.5px,rgb(200,200,200) 232.5px 236.2px,rgb(176,176,176) 236.2px 240.0px,rgb(175,175,175) 240.0px 243.8px,rgb(196,196,196) 243.8px 247.5px,rgb(195,195,195) 247.5px 251.2px,rgb(177,177,177) 251.2px 255.0px,rgb(182,182,182) 255.0px 258.8px,rgb(170,170,170) 258.8px 262.5px,rgba(0,0,0,0) 262.5px 266.2px,rgb(197,197,197) 266.2px 270.0px,rgb(190,190,190) 270.0px 273.8px,rgb(203,203,203) 273.8px 277.0px)"></div>
<div class="t" style="left:920.5px;top:566.0px;font-size:10.5px;color:#1a1a1a;letter-spacing:-0.5px">- B</div>
<div class="a" style="left:934px;top:567.5px;width:289px;height:4.00px;background:linear-gradient(90deg,rgb(218,218,218) 0.0px 3.8px,rgb(201,201,201) 3.8px 7.5px,rgb(217,217,217) 7.5px 11.2px,rgb(193,193,193) 11.2px 15.0px,rgb(189,189,189) 15.0px 18.8px,rgba(0,0,0,0) 18.8px 22.5px,rgb(215,215,215) 22.5px 26.2px,rgb(197,197,197) 26.2px 30.0px,rgb(189,189,189) 30.0px 33.8px,rgb(197,197,197) 33.8px 37.5px,rgb(206,206,206) 37.5px 41.2px,rgb(182,182,182) 41.2px 45.0px,rgb(203,203,203) 45.0px 48.8px,rgb(200,200,200) 48.8px 52.5px,rgb(203,203,203) 52.5px 56.2px,rgba(0,0,0,0) 56.2px 60.0px,rgb(187,187,187) 60.0px 63.8px,rgb(211,211,211) 63.8px 67.5px,rgb(215,215,215) 67.5px 71.2px,rgb(217,217,217) 71.2px 75.0px,rgb(195,195,195) 75.0px 78.8px,rgb(210,210,210) 78.8px 82.5px,rgb(197,197,197) 82.5px 86.2px,rgba(0,0,0,0) 86.2px 90.0px,rgb(212,212,212) 90.0px 93.8px,rgb(184,184,184) 93.8px 97.5px,rgb(217,217,217) 97.5px 101.2px,rgb(220,220,220) 101.2px 105.0px,rgb(202,202,202) 105.0px 108.8px,rgb(203,203,203) 108.8px 112.5px,rgb(203,203,203) 112.5px 116.2px,rgba(0,0,0,0) 116.2px 120.0px,rgb(203,203,203) 120.0px 123.8px,rgb(183,183,183) 123.8px 127.5px,rgb(221,221,221) 127.5px 131.2px,rgb(191,191,191) 131.2px 135.0px,rgb(189,189,189) 135.0px 138.8px,rgb(186,186,186) 138.8px 142.5px,rgb(192,192,192) 142.5px 146.2px,rgba(0,0,0,0) 146.2px 150.0px,rgb(215,215,215) 150.0px 153.8px,rgb(183,183,183) 153.8px 157.5px,rgb(186,186,186) 157.5px 161.2px,rgb(210,210,210) 161.2px 165.0px,rgb(190,190,190) 165.0px 168.8px,rgb(183,183,183) 168.8px 172.5px,rgb(206,206,206) 172.5px 176.2px,rgb(205,205,205) 176.2px 180.0px,rgb(203,203,203) 180.0px 183.8px,rgb(210,210,210) 183.8px 187.5px,rgba(0,0,0,0) 187.5px 191.2px,rgb(186,186,186) 191.2px 195.0px,rgb(217,217,217) 195.0px 198.8px,rgb(211,211,211) 198.8px 202.5px,rgb(184,184,184) 202.5px 206.2px,rgb(187,187,187) 206.2px 210.0px,rgb(202,202,202) 210.0px 213.8px,rgb(202,202,202) 213.8px 217.5px,rgb(193,193,193) 217.5px 221.2px,rgba(0,0,0,0) 221.2px 225.0px,rgb(187,187,187) 225.0px 228.8px,rgb(198,198,198) 228.8px 232.5px,rgb(187,187,187) 232.5px 236.2px,rgb(206,206,206) 236.2px 240.0px,rgb(216,216,216) 240.0px 243.8px,rgba(0,0,0,0) 243.8px 247.5px,rgb(188,188,188) 247.5px 251.2px,rgb(205,205,205) 251.2px 255.0px,rgb(212,212,212) 255.0px 258.8px,rgb(189,189,189) 258.8px 262.5px,rgb(215,215,215) 262.5px 266.2px,rgba(0,0,0,0) 266.2px 270.0px,rgb(220,220,220) 270.0px 273.8px,rgb(198,198,198) 273.8px 277.5px,rgb(199,199,199) 277.5px 281.2px,rgb(216,216,216) 281.2px 285.0px,rgb(203,203,203) 285.0px 288.8px,rgb(198,198,198) 288.8px 289.0px)"></div><div class="a" style="left:934px;top:571.5px;width:289px;height:4.00px;background:linear-gradient(90deg,rgb(185,185,185) 0.0px 3.8px,rgb(172,172,172) 3.8px 7.5px,rgb(137,137,137) 7.5px 11.2px,rgb(129,129,129) 11.2px 15.0px,rgb(136,136,136) 15.0px 18.8px,rgba(0,0,0,0) 18.8px 22.5px,rgb(144,144,144) 22.5px 26.2px,rgb(188,188,188) 26.2px 30.0px,rgb(174,174,174) 30.0px 33.8px,rgb(183,183,183) 33.8px 37.5px,rgb(175,175,175) 37.5px 41.2px,rgb(177,177,177) 41.2px 45.0px,rgb(114,114,114) 45.0px 48.8px,rgb(151,151,151) 48.8px 52.5px,rgb(186,186,186) 52.5px 56.2px,rgba(0,0,0,0) 56.2px 60.0px,rgb(184,184,184) 60.0px 63.8px,rgb(129,129,129) 63.8px 67.5px,rgb(143,143,143) 67.5px 71.2px,rgb(160,160,160) 71.2px 75.0px,rgb(139,139,139) 75.0px 78.8px,rgb(152,152,152) 78.8px 82.5px,rgb(115,115,115) 82.5px 86.2px,rgba(0,0,0,0) 86.2px 90.0px,rgb(144,144,144) 90.0px 93.8px,rgb(150,150,150) 93.8px 97.5px,rgb(111,111,111) 97.5px 101.2px,rgb(121,121,121) 101.2px 105.0px,rgb(187,187,187) 105.0px 108.8px,rgb(172,172,172) 108.8px 112.5px,rgb(184,184,184) 112.5px 116.2px,rgba(0,0,0,0) 116.2px 120.0px,rgb(160,160,160) 120.0px 123.8px,rgb(174,174,174) 123.8px 127.5px,rgb(180,180,180) 127.5px 131.2px,rgb(180,180,180) 131.2px 135.0px,rgb(112,112,112) 135.0px 138.8px,rgb(161,161,161) 138.8px 142.5px,rgb(131,131,131) 142.5px 146.2px,rgba(0,0,0,0) 146.2px 150.0px,rgb(164,164,164) 150.0px 153.8px,rgb(131,131,131) 153.8px 157.5px,rgb(153,153,153) 157.5px 161.2px,rgb(183,183,183) 161.2px 165.0px,rgb(159,159,159) 165.0px 168.8px,rgb(130,130,130) 168.8px 172.5px,rgb(151,151,151) 172.5px 176.2px,rgb(144,144,144) 176.2px 180.0px,rgb(186,186,186) 180.0px 183.8px,rgb(133,133,133) 183.8px 187.5px,rgba(0,0,0,0) 187.5px 191.2px,rgb(134,134,134) 191.2px 195.0px,rgb(161,161,161) 195.0px 198.8px,rgb(119,119,119) 198.8px 202.5px,rgb(157,157,157) 202.5px 206.2px,rgb(186,186,186) 206.2px 210.0px,rgb(151,151,151) 210.0px 213.8px,rgb(131,131,131) 213.8px 217.5px,rgb(147,147,147) 217.5px 221.2px,rgba(0,0,0,0) 221.2px 225.0px,rgb(152,152,152) 225.0px 228.8px,rgb(121,121,121) 228.8px 232.5px,rgb(119,119,119) 232.5px 236.2px,rgb(120,120,120) 236.2px 240.0px,rgb(133,133,133) 240.0px 243.8px,rgba(0,0,0,0) 243.8px 247.5px,rgb(142,142,142) 247.5px 251.2px,rgb(133,133,133) 251.2px 255.0px,rgb(129,129,129) 255.0px 258.8px,rgb(117,117,117) 258.8px 262.5px,rgb(153,153,153) 262.5px 266.2px,rgba(0,0,0,0) 266.2px 270.0px,rgb(177,177,177) 270.0px 273.8px,rgb(158,158,158) 273.8px 277.5px,rgb(155,155,155) 277.5px 281.2px,rgb(162,162,162) 281.2px 285.0px,rgb(126,126,126) 285.0px 288.8px,rgb(166,166,166) 288.8px 289.0px)"></div><div class="a" style="left:934px;top:575.5px;width:289px;height:4.00px;background:linear-gradient(90deg,rgb(188,188,188) 0.0px 3.8px,rgb(191,191,191) 3.8px 7.5px,rgb(194,194,194) 7.5px 11.2px,rgb(188,188,188) 11.2px 15.0px,rgb(182,182,182) 15.0px 18.8px,rgba(0,0,0,0) 18.8px 22.5px,rgb(179,179,179) 22.5px 26.2px,rgb(178,178,178) 26.2px 30.0px,rgb(190,190,190) 30.0px 33.8px,rgb(185,185,185) 33.8px 37.5px,rgb(193,193,193) 37.5px 41.2px,rgb(170,170,170) 41.2px 45.0px,rgb(184,184,184) 45.0px 48.8px,rgb(204,204,204) 48.8px 52.5px,rgb(179,179,179) 52.5px 56.2px,rgba(0,0,0,0) 56.2px 60.0px,rgb(192,192,192) 60.0px 63.8px,rgb(189,189,189) 63.8px 67.5px,rgb(181,181,181) 67.5px 71.2px,rgb(209,209,209) 71.2px 75.0px,rgb(181,181,181) 75.0px 78.8px,rgb(200,200,200) 78.8px 82.5px,rgb(176,176,176) 82.5px 86.2px,rgba(0,0,0,0) 86.2px 90.0px,rgb(172,172,172) 90.0px 93.8px,rgb(204,204,204) 93.8px 97.5px,rgb(187,187,187) 97.5px 101.2px,rgb(172,172,172) 101.2px 105.0px,rgb(185,185,185) 105.0px 108.8px,rgb(187,187,187) 108.8px 112.5px,rgb(199,199,199) 112.5px 116.2px,rgba(0,0,0,0) 116.2px 120.0px,rgb(174,174,174) 120.0px 123.8px,rgb(178,178,178) 123.8px 127.5px,rgb(208,208,208) 127.5px 131.2px,rgb(199,199,199) 131.2px 135.0px,rgb(176,176,176) 135.0px 138.8px,rgb(183,183,183) 138.8px 142.5px,rgb(183,183,183) 142.5px 146.2px,rgba(0,0,0,0) 146.2px 150.0px,rgb(196,196,196) 150.0px 153.8px,rgb(194,194,194) 153.8px 157.5px,rgb(203,203,203) 157.5px 161.2px,rgb(202,202,202) 161.2px 165.0px,rgb(190,190,190) 165.0px 168.8px,rgb(199,199,199) 168.8px 172.5px,rgb(199,199,199) 172.5px 176.2px,rgb(200,200,200) 176.2px 180.0px,rgb(188,188,188) 180.0px 183.8px,rgb(201,201,201) 183.8px 187.5px,rgba(0,0,0,0) 187.5px 191.2px,rgb(198,198,198) 191.2px 195.0px,rgb(206,206,206) 195.0px 198.8px,rgb(174,174,174) 198.8px 202.5px,rgb(204,204,204) 202.5px 206.2px,rgb(170,170,170) 206.2px 210.0px,rgb(200,200,200) 210.0px 213.8px,rgb(193,193,193) 213.8px 217.5px,rgb(189,189,189) 217.5px 221.2px,rgba(0,0,0,0) 221.2px 225.0px,rgb(208,208,208) 225.0px 228.8px,rgb(192,192,192) 228.8px 232.5px,rgb(186,186,186) 232.5px 236.2px,rgb(201,201,201) 236.2px 240.0px,rgb(204,204,204) 240.0px 243.8px,rgba(0,0,0,0) 243.8px 247.5px,rgb(194,194,194) 247.5px 251.2px,rgb(185,185,185) 251.2px 255.0px,rgb(187,187,187) 255.0px 258.8px,rgb(188,188,188) 258.8px 262.5px,rgb(198,198,198) 262.5px 266.2px,rgba(0,0,0,0) 266.2px 270.0px,rgb(181,181,181) 270.0px 273.8px,rgb(185,185,185) 273.8px 277.5px,rgb(192,192,192) 277.5px 281.2px,rgb(185,185,185) 281.2px 285.0px,rgb(182,182,182) 285.0px 288.8px,rgb(201,201,201) 288.8px 289.0px)"></div>
<div class="t" style="left:920.5px;top:602.0px;font-size:10.5px;color:#1a1a1a;letter-spacing:-0.5px">- LAST CARGO : NICKEL ORE (CURRENT) - AUSSIE GRAIN - STEEL - SALT - COAL - STEEL</div>
<div class="t" style="left:920.5px;top:638.0px;font-size:10.5px;color:#1a1a1a;letter-spacing:-0.5px">- RIGHTSHIP 4</div>
<div class="t" style="left:920.5px;top:674.0px;font-size:10.5px;color:#1a1a1a;letter-spacing:-0.5px">- LAST DD JULY 2024</div>
<div class="t" style="left:920.5px;top:710.0px;font-size:10.5px;color:#1a1a1a;letter-spacing:-0.5px">- 2X25M MT TIERS = OK. AS PER LOADING MANUAL</div>
<div class="t" style="left:920.5px;top:782.5px;font-size:10.5px;color:#1a1a1a;letter-spacing:-0.5px">- TRY ANY</div>
<div class="t" style="left:920.5px;top:818.5px;font-size:10.5px;color:#1a1a1a;letter-spacing:-0.5px">INVITING RATES BSS CHTRS SCRUBBER BENEFIT</div>
<svg style="left:0;top:0" width="1503" height="938" viewBox="0 0 1503 938"><rect x="243" y="724" width="650" height="34" fill="none" stroke="#f00" stroke-width="2.2" stroke-dasharray="6 2"/><rect x="1445" y="76" width="47" height="47" fill="none" stroke="#f00" stroke-width="2.2" stroke-dasharray="5.5 2.5"/></svg>
<div class="a" style="left:834px;top:226px;width:473px;height:95px;background:#6e96c8;border:1.5px solid #0a0a0a"></div>
<div class="t" style="left:849px;top:255.0px;font-size:23px;color:#111;letter-spacing:1.3px;line-height:14px">Click the icon of selected card or</div>
<div class="t" style="left:849px;top:281.0px;font-size:23px;color:#111;letter-spacing:1.52px;line-height:14px">right-click on the card list.</div>
<svg style="left:0;top:0" width="1503" height="938" viewBox="0 0 1503 938"><line x1="1095" y1="226.5" x2="1437" y2="103.2" stroke="#000" stroke-width="2"/><path d="M1445.8 100.3L1432 98.5L1436.5 110z" fill="#000"/><line x1="998.5" y1="332.5" x2="629" y2="713.5" stroke="#000" stroke-width="2"/><path d="M621.3 721.8L625.3 708.5L634 717.8z" fill="#000"/></svg>
<div class="a" style="left:1424px;top:61px;width:36.5px;height:36px;background:#7aa1d0;border:1.3px solid #1a1a1a;border-radius:50%"></div>
<svg style="left:1436px;top:70px" width="12" height="18" viewBox="0 0 12 18" ><path d="M4.5 1h2.7v13.8h3v2.3H1.7v-2.3h2.8V4.2L1.8 5.4V3z" fill="#fff"/></svg>
</body></html>
